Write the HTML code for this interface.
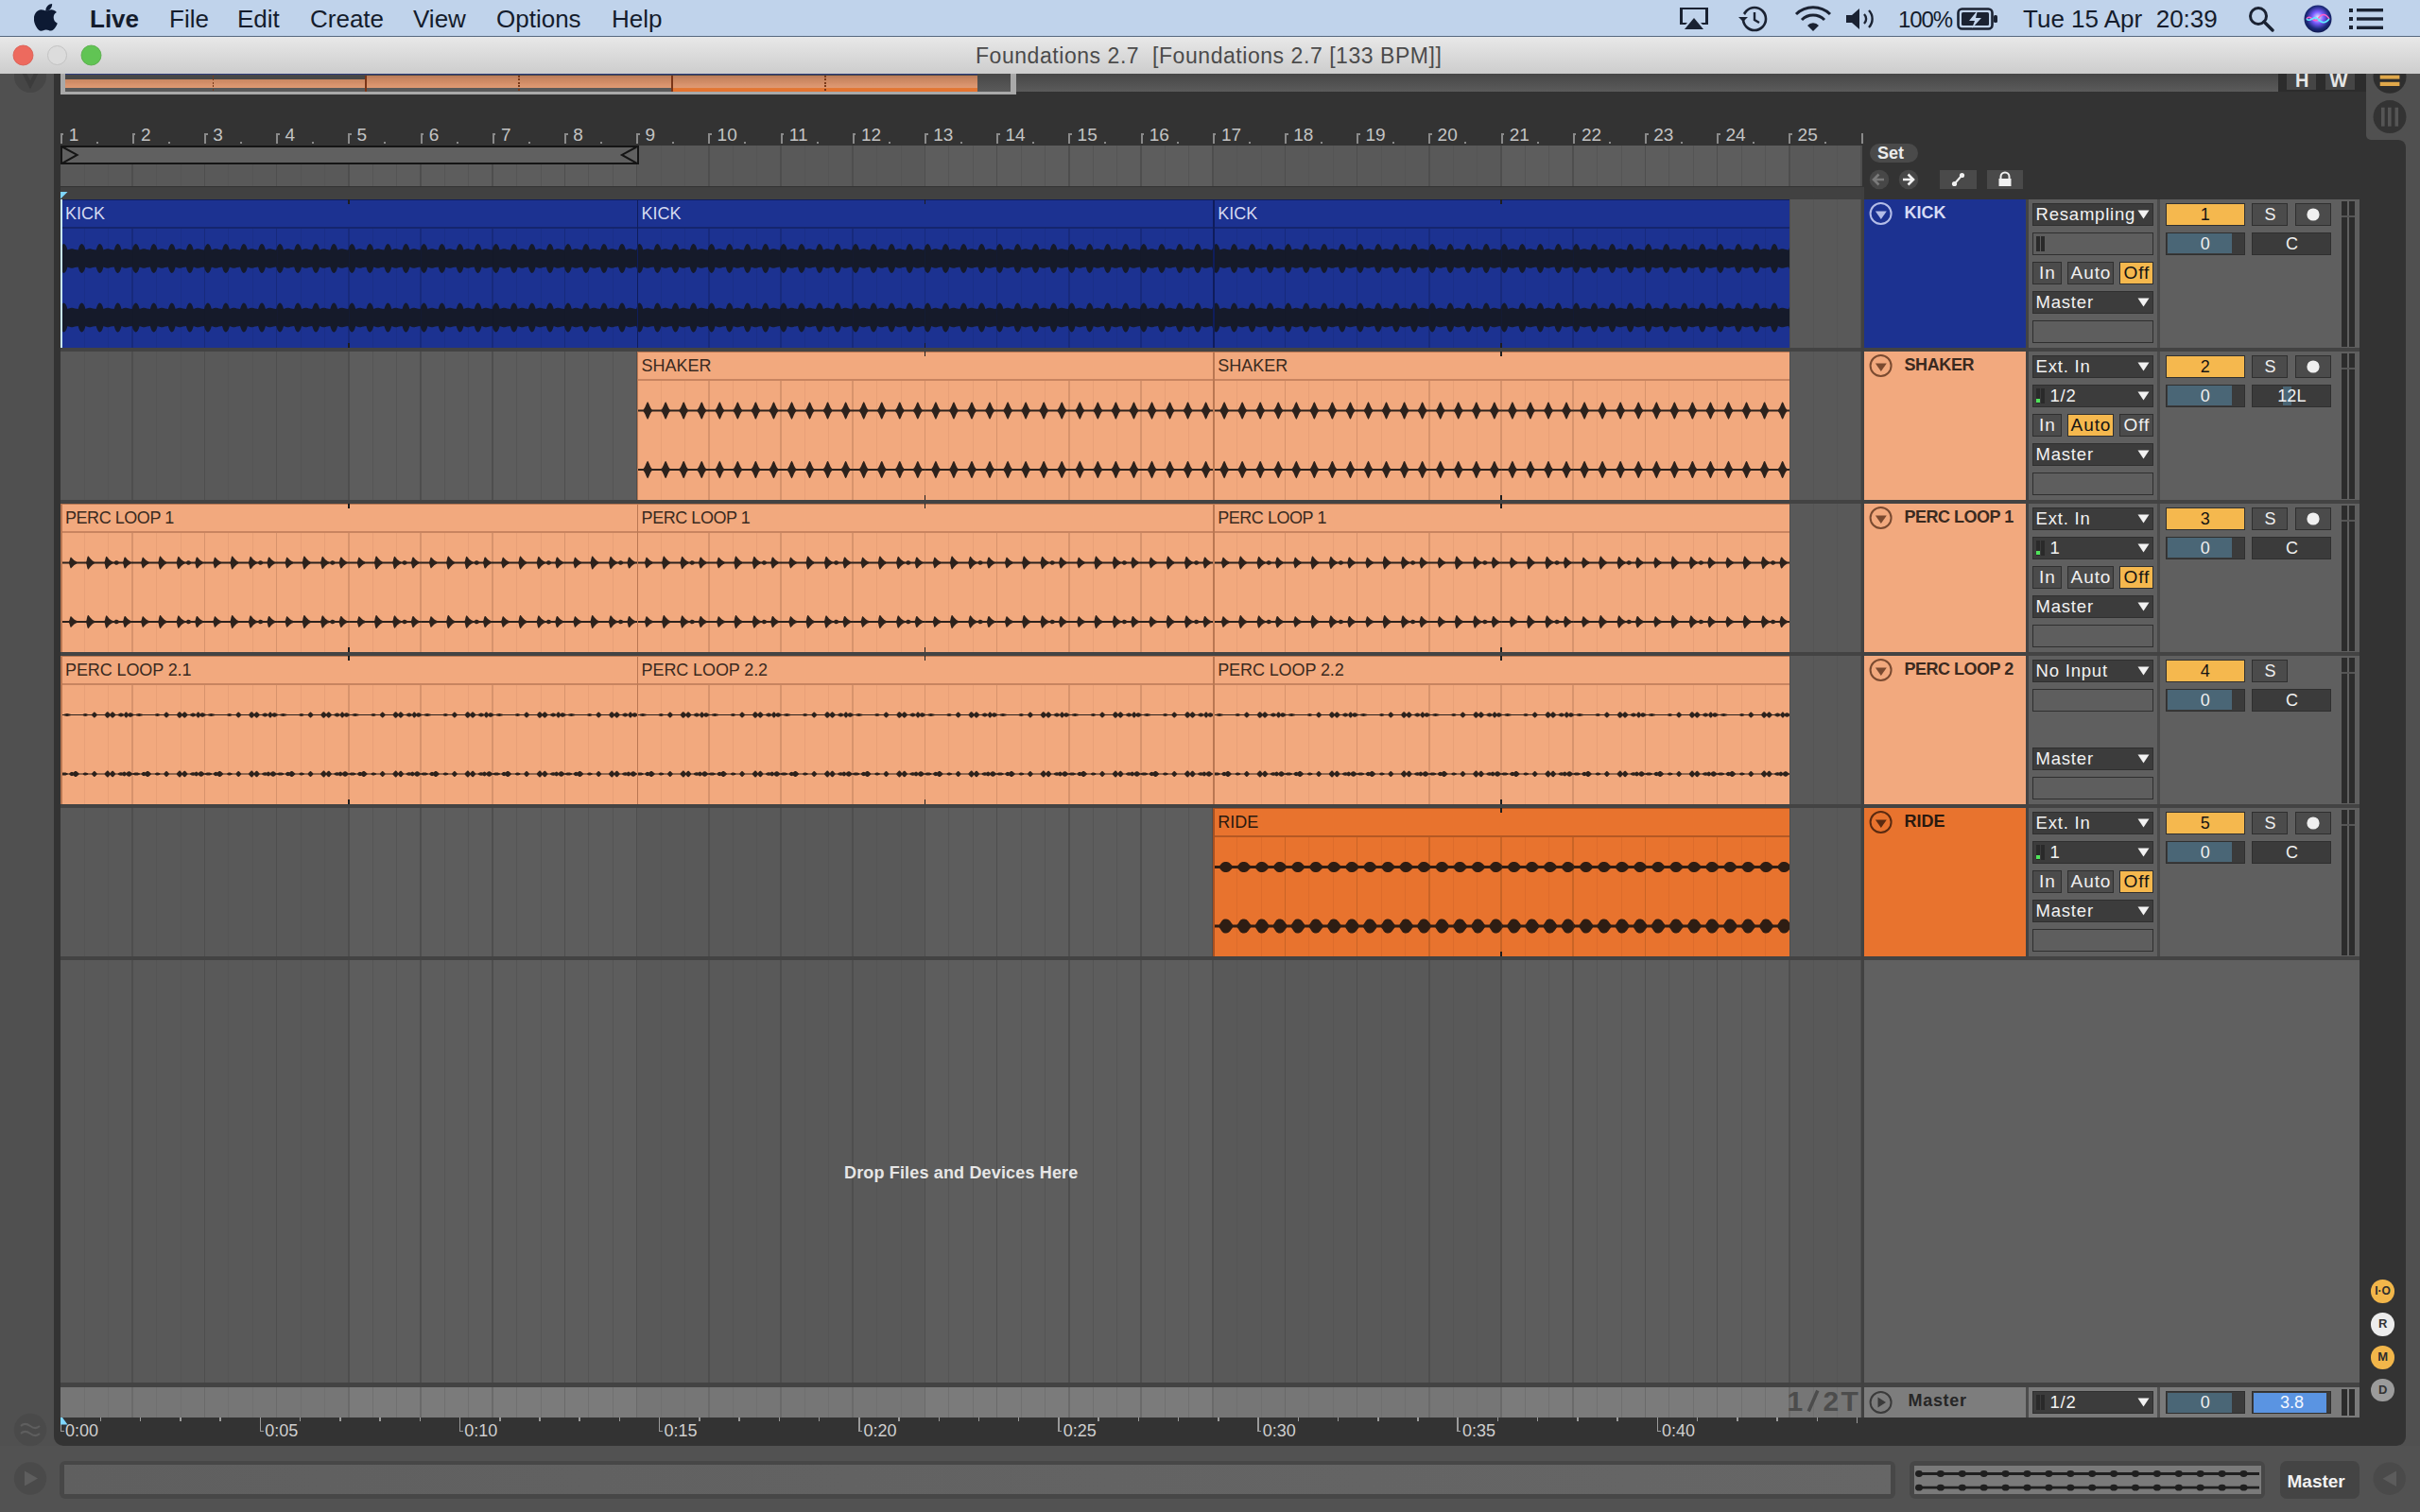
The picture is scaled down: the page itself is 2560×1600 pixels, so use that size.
<!DOCTYPE html>
<html><head><meta charset="utf-8"><title>Ableton Live - Foundations 2.7</title>
<style>
html,body{margin:0;padding:0;}
body{width:2560px;height:1600px;overflow:hidden;position:relative;background:#505050;font-family:"Liberation Sans",sans-serif;}
#root>div,#root>svg{position:absolute;box-sizing:border-box;}
</style></head><body><div id="root">
<div style="left:0.00px;top:1530.00px;width:2560.00px;height:70.00px;background:#525252;"></div>
<div style="left:57.00px;top:78.00px;width:2446.00px;height:1452.00px;background:#333333;border-radius:0 0 10px 10px;"></div>
<div style="left:2460.00px;top:148.00px;width:85.00px;height:1382.00px;background:#333333;border-radius:0 8px 10px 0;"></div>
<div style="left:2490.00px;top:130.00px;width:30.00px;height:18.00px;background:#333333;"></div>
<div style="left:2503.00px;top:78.00px;width:57.00px;height:70.00px;background:#505050;border-radius:0 0 0 5px;"></div>
<div style="left:0.00px;top:0.00px;width:2560.00px;height:38.00px;background:#c0d3eb;"></div>
<div style="left:0.00px;top:37.60px;width:2560.00px;height:1.20px;background:#56687f;"></div>
<svg style="left:36.00px;top:3.00px;" width="26.00" height="30.00" viewBox="0 0 26.00 30.00"><path fill="#0d1a33" d="M17.6 0.5c0.2 2.1-0.6 4-1.8 5.3-1.3 1.4-3.1 2.3-4.9 2.2-0.2-2 0.7-4 1.9-5.2 1.3-1.4 3.3-2.3 4.8-2.3zM23.3 21.2c-0.7 1.6-1 2.3-1.9 3.7-1.3 1.9-3 4.2-5.2 4.2-1.9 0-2.4-1.2-5-1.2-2.6 0-3.2 1.3-5.1 1.3-2.2 0-3.8-2.1-5-4C-2.2 20.1-2.5 13.7 0.1 10.2 1.6 8 3.9 6.8 6.1 6.8c2.2 0 3.6 1.2 5.4 1.2 1.8 0 2.9-1.2 5.4-1.2 1.9 0 4 1 5.5 2.8-4.8 2.6-4 9.5 0.9 11.6z" transform="translate(1.5,0.5)"/></svg>
<div style="left:95.00px;top:6.99px;font-size:26px;line-height:26px;height:26px;color:#141c2c;font-weight:bold;white-space:nowrap;">Live</div>
<div style="left:179.00px;top:6.99px;font-size:26px;line-height:26px;height:26px;color:#141c2c;font-weight:normal;white-space:nowrap;">File</div>
<div style="left:251.00px;top:6.99px;font-size:26px;line-height:26px;height:26px;color:#141c2c;font-weight:normal;white-space:nowrap;">Edit</div>
<div style="left:328.00px;top:6.99px;font-size:26px;line-height:26px;height:26px;color:#141c2c;font-weight:normal;white-space:nowrap;">Create</div>
<div style="left:437.00px;top:6.99px;font-size:26px;line-height:26px;height:26px;color:#141c2c;font-weight:normal;white-space:nowrap;">View</div>
<div style="left:525.00px;top:6.99px;font-size:26px;line-height:26px;height:26px;color:#141c2c;font-weight:normal;white-space:nowrap;">Options</div>
<div style="left:647.00px;top:6.99px;font-size:26px;line-height:26px;height:26px;color:#141c2c;font-weight:normal;white-space:nowrap;">Help</div>
<svg style="left:1774.00px;top:6.00px;" width="36.00" height="28.00" viewBox="0 0 36.00 28.00"><path d="M3 2h30v18h-6l-2-2h5V4H6v14h5l-2 2H3z" fill="#1a2232"/><path d="M18 13l10 12H8z" fill="#1a2232"/></svg>
<svg style="left:1836.00px;top:5.00px;" width="38.00" height="30.00" viewBox="0 0 38.00 30.00"><circle cx="20" cy="15" r="12" fill="none" stroke="#1a2232" stroke-width="2.6"/><path d="M20 8v8l5 3" fill="none" stroke="#1a2232" stroke-width="2.4"/><path d="M2 15l6-6 6 6z" fill="#c3d5ed"/><path d="M3 13l5 5 5-5z" fill="#1a2232"/></svg>
<svg style="left:1898.00px;top:6.00px;" width="40.00" height="28.00" viewBox="0 0 40.00 28.00"><path d="M2 9a26 26 0 0 1 36 0" fill="none" stroke="#1a2232" stroke-width="3"/><path d="M8 15a17 17 0 0 1 24 0" fill="none" stroke="#1a2232" stroke-width="3"/><path d="M14 21a8 8 0 0 1 12 0l-6 6z" fill="#1a2232"/></svg>
<svg style="left:1952.00px;top:8.00px;" width="34.00" height="24.00" viewBox="0 0 34.00 24.00"><path d="M1 8h6l8-7v22l-8-7H1z" fill="#1a2232"/><path d="M20 7a7 7 0 0 1 0 10" fill="none" stroke="#1a2232" stroke-width="2.4"/><path d="M25 3a13 13 0 0 1 0 18" fill="none" stroke="#1a2232" stroke-width="2.4"/></svg>
<div style="left:2008.00px;top:8.68px;font-size:24px;line-height:24px;height:24px;color:#141c2c;font-weight:normal;white-space:nowrap;letter-spacing:-1.1px;">100%</div>
<svg style="left:2070.00px;top:8.00px;" width="44.00" height="24.00" viewBox="0 0 44.00 24.00"><rect x="1.5" y="1.5" width="36" height="21" rx="4" fill="none" stroke="#1a2232" stroke-width="2.6"/><rect x="39" y="8" width="4" height="8" rx="1.5" fill="#1a2232"/><rect x="5" y="5" width="29" height="14" rx="1.5" fill="#1a2232"/><path d="M22 3l-9 11h6l-3 8 10-11h-6z" fill="#c3d5ed"/></svg>
<div style="left:2140.00px;top:6.99px;font-size:26px;line-height:26px;height:26px;color:#141c2c;font-weight:normal;white-space:nowrap;">Tue 15 Apr&nbsp;&nbsp;20:39</div>
<svg style="left:2378.00px;top:6.00px;" width="30.00" height="28.00" viewBox="0 0 30.00 28.00"><circle cx="11" cy="11" r="8.5" fill="none" stroke="#1a2232" stroke-width="3"/><path d="M17 17l9 9" stroke="#1a2232" stroke-width="3.4" stroke-linecap="round"/></svg>
<svg style="left:2436.00px;top:5.00px;" width="32.00" height="30.00" viewBox="0 0 32.00 30.00"><defs><radialGradient id="sg" cx="50%" cy="45%" r="60%"><stop offset="0" stop-color="#e8f0ff"/><stop offset="0.35" stop-color="#7a5cff"/><stop offset="0.7" stop-color="#1b2a7a"/><stop offset="1" stop-color="#0b1240"/></radialGradient></defs><circle cx="16" cy="15" r="14.5" fill="url(#sg)"/><path d="M4 15c4-6 8 6 12 0s8-6 12 0" fill="none" stroke="#ff5ec8" stroke-width="1.6"/><path d="M4 15c4 5 8-5 12 0s8 5 12 0" fill="none" stroke="#5ef0ff" stroke-width="1.6"/></svg>
<svg style="left:2484.00px;top:8.00px;" width="38.00" height="24.00" viewBox="0 0 38.00 24.00"><rect x="1" y="1" width="4" height="4" fill="#1a2232"/><rect x="1" y="10" width="4" height="4" fill="#1a2232"/><rect x="1" y="19" width="4" height="4" fill="#1a2232"/><rect x="9" y="1" width="28" height="3.4" fill="#1a2232"/><rect x="9" y="10.3" width="28" height="3.4" fill="#1a2232"/><rect x="9" y="19.6" width="28" height="3.4" fill="#1a2232"/></svg>
<div style="left:0.00px;top:38.80px;width:2560.00px;height:39.20px;background:linear-gradient(#e8e8e8,#cdcdcd);"></div>
<svg style="left:12.00px;top:47.00px;" width="26.00" height="24.00" viewBox="0 0 26.00 24.00"><circle cx="12.5" cy="11.5" r="10.5" fill="#ed6a5e" stroke="#d9574b" stroke-width="0.8"/></svg>
<svg style="left:48.00px;top:47.00px;" width="26.00" height="24.00" viewBox="0 0 26.00 24.00"><circle cx="12.5" cy="11.5" r="10" fill="#dcdcdc" stroke="#c2c2c2" stroke-width="1"/></svg>
<svg style="left:84.00px;top:47.00px;" width="26.00" height="24.00" viewBox="0 0 26.00 24.00"><circle cx="12.5" cy="11.5" r="10.5" fill="#61c454" stroke="#52a842" stroke-width="0.8"/></svg>
<div style="left:1032.00px;top:47.73px;font-size:23px;line-height:23px;height:23px;color:#4b4b4b;font-weight:normal;white-space:nowrap;letter-spacing:0.55px;">Foundations 2.7&nbsp;&nbsp;[Foundations 2.7 [133 BPM]]</div>
<svg style="left:14.00px;top:78.00px;" width="38.00" height="22.00" viewBox="0 0 38.00 22.00"><circle cx="18" cy="3" r="17" fill="#464646"/><path d="M9 -6l9 18 9-18" fill="none" stroke="#3c3c3c" stroke-width="4"/></svg>
<div style="left:64.00px;top:78.00px;width:1011.00px;height:22.00px;background:#a9a9a9;"></div>
<div style="left:69.00px;top:78.00px;width:1000.00px;height:19.00px;background:linear-gradient(#474747,#5a5a5a);"></div>
<div style="left:69.00px;top:78.00px;width:965.34px;height:1.30px;background:#2e3a78;"></div>
<div style="left:69.00px;top:79.60px;width:317.98px;height:4.00px;background:#474747;"></div>
<div style="left:386.98px;top:79.60px;width:647.36px;height:4.00px;background:linear-gradient(#b97a57,#c98864);"></div>
<div style="left:69.00px;top:83.60px;width:965.34px;height:4.40px;background:linear-gradient(#c98761,#d48e68);"></div>
<div style="left:69.00px;top:88.00px;width:965.34px;height:4.50px;background:linear-gradient(#d4906a,#e09a73);"></div>
<div style="left:69.00px;top:92.50px;width:641.66px;height:4.50px;background:#595959;"></div>
<div style="left:710.66px;top:92.50px;width:323.68px;height:4.50px;background:linear-gradient(#e07a3a,#e8702a);"></div>
<div style="left:224.64px;top:80px;width:1.5px;height:16px;background:repeating-linear-gradient(#7a3a1a 0 2px,transparent 2px 3.5px);"></div>
<div style="left:548.32px;top:80px;width:1.5px;height:16px;background:repeating-linear-gradient(#7a3a1a 0 2px,transparent 2px 3.5px);"></div>
<div style="left:872.00px;top:80px;width:1.5px;height:16px;background:repeating-linear-gradient(#7a3a1a 0 2px,transparent 2px 3.5px);"></div>
<div style="left:386.28px;top:79.60px;width:1.60px;height:17.40px;background:#7a3518;"></div>
<div style="left:709.96px;top:79.60px;width:1.60px;height:17.40px;background:#7a3518;"></div>
<div style="left:1075.00px;top:78.00px;width:1335.00px;height:19.00px;background:linear-gradient(#464646,#5b5b5b);"></div>
<div style="left:2410.00px;top:78.00px;width:93.00px;height:19.00px;background:#2c2c2c;"></div>
<div style="left:2419.00px;top:78.00px;width:31.00px;height:17.00px;background:#454545;"></div>
<div style="left:2459.50px;top:78.00px;width:31.00px;height:17.00px;background:#454545;"></div>
<div style="left:2428.00px;top:74.57px;font-size:20px;line-height:20px;height:20px;color:#e6e6e6;font-weight:bold;white-space:nowrap;">H</div>
<div style="left:2464.50px;top:74.57px;font-size:20px;line-height:20px;height:20px;color:#e6e6e6;font-weight:bold;white-space:nowrap;">W</div>
<svg style="left:2509.00px;top:78.00px;" width="38.00" height="64.00" viewBox="0 0 38.00 64.00"><circle cx="19" cy="3.3" r="17.5" fill="#2e2e2e"/><rect x="8.7" y="1.6" width="20.7" height="4" fill="#e0a84a"/><rect x="8.7" y="8.8" width="20.7" height="4.2" fill="#e0a84a"/><circle cx="19" cy="45.6" r="17.5" fill="#333"/><rect x="10" y="35.7" width="3.6" height="20" fill="#555"/><rect x="17" y="35.7" width="3.6" height="20" fill="#555"/><rect x="24.5" y="35.7" width="3.6" height="20" fill="#555"/></svg>
<div style="left:63.60px;top:141.00px;width:2.00px;height:11.00px;background:#8a8a8a;"></div>
<div style="left:63.60px;top:141.00px;width:3.50px;height:2.00px;background:#8a8a8a;"></div>
<div style="left:72.80px;top:132.62px;font-size:19px;line-height:19px;height:19px;color:#c4c4c4;font-weight:normal;white-space:nowrap;">1</div>
<div style="left:101.60px;top:150.00px;width:2.00px;height:2.00px;background:#8a8a8a;"></div>
<div style="left:139.80px;top:141.00px;width:2.00px;height:11.00px;background:#8a8a8a;"></div>
<div style="left:139.80px;top:141.00px;width:3.50px;height:2.00px;background:#8a8a8a;"></div>
<div style="left:149.00px;top:132.62px;font-size:19px;line-height:19px;height:19px;color:#c4c4c4;font-weight:normal;white-space:nowrap;">2</div>
<div style="left:177.80px;top:150.00px;width:2.00px;height:2.00px;background:#8a8a8a;"></div>
<div style="left:216.00px;top:141.00px;width:2.00px;height:11.00px;background:#8a8a8a;"></div>
<div style="left:216.00px;top:141.00px;width:3.50px;height:2.00px;background:#8a8a8a;"></div>
<div style="left:225.20px;top:132.62px;font-size:19px;line-height:19px;height:19px;color:#c4c4c4;font-weight:normal;white-space:nowrap;">3</div>
<div style="left:254.00px;top:150.00px;width:2.00px;height:2.00px;background:#8a8a8a;"></div>
<div style="left:292.20px;top:141.00px;width:2.00px;height:11.00px;background:#8a8a8a;"></div>
<div style="left:292.20px;top:141.00px;width:3.50px;height:2.00px;background:#8a8a8a;"></div>
<div style="left:301.40px;top:132.62px;font-size:19px;line-height:19px;height:19px;color:#c4c4c4;font-weight:normal;white-space:nowrap;">4</div>
<div style="left:330.20px;top:150.00px;width:2.00px;height:2.00px;background:#8a8a8a;"></div>
<div style="left:368.40px;top:141.00px;width:2.00px;height:11.00px;background:#8a8a8a;"></div>
<div style="left:368.40px;top:141.00px;width:3.50px;height:2.00px;background:#8a8a8a;"></div>
<div style="left:377.60px;top:132.62px;font-size:19px;line-height:19px;height:19px;color:#c4c4c4;font-weight:normal;white-space:nowrap;">5</div>
<div style="left:406.40px;top:150.00px;width:2.00px;height:2.00px;background:#8a8a8a;"></div>
<div style="left:444.60px;top:141.00px;width:2.00px;height:11.00px;background:#8a8a8a;"></div>
<div style="left:444.60px;top:141.00px;width:3.50px;height:2.00px;background:#8a8a8a;"></div>
<div style="left:453.80px;top:132.62px;font-size:19px;line-height:19px;height:19px;color:#c4c4c4;font-weight:normal;white-space:nowrap;">6</div>
<div style="left:482.60px;top:150.00px;width:2.00px;height:2.00px;background:#8a8a8a;"></div>
<div style="left:520.80px;top:141.00px;width:2.00px;height:11.00px;background:#8a8a8a;"></div>
<div style="left:520.80px;top:141.00px;width:3.50px;height:2.00px;background:#8a8a8a;"></div>
<div style="left:530.00px;top:132.62px;font-size:19px;line-height:19px;height:19px;color:#c4c4c4;font-weight:normal;white-space:nowrap;">7</div>
<div style="left:558.80px;top:150.00px;width:2.00px;height:2.00px;background:#8a8a8a;"></div>
<div style="left:597.00px;top:141.00px;width:2.00px;height:11.00px;background:#8a8a8a;"></div>
<div style="left:597.00px;top:141.00px;width:3.50px;height:2.00px;background:#8a8a8a;"></div>
<div style="left:606.20px;top:132.62px;font-size:19px;line-height:19px;height:19px;color:#c4c4c4;font-weight:normal;white-space:nowrap;">8</div>
<div style="left:635.00px;top:150.00px;width:2.00px;height:2.00px;background:#8a8a8a;"></div>
<div style="left:673.20px;top:141.00px;width:2.00px;height:11.00px;background:#8a8a8a;"></div>
<div style="left:673.20px;top:141.00px;width:3.50px;height:2.00px;background:#8a8a8a;"></div>
<div style="left:682.40px;top:132.62px;font-size:19px;line-height:19px;height:19px;color:#c4c4c4;font-weight:normal;white-space:nowrap;">9</div>
<div style="left:711.20px;top:150.00px;width:2.00px;height:2.00px;background:#8a8a8a;"></div>
<div style="left:749.40px;top:141.00px;width:2.00px;height:11.00px;background:#8a8a8a;"></div>
<div style="left:749.40px;top:141.00px;width:3.50px;height:2.00px;background:#8a8a8a;"></div>
<div style="left:758.60px;top:132.62px;font-size:19px;line-height:19px;height:19px;color:#c4c4c4;font-weight:normal;white-space:nowrap;">10</div>
<div style="left:787.40px;top:150.00px;width:2.00px;height:2.00px;background:#8a8a8a;"></div>
<div style="left:825.60px;top:141.00px;width:2.00px;height:11.00px;background:#8a8a8a;"></div>
<div style="left:825.60px;top:141.00px;width:3.50px;height:2.00px;background:#8a8a8a;"></div>
<div style="left:834.80px;top:132.62px;font-size:19px;line-height:19px;height:19px;color:#c4c4c4;font-weight:normal;white-space:nowrap;">11</div>
<div style="left:863.60px;top:150.00px;width:2.00px;height:2.00px;background:#8a8a8a;"></div>
<div style="left:901.80px;top:141.00px;width:2.00px;height:11.00px;background:#8a8a8a;"></div>
<div style="left:901.80px;top:141.00px;width:3.50px;height:2.00px;background:#8a8a8a;"></div>
<div style="left:911.00px;top:132.62px;font-size:19px;line-height:19px;height:19px;color:#c4c4c4;font-weight:normal;white-space:nowrap;">12</div>
<div style="left:939.80px;top:150.00px;width:2.00px;height:2.00px;background:#8a8a8a;"></div>
<div style="left:978.00px;top:141.00px;width:2.00px;height:11.00px;background:#8a8a8a;"></div>
<div style="left:978.00px;top:141.00px;width:3.50px;height:2.00px;background:#8a8a8a;"></div>
<div style="left:987.20px;top:132.62px;font-size:19px;line-height:19px;height:19px;color:#c4c4c4;font-weight:normal;white-space:nowrap;">13</div>
<div style="left:1016.00px;top:150.00px;width:2.00px;height:2.00px;background:#8a8a8a;"></div>
<div style="left:1054.20px;top:141.00px;width:2.00px;height:11.00px;background:#8a8a8a;"></div>
<div style="left:1054.20px;top:141.00px;width:3.50px;height:2.00px;background:#8a8a8a;"></div>
<div style="left:1063.40px;top:132.62px;font-size:19px;line-height:19px;height:19px;color:#c4c4c4;font-weight:normal;white-space:nowrap;">14</div>
<div style="left:1092.20px;top:150.00px;width:2.00px;height:2.00px;background:#8a8a8a;"></div>
<div style="left:1130.40px;top:141.00px;width:2.00px;height:11.00px;background:#8a8a8a;"></div>
<div style="left:1130.40px;top:141.00px;width:3.50px;height:2.00px;background:#8a8a8a;"></div>
<div style="left:1139.60px;top:132.62px;font-size:19px;line-height:19px;height:19px;color:#c4c4c4;font-weight:normal;white-space:nowrap;">15</div>
<div style="left:1168.40px;top:150.00px;width:2.00px;height:2.00px;background:#8a8a8a;"></div>
<div style="left:1206.60px;top:141.00px;width:2.00px;height:11.00px;background:#8a8a8a;"></div>
<div style="left:1206.60px;top:141.00px;width:3.50px;height:2.00px;background:#8a8a8a;"></div>
<div style="left:1215.80px;top:132.62px;font-size:19px;line-height:19px;height:19px;color:#c4c4c4;font-weight:normal;white-space:nowrap;">16</div>
<div style="left:1244.60px;top:150.00px;width:2.00px;height:2.00px;background:#8a8a8a;"></div>
<div style="left:1282.80px;top:141.00px;width:2.00px;height:11.00px;background:#8a8a8a;"></div>
<div style="left:1282.80px;top:141.00px;width:3.50px;height:2.00px;background:#8a8a8a;"></div>
<div style="left:1292.00px;top:132.62px;font-size:19px;line-height:19px;height:19px;color:#c4c4c4;font-weight:normal;white-space:nowrap;">17</div>
<div style="left:1320.80px;top:150.00px;width:2.00px;height:2.00px;background:#8a8a8a;"></div>
<div style="left:1359.00px;top:141.00px;width:2.00px;height:11.00px;background:#8a8a8a;"></div>
<div style="left:1359.00px;top:141.00px;width:3.50px;height:2.00px;background:#8a8a8a;"></div>
<div style="left:1368.20px;top:132.62px;font-size:19px;line-height:19px;height:19px;color:#c4c4c4;font-weight:normal;white-space:nowrap;">18</div>
<div style="left:1397.00px;top:150.00px;width:2.00px;height:2.00px;background:#8a8a8a;"></div>
<div style="left:1435.20px;top:141.00px;width:2.00px;height:11.00px;background:#8a8a8a;"></div>
<div style="left:1435.20px;top:141.00px;width:3.50px;height:2.00px;background:#8a8a8a;"></div>
<div style="left:1444.40px;top:132.62px;font-size:19px;line-height:19px;height:19px;color:#c4c4c4;font-weight:normal;white-space:nowrap;">19</div>
<div style="left:1473.20px;top:150.00px;width:2.00px;height:2.00px;background:#8a8a8a;"></div>
<div style="left:1511.40px;top:141.00px;width:2.00px;height:11.00px;background:#8a8a8a;"></div>
<div style="left:1511.40px;top:141.00px;width:3.50px;height:2.00px;background:#8a8a8a;"></div>
<div style="left:1520.60px;top:132.62px;font-size:19px;line-height:19px;height:19px;color:#c4c4c4;font-weight:normal;white-space:nowrap;">20</div>
<div style="left:1549.40px;top:150.00px;width:2.00px;height:2.00px;background:#8a8a8a;"></div>
<div style="left:1587.60px;top:141.00px;width:2.00px;height:11.00px;background:#8a8a8a;"></div>
<div style="left:1587.60px;top:141.00px;width:3.50px;height:2.00px;background:#8a8a8a;"></div>
<div style="left:1596.80px;top:132.62px;font-size:19px;line-height:19px;height:19px;color:#c4c4c4;font-weight:normal;white-space:nowrap;">21</div>
<div style="left:1625.60px;top:150.00px;width:2.00px;height:2.00px;background:#8a8a8a;"></div>
<div style="left:1663.80px;top:141.00px;width:2.00px;height:11.00px;background:#8a8a8a;"></div>
<div style="left:1663.80px;top:141.00px;width:3.50px;height:2.00px;background:#8a8a8a;"></div>
<div style="left:1673.00px;top:132.62px;font-size:19px;line-height:19px;height:19px;color:#c4c4c4;font-weight:normal;white-space:nowrap;">22</div>
<div style="left:1701.80px;top:150.00px;width:2.00px;height:2.00px;background:#8a8a8a;"></div>
<div style="left:1740.00px;top:141.00px;width:2.00px;height:11.00px;background:#8a8a8a;"></div>
<div style="left:1740.00px;top:141.00px;width:3.50px;height:2.00px;background:#8a8a8a;"></div>
<div style="left:1749.20px;top:132.62px;font-size:19px;line-height:19px;height:19px;color:#c4c4c4;font-weight:normal;white-space:nowrap;">23</div>
<div style="left:1778.00px;top:150.00px;width:2.00px;height:2.00px;background:#8a8a8a;"></div>
<div style="left:1816.20px;top:141.00px;width:2.00px;height:11.00px;background:#8a8a8a;"></div>
<div style="left:1816.20px;top:141.00px;width:3.50px;height:2.00px;background:#8a8a8a;"></div>
<div style="left:1825.40px;top:132.62px;font-size:19px;line-height:19px;height:19px;color:#c4c4c4;font-weight:normal;white-space:nowrap;">24</div>
<div style="left:1854.20px;top:150.00px;width:2.00px;height:2.00px;background:#8a8a8a;"></div>
<div style="left:1892.40px;top:141.00px;width:2.00px;height:11.00px;background:#8a8a8a;"></div>
<div style="left:1892.40px;top:141.00px;width:3.50px;height:2.00px;background:#8a8a8a;"></div>
<div style="left:1901.60px;top:132.62px;font-size:19px;line-height:19px;height:19px;color:#c4c4c4;font-weight:normal;white-space:nowrap;">25</div>
<div style="left:1930.40px;top:150.00px;width:2.00px;height:2.00px;background:#8a8a8a;"></div>
<div style="left:1968.50px;top:141.00px;width:2.00px;height:11.00px;background:#8a8a8a;"></div>
<div style="left:64.00px;top:153.60px;width:304.80px;height:43.90px;background:#595959;"></div>
<div style="left:368.80px;top:153.60px;width:304.80px;height:43.90px;background:#5d5d5d;"></div>
<div style="left:673.60px;top:153.60px;width:304.80px;height:43.90px;background:#595959;"></div>
<div style="left:978.40px;top:153.60px;width:304.80px;height:43.90px;background:#5d5d5d;"></div>
<div style="left:1283.20px;top:153.60px;width:304.80px;height:43.90px;background:#595959;"></div>
<div style="left:1588.00px;top:153.60px;width:304.80px;height:43.90px;background:#5d5d5d;"></div>
<div style="left:1892.80px;top:153.60px;width:76.20px;height:43.90px;background:#595959;"></div>
<div style="left:88.90px;top:153.60px;width:1.00px;height:43.90px;background:#555555;"></div>
<div style="left:114.30px;top:153.60px;width:1.00px;height:43.90px;background:#555555;"></div>
<div style="left:139.45px;top:153.60px;width:1.50px;height:43.90px;background:#4e4e4e;"></div>
<div style="left:165.10px;top:153.60px;width:1.00px;height:43.90px;background:#555555;"></div>
<div style="left:190.50px;top:153.60px;width:1.00px;height:43.90px;background:#555555;"></div>
<div style="left:215.65px;top:153.60px;width:1.50px;height:43.90px;background:#4e4e4e;"></div>
<div style="left:241.30px;top:153.60px;width:1.00px;height:43.90px;background:#555555;"></div>
<div style="left:266.70px;top:153.60px;width:1.00px;height:43.90px;background:#555555;"></div>
<div style="left:291.85px;top:153.60px;width:1.50px;height:43.90px;background:#4e4e4e;"></div>
<div style="left:317.50px;top:153.60px;width:1.00px;height:43.90px;background:#555555;"></div>
<div style="left:342.90px;top:153.60px;width:1.00px;height:43.90px;background:#555555;"></div>
<div style="left:368.05px;top:153.60px;width:1.50px;height:43.90px;background:#4e4e4e;"></div>
<div style="left:393.70px;top:153.60px;width:1.00px;height:43.90px;background:#555555;"></div>
<div style="left:419.10px;top:153.60px;width:1.00px;height:43.90px;background:#555555;"></div>
<div style="left:444.25px;top:153.60px;width:1.50px;height:43.90px;background:#4e4e4e;"></div>
<div style="left:469.90px;top:153.60px;width:1.00px;height:43.90px;background:#555555;"></div>
<div style="left:495.30px;top:153.60px;width:1.00px;height:43.90px;background:#555555;"></div>
<div style="left:520.45px;top:153.60px;width:1.50px;height:43.90px;background:#4e4e4e;"></div>
<div style="left:546.10px;top:153.60px;width:1.00px;height:43.90px;background:#555555;"></div>
<div style="left:571.50px;top:153.60px;width:1.00px;height:43.90px;background:#555555;"></div>
<div style="left:596.65px;top:153.60px;width:1.50px;height:43.90px;background:#4e4e4e;"></div>
<div style="left:622.30px;top:153.60px;width:1.00px;height:43.90px;background:#555555;"></div>
<div style="left:647.70px;top:153.60px;width:1.00px;height:43.90px;background:#555555;"></div>
<div style="left:672.85px;top:153.60px;width:1.50px;height:43.90px;background:#4e4e4e;"></div>
<div style="left:698.50px;top:153.60px;width:1.00px;height:43.90px;background:#555555;"></div>
<div style="left:723.90px;top:153.60px;width:1.00px;height:43.90px;background:#555555;"></div>
<div style="left:749.05px;top:153.60px;width:1.50px;height:43.90px;background:#4e4e4e;"></div>
<div style="left:774.70px;top:153.60px;width:1.00px;height:43.90px;background:#555555;"></div>
<div style="left:800.10px;top:153.60px;width:1.00px;height:43.90px;background:#555555;"></div>
<div style="left:825.25px;top:153.60px;width:1.50px;height:43.90px;background:#4e4e4e;"></div>
<div style="left:850.90px;top:153.60px;width:1.00px;height:43.90px;background:#555555;"></div>
<div style="left:876.30px;top:153.60px;width:1.00px;height:43.90px;background:#555555;"></div>
<div style="left:901.45px;top:153.60px;width:1.50px;height:43.90px;background:#4e4e4e;"></div>
<div style="left:927.10px;top:153.60px;width:1.00px;height:43.90px;background:#555555;"></div>
<div style="left:952.50px;top:153.60px;width:1.00px;height:43.90px;background:#555555;"></div>
<div style="left:977.65px;top:153.60px;width:1.50px;height:43.90px;background:#4e4e4e;"></div>
<div style="left:1003.30px;top:153.60px;width:1.00px;height:43.90px;background:#555555;"></div>
<div style="left:1028.70px;top:153.60px;width:1.00px;height:43.90px;background:#555555;"></div>
<div style="left:1053.85px;top:153.60px;width:1.50px;height:43.90px;background:#4e4e4e;"></div>
<div style="left:1079.50px;top:153.60px;width:1.00px;height:43.90px;background:#555555;"></div>
<div style="left:1104.90px;top:153.60px;width:1.00px;height:43.90px;background:#555555;"></div>
<div style="left:1130.05px;top:153.60px;width:1.50px;height:43.90px;background:#4e4e4e;"></div>
<div style="left:1155.70px;top:153.60px;width:1.00px;height:43.90px;background:#555555;"></div>
<div style="left:1181.10px;top:153.60px;width:1.00px;height:43.90px;background:#555555;"></div>
<div style="left:1206.25px;top:153.60px;width:1.50px;height:43.90px;background:#4e4e4e;"></div>
<div style="left:1231.90px;top:153.60px;width:1.00px;height:43.90px;background:#555555;"></div>
<div style="left:1257.30px;top:153.60px;width:1.00px;height:43.90px;background:#555555;"></div>
<div style="left:1282.45px;top:153.60px;width:1.50px;height:43.90px;background:#4e4e4e;"></div>
<div style="left:1308.10px;top:153.60px;width:1.00px;height:43.90px;background:#555555;"></div>
<div style="left:1333.50px;top:153.60px;width:1.00px;height:43.90px;background:#555555;"></div>
<div style="left:1358.65px;top:153.60px;width:1.50px;height:43.90px;background:#4e4e4e;"></div>
<div style="left:1384.30px;top:153.60px;width:1.00px;height:43.90px;background:#555555;"></div>
<div style="left:1409.70px;top:153.60px;width:1.00px;height:43.90px;background:#555555;"></div>
<div style="left:1434.85px;top:153.60px;width:1.50px;height:43.90px;background:#4e4e4e;"></div>
<div style="left:1460.50px;top:153.60px;width:1.00px;height:43.90px;background:#555555;"></div>
<div style="left:1485.90px;top:153.60px;width:1.00px;height:43.90px;background:#555555;"></div>
<div style="left:1511.05px;top:153.60px;width:1.50px;height:43.90px;background:#4e4e4e;"></div>
<div style="left:1536.70px;top:153.60px;width:1.00px;height:43.90px;background:#555555;"></div>
<div style="left:1562.10px;top:153.60px;width:1.00px;height:43.90px;background:#555555;"></div>
<div style="left:1587.25px;top:153.60px;width:1.50px;height:43.90px;background:#4e4e4e;"></div>
<div style="left:1612.90px;top:153.60px;width:1.00px;height:43.90px;background:#555555;"></div>
<div style="left:1638.30px;top:153.60px;width:1.00px;height:43.90px;background:#555555;"></div>
<div style="left:1663.45px;top:153.60px;width:1.50px;height:43.90px;background:#4e4e4e;"></div>
<div style="left:1689.10px;top:153.60px;width:1.00px;height:43.90px;background:#555555;"></div>
<div style="left:1714.50px;top:153.60px;width:1.00px;height:43.90px;background:#555555;"></div>
<div style="left:1739.65px;top:153.60px;width:1.50px;height:43.90px;background:#4e4e4e;"></div>
<div style="left:1765.30px;top:153.60px;width:1.00px;height:43.90px;background:#555555;"></div>
<div style="left:1790.70px;top:153.60px;width:1.00px;height:43.90px;background:#555555;"></div>
<div style="left:1815.85px;top:153.60px;width:1.50px;height:43.90px;background:#4e4e4e;"></div>
<div style="left:1841.50px;top:153.60px;width:1.00px;height:43.90px;background:#555555;"></div>
<div style="left:1866.90px;top:153.60px;width:1.00px;height:43.90px;background:#555555;"></div>
<div style="left:1892.05px;top:153.60px;width:1.50px;height:43.90px;background:#4e4e4e;"></div>
<div style="left:1917.70px;top:153.60px;width:1.00px;height:43.90px;background:#555555;"></div>
<div style="left:1943.10px;top:153.60px;width:1.00px;height:43.90px;background:#555555;"></div>
<div style="left:1968.25px;top:153.60px;width:1.50px;height:43.90px;background:#4e4e4e;"></div>
<div style="left:64.00px;top:153.60px;width:611.50px;height:20.10px;background:#606060;border:2px solid #151515;"></div>
<svg style="left:64.00px;top:153.60px;" width="612.00" height="20.10" viewBox="0 0 612.00 20.10"><path d="M2 1.5L17.5 10 2 18.6M609.5 1.5L594 10 609.5 18.6" fill="none" stroke="#151515" stroke-width="2"/></svg>
<div style="left:64.00px;top:197.50px;width:1908.00px;height:13.50px;background:#414141;"></div>
<svg style="left:64.00px;top:203.00px;" width="8.00" height="8.00" viewBox="0 0 8.00 8.00"><path d="M0 0H7.5L0 7.5z" fill="#7fd6ff"/></svg>
<div style="left:64.00px;top:211.00px;width:304.80px;height:157.00px;background:#595959;"></div>
<div style="left:368.80px;top:211.00px;width:304.80px;height:157.00px;background:#5d5d5d;"></div>
<div style="left:673.60px;top:211.00px;width:304.80px;height:157.00px;background:#595959;"></div>
<div style="left:978.40px;top:211.00px;width:304.80px;height:157.00px;background:#5d5d5d;"></div>
<div style="left:1283.20px;top:211.00px;width:304.80px;height:157.00px;background:#595959;"></div>
<div style="left:1588.00px;top:211.00px;width:304.80px;height:157.00px;background:#5d5d5d;"></div>
<div style="left:1892.80px;top:211.00px;width:76.20px;height:157.00px;background:#595959;"></div>
<div style="left:88.90px;top:211.00px;width:1.00px;height:157.00px;background:#555555;"></div>
<div style="left:114.30px;top:211.00px;width:1.00px;height:157.00px;background:#555555;"></div>
<div style="left:139.45px;top:211.00px;width:1.50px;height:157.00px;background:#4e4e4e;"></div>
<div style="left:165.10px;top:211.00px;width:1.00px;height:157.00px;background:#555555;"></div>
<div style="left:190.50px;top:211.00px;width:1.00px;height:157.00px;background:#555555;"></div>
<div style="left:215.65px;top:211.00px;width:1.50px;height:157.00px;background:#4e4e4e;"></div>
<div style="left:241.30px;top:211.00px;width:1.00px;height:157.00px;background:#555555;"></div>
<div style="left:266.70px;top:211.00px;width:1.00px;height:157.00px;background:#555555;"></div>
<div style="left:291.85px;top:211.00px;width:1.50px;height:157.00px;background:#4e4e4e;"></div>
<div style="left:317.50px;top:211.00px;width:1.00px;height:157.00px;background:#555555;"></div>
<div style="left:342.90px;top:211.00px;width:1.00px;height:157.00px;background:#555555;"></div>
<div style="left:368.05px;top:211.00px;width:1.50px;height:157.00px;background:#4e4e4e;"></div>
<div style="left:393.70px;top:211.00px;width:1.00px;height:157.00px;background:#555555;"></div>
<div style="left:419.10px;top:211.00px;width:1.00px;height:157.00px;background:#555555;"></div>
<div style="left:444.25px;top:211.00px;width:1.50px;height:157.00px;background:#4e4e4e;"></div>
<div style="left:469.90px;top:211.00px;width:1.00px;height:157.00px;background:#555555;"></div>
<div style="left:495.30px;top:211.00px;width:1.00px;height:157.00px;background:#555555;"></div>
<div style="left:520.45px;top:211.00px;width:1.50px;height:157.00px;background:#4e4e4e;"></div>
<div style="left:546.10px;top:211.00px;width:1.00px;height:157.00px;background:#555555;"></div>
<div style="left:571.50px;top:211.00px;width:1.00px;height:157.00px;background:#555555;"></div>
<div style="left:596.65px;top:211.00px;width:1.50px;height:157.00px;background:#4e4e4e;"></div>
<div style="left:622.30px;top:211.00px;width:1.00px;height:157.00px;background:#555555;"></div>
<div style="left:647.70px;top:211.00px;width:1.00px;height:157.00px;background:#555555;"></div>
<div style="left:672.85px;top:211.00px;width:1.50px;height:157.00px;background:#4e4e4e;"></div>
<div style="left:698.50px;top:211.00px;width:1.00px;height:157.00px;background:#555555;"></div>
<div style="left:723.90px;top:211.00px;width:1.00px;height:157.00px;background:#555555;"></div>
<div style="left:749.05px;top:211.00px;width:1.50px;height:157.00px;background:#4e4e4e;"></div>
<div style="left:774.70px;top:211.00px;width:1.00px;height:157.00px;background:#555555;"></div>
<div style="left:800.10px;top:211.00px;width:1.00px;height:157.00px;background:#555555;"></div>
<div style="left:825.25px;top:211.00px;width:1.50px;height:157.00px;background:#4e4e4e;"></div>
<div style="left:850.90px;top:211.00px;width:1.00px;height:157.00px;background:#555555;"></div>
<div style="left:876.30px;top:211.00px;width:1.00px;height:157.00px;background:#555555;"></div>
<div style="left:901.45px;top:211.00px;width:1.50px;height:157.00px;background:#4e4e4e;"></div>
<div style="left:927.10px;top:211.00px;width:1.00px;height:157.00px;background:#555555;"></div>
<div style="left:952.50px;top:211.00px;width:1.00px;height:157.00px;background:#555555;"></div>
<div style="left:977.65px;top:211.00px;width:1.50px;height:157.00px;background:#4e4e4e;"></div>
<div style="left:1003.30px;top:211.00px;width:1.00px;height:157.00px;background:#555555;"></div>
<div style="left:1028.70px;top:211.00px;width:1.00px;height:157.00px;background:#555555;"></div>
<div style="left:1053.85px;top:211.00px;width:1.50px;height:157.00px;background:#4e4e4e;"></div>
<div style="left:1079.50px;top:211.00px;width:1.00px;height:157.00px;background:#555555;"></div>
<div style="left:1104.90px;top:211.00px;width:1.00px;height:157.00px;background:#555555;"></div>
<div style="left:1130.05px;top:211.00px;width:1.50px;height:157.00px;background:#4e4e4e;"></div>
<div style="left:1155.70px;top:211.00px;width:1.00px;height:157.00px;background:#555555;"></div>
<div style="left:1181.10px;top:211.00px;width:1.00px;height:157.00px;background:#555555;"></div>
<div style="left:1206.25px;top:211.00px;width:1.50px;height:157.00px;background:#4e4e4e;"></div>
<div style="left:1231.90px;top:211.00px;width:1.00px;height:157.00px;background:#555555;"></div>
<div style="left:1257.30px;top:211.00px;width:1.00px;height:157.00px;background:#555555;"></div>
<div style="left:1282.45px;top:211.00px;width:1.50px;height:157.00px;background:#4e4e4e;"></div>
<div style="left:1308.10px;top:211.00px;width:1.00px;height:157.00px;background:#555555;"></div>
<div style="left:1333.50px;top:211.00px;width:1.00px;height:157.00px;background:#555555;"></div>
<div style="left:1358.65px;top:211.00px;width:1.50px;height:157.00px;background:#4e4e4e;"></div>
<div style="left:1384.30px;top:211.00px;width:1.00px;height:157.00px;background:#555555;"></div>
<div style="left:1409.70px;top:211.00px;width:1.00px;height:157.00px;background:#555555;"></div>
<div style="left:1434.85px;top:211.00px;width:1.50px;height:157.00px;background:#4e4e4e;"></div>
<div style="left:1460.50px;top:211.00px;width:1.00px;height:157.00px;background:#555555;"></div>
<div style="left:1485.90px;top:211.00px;width:1.00px;height:157.00px;background:#555555;"></div>
<div style="left:1511.05px;top:211.00px;width:1.50px;height:157.00px;background:#4e4e4e;"></div>
<div style="left:1536.70px;top:211.00px;width:1.00px;height:157.00px;background:#555555;"></div>
<div style="left:1562.10px;top:211.00px;width:1.00px;height:157.00px;background:#555555;"></div>
<div style="left:1587.25px;top:211.00px;width:1.50px;height:157.00px;background:#4e4e4e;"></div>
<div style="left:1612.90px;top:211.00px;width:1.00px;height:157.00px;background:#555555;"></div>
<div style="left:1638.30px;top:211.00px;width:1.00px;height:157.00px;background:#555555;"></div>
<div style="left:1663.45px;top:211.00px;width:1.50px;height:157.00px;background:#4e4e4e;"></div>
<div style="left:1689.10px;top:211.00px;width:1.00px;height:157.00px;background:#555555;"></div>
<div style="left:1714.50px;top:211.00px;width:1.00px;height:157.00px;background:#555555;"></div>
<div style="left:1739.65px;top:211.00px;width:1.50px;height:157.00px;background:#4e4e4e;"></div>
<div style="left:1765.30px;top:211.00px;width:1.00px;height:157.00px;background:#555555;"></div>
<div style="left:1790.70px;top:211.00px;width:1.00px;height:157.00px;background:#555555;"></div>
<div style="left:1815.85px;top:211.00px;width:1.50px;height:157.00px;background:#4e4e4e;"></div>
<div style="left:1841.50px;top:211.00px;width:1.00px;height:157.00px;background:#555555;"></div>
<div style="left:1866.90px;top:211.00px;width:1.00px;height:157.00px;background:#555555;"></div>
<div style="left:1892.05px;top:211.00px;width:1.50px;height:157.00px;background:#4e4e4e;"></div>
<div style="left:1917.70px;top:211.00px;width:1.00px;height:157.00px;background:#555555;"></div>
<div style="left:1943.10px;top:211.00px;width:1.00px;height:157.00px;background:#555555;"></div>
<div style="left:1968.25px;top:211.00px;width:1.50px;height:157.00px;background:#4e4e4e;"></div>
<div style="left:64.00px;top:368.00px;width:1908.00px;height:4.00px;background:#434343;"></div>
<div style="left:64.00px;top:372.00px;width:304.80px;height:157.00px;background:#595959;"></div>
<div style="left:368.80px;top:372.00px;width:304.80px;height:157.00px;background:#5d5d5d;"></div>
<div style="left:673.60px;top:372.00px;width:304.80px;height:157.00px;background:#595959;"></div>
<div style="left:978.40px;top:372.00px;width:304.80px;height:157.00px;background:#5d5d5d;"></div>
<div style="left:1283.20px;top:372.00px;width:304.80px;height:157.00px;background:#595959;"></div>
<div style="left:1588.00px;top:372.00px;width:304.80px;height:157.00px;background:#5d5d5d;"></div>
<div style="left:1892.80px;top:372.00px;width:76.20px;height:157.00px;background:#595959;"></div>
<div style="left:88.90px;top:372.00px;width:1.00px;height:157.00px;background:#555555;"></div>
<div style="left:114.30px;top:372.00px;width:1.00px;height:157.00px;background:#555555;"></div>
<div style="left:139.45px;top:372.00px;width:1.50px;height:157.00px;background:#4e4e4e;"></div>
<div style="left:165.10px;top:372.00px;width:1.00px;height:157.00px;background:#555555;"></div>
<div style="left:190.50px;top:372.00px;width:1.00px;height:157.00px;background:#555555;"></div>
<div style="left:215.65px;top:372.00px;width:1.50px;height:157.00px;background:#4e4e4e;"></div>
<div style="left:241.30px;top:372.00px;width:1.00px;height:157.00px;background:#555555;"></div>
<div style="left:266.70px;top:372.00px;width:1.00px;height:157.00px;background:#555555;"></div>
<div style="left:291.85px;top:372.00px;width:1.50px;height:157.00px;background:#4e4e4e;"></div>
<div style="left:317.50px;top:372.00px;width:1.00px;height:157.00px;background:#555555;"></div>
<div style="left:342.90px;top:372.00px;width:1.00px;height:157.00px;background:#555555;"></div>
<div style="left:368.05px;top:372.00px;width:1.50px;height:157.00px;background:#4e4e4e;"></div>
<div style="left:393.70px;top:372.00px;width:1.00px;height:157.00px;background:#555555;"></div>
<div style="left:419.10px;top:372.00px;width:1.00px;height:157.00px;background:#555555;"></div>
<div style="left:444.25px;top:372.00px;width:1.50px;height:157.00px;background:#4e4e4e;"></div>
<div style="left:469.90px;top:372.00px;width:1.00px;height:157.00px;background:#555555;"></div>
<div style="left:495.30px;top:372.00px;width:1.00px;height:157.00px;background:#555555;"></div>
<div style="left:520.45px;top:372.00px;width:1.50px;height:157.00px;background:#4e4e4e;"></div>
<div style="left:546.10px;top:372.00px;width:1.00px;height:157.00px;background:#555555;"></div>
<div style="left:571.50px;top:372.00px;width:1.00px;height:157.00px;background:#555555;"></div>
<div style="left:596.65px;top:372.00px;width:1.50px;height:157.00px;background:#4e4e4e;"></div>
<div style="left:622.30px;top:372.00px;width:1.00px;height:157.00px;background:#555555;"></div>
<div style="left:647.70px;top:372.00px;width:1.00px;height:157.00px;background:#555555;"></div>
<div style="left:672.85px;top:372.00px;width:1.50px;height:157.00px;background:#4e4e4e;"></div>
<div style="left:698.50px;top:372.00px;width:1.00px;height:157.00px;background:#555555;"></div>
<div style="left:723.90px;top:372.00px;width:1.00px;height:157.00px;background:#555555;"></div>
<div style="left:749.05px;top:372.00px;width:1.50px;height:157.00px;background:#4e4e4e;"></div>
<div style="left:774.70px;top:372.00px;width:1.00px;height:157.00px;background:#555555;"></div>
<div style="left:800.10px;top:372.00px;width:1.00px;height:157.00px;background:#555555;"></div>
<div style="left:825.25px;top:372.00px;width:1.50px;height:157.00px;background:#4e4e4e;"></div>
<div style="left:850.90px;top:372.00px;width:1.00px;height:157.00px;background:#555555;"></div>
<div style="left:876.30px;top:372.00px;width:1.00px;height:157.00px;background:#555555;"></div>
<div style="left:901.45px;top:372.00px;width:1.50px;height:157.00px;background:#4e4e4e;"></div>
<div style="left:927.10px;top:372.00px;width:1.00px;height:157.00px;background:#555555;"></div>
<div style="left:952.50px;top:372.00px;width:1.00px;height:157.00px;background:#555555;"></div>
<div style="left:977.65px;top:372.00px;width:1.50px;height:157.00px;background:#4e4e4e;"></div>
<div style="left:1003.30px;top:372.00px;width:1.00px;height:157.00px;background:#555555;"></div>
<div style="left:1028.70px;top:372.00px;width:1.00px;height:157.00px;background:#555555;"></div>
<div style="left:1053.85px;top:372.00px;width:1.50px;height:157.00px;background:#4e4e4e;"></div>
<div style="left:1079.50px;top:372.00px;width:1.00px;height:157.00px;background:#555555;"></div>
<div style="left:1104.90px;top:372.00px;width:1.00px;height:157.00px;background:#555555;"></div>
<div style="left:1130.05px;top:372.00px;width:1.50px;height:157.00px;background:#4e4e4e;"></div>
<div style="left:1155.70px;top:372.00px;width:1.00px;height:157.00px;background:#555555;"></div>
<div style="left:1181.10px;top:372.00px;width:1.00px;height:157.00px;background:#555555;"></div>
<div style="left:1206.25px;top:372.00px;width:1.50px;height:157.00px;background:#4e4e4e;"></div>
<div style="left:1231.90px;top:372.00px;width:1.00px;height:157.00px;background:#555555;"></div>
<div style="left:1257.30px;top:372.00px;width:1.00px;height:157.00px;background:#555555;"></div>
<div style="left:1282.45px;top:372.00px;width:1.50px;height:157.00px;background:#4e4e4e;"></div>
<div style="left:1308.10px;top:372.00px;width:1.00px;height:157.00px;background:#555555;"></div>
<div style="left:1333.50px;top:372.00px;width:1.00px;height:157.00px;background:#555555;"></div>
<div style="left:1358.65px;top:372.00px;width:1.50px;height:157.00px;background:#4e4e4e;"></div>
<div style="left:1384.30px;top:372.00px;width:1.00px;height:157.00px;background:#555555;"></div>
<div style="left:1409.70px;top:372.00px;width:1.00px;height:157.00px;background:#555555;"></div>
<div style="left:1434.85px;top:372.00px;width:1.50px;height:157.00px;background:#4e4e4e;"></div>
<div style="left:1460.50px;top:372.00px;width:1.00px;height:157.00px;background:#555555;"></div>
<div style="left:1485.90px;top:372.00px;width:1.00px;height:157.00px;background:#555555;"></div>
<div style="left:1511.05px;top:372.00px;width:1.50px;height:157.00px;background:#4e4e4e;"></div>
<div style="left:1536.70px;top:372.00px;width:1.00px;height:157.00px;background:#555555;"></div>
<div style="left:1562.10px;top:372.00px;width:1.00px;height:157.00px;background:#555555;"></div>
<div style="left:1587.25px;top:372.00px;width:1.50px;height:157.00px;background:#4e4e4e;"></div>
<div style="left:1612.90px;top:372.00px;width:1.00px;height:157.00px;background:#555555;"></div>
<div style="left:1638.30px;top:372.00px;width:1.00px;height:157.00px;background:#555555;"></div>
<div style="left:1663.45px;top:372.00px;width:1.50px;height:157.00px;background:#4e4e4e;"></div>
<div style="left:1689.10px;top:372.00px;width:1.00px;height:157.00px;background:#555555;"></div>
<div style="left:1714.50px;top:372.00px;width:1.00px;height:157.00px;background:#555555;"></div>
<div style="left:1739.65px;top:372.00px;width:1.50px;height:157.00px;background:#4e4e4e;"></div>
<div style="left:1765.30px;top:372.00px;width:1.00px;height:157.00px;background:#555555;"></div>
<div style="left:1790.70px;top:372.00px;width:1.00px;height:157.00px;background:#555555;"></div>
<div style="left:1815.85px;top:372.00px;width:1.50px;height:157.00px;background:#4e4e4e;"></div>
<div style="left:1841.50px;top:372.00px;width:1.00px;height:157.00px;background:#555555;"></div>
<div style="left:1866.90px;top:372.00px;width:1.00px;height:157.00px;background:#555555;"></div>
<div style="left:1892.05px;top:372.00px;width:1.50px;height:157.00px;background:#4e4e4e;"></div>
<div style="left:1917.70px;top:372.00px;width:1.00px;height:157.00px;background:#555555;"></div>
<div style="left:1943.10px;top:372.00px;width:1.00px;height:157.00px;background:#555555;"></div>
<div style="left:1968.25px;top:372.00px;width:1.50px;height:157.00px;background:#4e4e4e;"></div>
<div style="left:64.00px;top:529.00px;width:1908.00px;height:4.00px;background:#434343;"></div>
<div style="left:64.00px;top:533.00px;width:304.80px;height:157.00px;background:#595959;"></div>
<div style="left:368.80px;top:533.00px;width:304.80px;height:157.00px;background:#5d5d5d;"></div>
<div style="left:673.60px;top:533.00px;width:304.80px;height:157.00px;background:#595959;"></div>
<div style="left:978.40px;top:533.00px;width:304.80px;height:157.00px;background:#5d5d5d;"></div>
<div style="left:1283.20px;top:533.00px;width:304.80px;height:157.00px;background:#595959;"></div>
<div style="left:1588.00px;top:533.00px;width:304.80px;height:157.00px;background:#5d5d5d;"></div>
<div style="left:1892.80px;top:533.00px;width:76.20px;height:157.00px;background:#595959;"></div>
<div style="left:88.90px;top:533.00px;width:1.00px;height:157.00px;background:#555555;"></div>
<div style="left:114.30px;top:533.00px;width:1.00px;height:157.00px;background:#555555;"></div>
<div style="left:139.45px;top:533.00px;width:1.50px;height:157.00px;background:#4e4e4e;"></div>
<div style="left:165.10px;top:533.00px;width:1.00px;height:157.00px;background:#555555;"></div>
<div style="left:190.50px;top:533.00px;width:1.00px;height:157.00px;background:#555555;"></div>
<div style="left:215.65px;top:533.00px;width:1.50px;height:157.00px;background:#4e4e4e;"></div>
<div style="left:241.30px;top:533.00px;width:1.00px;height:157.00px;background:#555555;"></div>
<div style="left:266.70px;top:533.00px;width:1.00px;height:157.00px;background:#555555;"></div>
<div style="left:291.85px;top:533.00px;width:1.50px;height:157.00px;background:#4e4e4e;"></div>
<div style="left:317.50px;top:533.00px;width:1.00px;height:157.00px;background:#555555;"></div>
<div style="left:342.90px;top:533.00px;width:1.00px;height:157.00px;background:#555555;"></div>
<div style="left:368.05px;top:533.00px;width:1.50px;height:157.00px;background:#4e4e4e;"></div>
<div style="left:393.70px;top:533.00px;width:1.00px;height:157.00px;background:#555555;"></div>
<div style="left:419.10px;top:533.00px;width:1.00px;height:157.00px;background:#555555;"></div>
<div style="left:444.25px;top:533.00px;width:1.50px;height:157.00px;background:#4e4e4e;"></div>
<div style="left:469.90px;top:533.00px;width:1.00px;height:157.00px;background:#555555;"></div>
<div style="left:495.30px;top:533.00px;width:1.00px;height:157.00px;background:#555555;"></div>
<div style="left:520.45px;top:533.00px;width:1.50px;height:157.00px;background:#4e4e4e;"></div>
<div style="left:546.10px;top:533.00px;width:1.00px;height:157.00px;background:#555555;"></div>
<div style="left:571.50px;top:533.00px;width:1.00px;height:157.00px;background:#555555;"></div>
<div style="left:596.65px;top:533.00px;width:1.50px;height:157.00px;background:#4e4e4e;"></div>
<div style="left:622.30px;top:533.00px;width:1.00px;height:157.00px;background:#555555;"></div>
<div style="left:647.70px;top:533.00px;width:1.00px;height:157.00px;background:#555555;"></div>
<div style="left:672.85px;top:533.00px;width:1.50px;height:157.00px;background:#4e4e4e;"></div>
<div style="left:698.50px;top:533.00px;width:1.00px;height:157.00px;background:#555555;"></div>
<div style="left:723.90px;top:533.00px;width:1.00px;height:157.00px;background:#555555;"></div>
<div style="left:749.05px;top:533.00px;width:1.50px;height:157.00px;background:#4e4e4e;"></div>
<div style="left:774.70px;top:533.00px;width:1.00px;height:157.00px;background:#555555;"></div>
<div style="left:800.10px;top:533.00px;width:1.00px;height:157.00px;background:#555555;"></div>
<div style="left:825.25px;top:533.00px;width:1.50px;height:157.00px;background:#4e4e4e;"></div>
<div style="left:850.90px;top:533.00px;width:1.00px;height:157.00px;background:#555555;"></div>
<div style="left:876.30px;top:533.00px;width:1.00px;height:157.00px;background:#555555;"></div>
<div style="left:901.45px;top:533.00px;width:1.50px;height:157.00px;background:#4e4e4e;"></div>
<div style="left:927.10px;top:533.00px;width:1.00px;height:157.00px;background:#555555;"></div>
<div style="left:952.50px;top:533.00px;width:1.00px;height:157.00px;background:#555555;"></div>
<div style="left:977.65px;top:533.00px;width:1.50px;height:157.00px;background:#4e4e4e;"></div>
<div style="left:1003.30px;top:533.00px;width:1.00px;height:157.00px;background:#555555;"></div>
<div style="left:1028.70px;top:533.00px;width:1.00px;height:157.00px;background:#555555;"></div>
<div style="left:1053.85px;top:533.00px;width:1.50px;height:157.00px;background:#4e4e4e;"></div>
<div style="left:1079.50px;top:533.00px;width:1.00px;height:157.00px;background:#555555;"></div>
<div style="left:1104.90px;top:533.00px;width:1.00px;height:157.00px;background:#555555;"></div>
<div style="left:1130.05px;top:533.00px;width:1.50px;height:157.00px;background:#4e4e4e;"></div>
<div style="left:1155.70px;top:533.00px;width:1.00px;height:157.00px;background:#555555;"></div>
<div style="left:1181.10px;top:533.00px;width:1.00px;height:157.00px;background:#555555;"></div>
<div style="left:1206.25px;top:533.00px;width:1.50px;height:157.00px;background:#4e4e4e;"></div>
<div style="left:1231.90px;top:533.00px;width:1.00px;height:157.00px;background:#555555;"></div>
<div style="left:1257.30px;top:533.00px;width:1.00px;height:157.00px;background:#555555;"></div>
<div style="left:1282.45px;top:533.00px;width:1.50px;height:157.00px;background:#4e4e4e;"></div>
<div style="left:1308.10px;top:533.00px;width:1.00px;height:157.00px;background:#555555;"></div>
<div style="left:1333.50px;top:533.00px;width:1.00px;height:157.00px;background:#555555;"></div>
<div style="left:1358.65px;top:533.00px;width:1.50px;height:157.00px;background:#4e4e4e;"></div>
<div style="left:1384.30px;top:533.00px;width:1.00px;height:157.00px;background:#555555;"></div>
<div style="left:1409.70px;top:533.00px;width:1.00px;height:157.00px;background:#555555;"></div>
<div style="left:1434.85px;top:533.00px;width:1.50px;height:157.00px;background:#4e4e4e;"></div>
<div style="left:1460.50px;top:533.00px;width:1.00px;height:157.00px;background:#555555;"></div>
<div style="left:1485.90px;top:533.00px;width:1.00px;height:157.00px;background:#555555;"></div>
<div style="left:1511.05px;top:533.00px;width:1.50px;height:157.00px;background:#4e4e4e;"></div>
<div style="left:1536.70px;top:533.00px;width:1.00px;height:157.00px;background:#555555;"></div>
<div style="left:1562.10px;top:533.00px;width:1.00px;height:157.00px;background:#555555;"></div>
<div style="left:1587.25px;top:533.00px;width:1.50px;height:157.00px;background:#4e4e4e;"></div>
<div style="left:1612.90px;top:533.00px;width:1.00px;height:157.00px;background:#555555;"></div>
<div style="left:1638.30px;top:533.00px;width:1.00px;height:157.00px;background:#555555;"></div>
<div style="left:1663.45px;top:533.00px;width:1.50px;height:157.00px;background:#4e4e4e;"></div>
<div style="left:1689.10px;top:533.00px;width:1.00px;height:157.00px;background:#555555;"></div>
<div style="left:1714.50px;top:533.00px;width:1.00px;height:157.00px;background:#555555;"></div>
<div style="left:1739.65px;top:533.00px;width:1.50px;height:157.00px;background:#4e4e4e;"></div>
<div style="left:1765.30px;top:533.00px;width:1.00px;height:157.00px;background:#555555;"></div>
<div style="left:1790.70px;top:533.00px;width:1.00px;height:157.00px;background:#555555;"></div>
<div style="left:1815.85px;top:533.00px;width:1.50px;height:157.00px;background:#4e4e4e;"></div>
<div style="left:1841.50px;top:533.00px;width:1.00px;height:157.00px;background:#555555;"></div>
<div style="left:1866.90px;top:533.00px;width:1.00px;height:157.00px;background:#555555;"></div>
<div style="left:1892.05px;top:533.00px;width:1.50px;height:157.00px;background:#4e4e4e;"></div>
<div style="left:1917.70px;top:533.00px;width:1.00px;height:157.00px;background:#555555;"></div>
<div style="left:1943.10px;top:533.00px;width:1.00px;height:157.00px;background:#555555;"></div>
<div style="left:1968.25px;top:533.00px;width:1.50px;height:157.00px;background:#4e4e4e;"></div>
<div style="left:64.00px;top:690.00px;width:1908.00px;height:4.00px;background:#434343;"></div>
<div style="left:64.00px;top:694.00px;width:304.80px;height:157.00px;background:#595959;"></div>
<div style="left:368.80px;top:694.00px;width:304.80px;height:157.00px;background:#5d5d5d;"></div>
<div style="left:673.60px;top:694.00px;width:304.80px;height:157.00px;background:#595959;"></div>
<div style="left:978.40px;top:694.00px;width:304.80px;height:157.00px;background:#5d5d5d;"></div>
<div style="left:1283.20px;top:694.00px;width:304.80px;height:157.00px;background:#595959;"></div>
<div style="left:1588.00px;top:694.00px;width:304.80px;height:157.00px;background:#5d5d5d;"></div>
<div style="left:1892.80px;top:694.00px;width:76.20px;height:157.00px;background:#595959;"></div>
<div style="left:88.90px;top:694.00px;width:1.00px;height:157.00px;background:#555555;"></div>
<div style="left:114.30px;top:694.00px;width:1.00px;height:157.00px;background:#555555;"></div>
<div style="left:139.45px;top:694.00px;width:1.50px;height:157.00px;background:#4e4e4e;"></div>
<div style="left:165.10px;top:694.00px;width:1.00px;height:157.00px;background:#555555;"></div>
<div style="left:190.50px;top:694.00px;width:1.00px;height:157.00px;background:#555555;"></div>
<div style="left:215.65px;top:694.00px;width:1.50px;height:157.00px;background:#4e4e4e;"></div>
<div style="left:241.30px;top:694.00px;width:1.00px;height:157.00px;background:#555555;"></div>
<div style="left:266.70px;top:694.00px;width:1.00px;height:157.00px;background:#555555;"></div>
<div style="left:291.85px;top:694.00px;width:1.50px;height:157.00px;background:#4e4e4e;"></div>
<div style="left:317.50px;top:694.00px;width:1.00px;height:157.00px;background:#555555;"></div>
<div style="left:342.90px;top:694.00px;width:1.00px;height:157.00px;background:#555555;"></div>
<div style="left:368.05px;top:694.00px;width:1.50px;height:157.00px;background:#4e4e4e;"></div>
<div style="left:393.70px;top:694.00px;width:1.00px;height:157.00px;background:#555555;"></div>
<div style="left:419.10px;top:694.00px;width:1.00px;height:157.00px;background:#555555;"></div>
<div style="left:444.25px;top:694.00px;width:1.50px;height:157.00px;background:#4e4e4e;"></div>
<div style="left:469.90px;top:694.00px;width:1.00px;height:157.00px;background:#555555;"></div>
<div style="left:495.30px;top:694.00px;width:1.00px;height:157.00px;background:#555555;"></div>
<div style="left:520.45px;top:694.00px;width:1.50px;height:157.00px;background:#4e4e4e;"></div>
<div style="left:546.10px;top:694.00px;width:1.00px;height:157.00px;background:#555555;"></div>
<div style="left:571.50px;top:694.00px;width:1.00px;height:157.00px;background:#555555;"></div>
<div style="left:596.65px;top:694.00px;width:1.50px;height:157.00px;background:#4e4e4e;"></div>
<div style="left:622.30px;top:694.00px;width:1.00px;height:157.00px;background:#555555;"></div>
<div style="left:647.70px;top:694.00px;width:1.00px;height:157.00px;background:#555555;"></div>
<div style="left:672.85px;top:694.00px;width:1.50px;height:157.00px;background:#4e4e4e;"></div>
<div style="left:698.50px;top:694.00px;width:1.00px;height:157.00px;background:#555555;"></div>
<div style="left:723.90px;top:694.00px;width:1.00px;height:157.00px;background:#555555;"></div>
<div style="left:749.05px;top:694.00px;width:1.50px;height:157.00px;background:#4e4e4e;"></div>
<div style="left:774.70px;top:694.00px;width:1.00px;height:157.00px;background:#555555;"></div>
<div style="left:800.10px;top:694.00px;width:1.00px;height:157.00px;background:#555555;"></div>
<div style="left:825.25px;top:694.00px;width:1.50px;height:157.00px;background:#4e4e4e;"></div>
<div style="left:850.90px;top:694.00px;width:1.00px;height:157.00px;background:#555555;"></div>
<div style="left:876.30px;top:694.00px;width:1.00px;height:157.00px;background:#555555;"></div>
<div style="left:901.45px;top:694.00px;width:1.50px;height:157.00px;background:#4e4e4e;"></div>
<div style="left:927.10px;top:694.00px;width:1.00px;height:157.00px;background:#555555;"></div>
<div style="left:952.50px;top:694.00px;width:1.00px;height:157.00px;background:#555555;"></div>
<div style="left:977.65px;top:694.00px;width:1.50px;height:157.00px;background:#4e4e4e;"></div>
<div style="left:1003.30px;top:694.00px;width:1.00px;height:157.00px;background:#555555;"></div>
<div style="left:1028.70px;top:694.00px;width:1.00px;height:157.00px;background:#555555;"></div>
<div style="left:1053.85px;top:694.00px;width:1.50px;height:157.00px;background:#4e4e4e;"></div>
<div style="left:1079.50px;top:694.00px;width:1.00px;height:157.00px;background:#555555;"></div>
<div style="left:1104.90px;top:694.00px;width:1.00px;height:157.00px;background:#555555;"></div>
<div style="left:1130.05px;top:694.00px;width:1.50px;height:157.00px;background:#4e4e4e;"></div>
<div style="left:1155.70px;top:694.00px;width:1.00px;height:157.00px;background:#555555;"></div>
<div style="left:1181.10px;top:694.00px;width:1.00px;height:157.00px;background:#555555;"></div>
<div style="left:1206.25px;top:694.00px;width:1.50px;height:157.00px;background:#4e4e4e;"></div>
<div style="left:1231.90px;top:694.00px;width:1.00px;height:157.00px;background:#555555;"></div>
<div style="left:1257.30px;top:694.00px;width:1.00px;height:157.00px;background:#555555;"></div>
<div style="left:1282.45px;top:694.00px;width:1.50px;height:157.00px;background:#4e4e4e;"></div>
<div style="left:1308.10px;top:694.00px;width:1.00px;height:157.00px;background:#555555;"></div>
<div style="left:1333.50px;top:694.00px;width:1.00px;height:157.00px;background:#555555;"></div>
<div style="left:1358.65px;top:694.00px;width:1.50px;height:157.00px;background:#4e4e4e;"></div>
<div style="left:1384.30px;top:694.00px;width:1.00px;height:157.00px;background:#555555;"></div>
<div style="left:1409.70px;top:694.00px;width:1.00px;height:157.00px;background:#555555;"></div>
<div style="left:1434.85px;top:694.00px;width:1.50px;height:157.00px;background:#4e4e4e;"></div>
<div style="left:1460.50px;top:694.00px;width:1.00px;height:157.00px;background:#555555;"></div>
<div style="left:1485.90px;top:694.00px;width:1.00px;height:157.00px;background:#555555;"></div>
<div style="left:1511.05px;top:694.00px;width:1.50px;height:157.00px;background:#4e4e4e;"></div>
<div style="left:1536.70px;top:694.00px;width:1.00px;height:157.00px;background:#555555;"></div>
<div style="left:1562.10px;top:694.00px;width:1.00px;height:157.00px;background:#555555;"></div>
<div style="left:1587.25px;top:694.00px;width:1.50px;height:157.00px;background:#4e4e4e;"></div>
<div style="left:1612.90px;top:694.00px;width:1.00px;height:157.00px;background:#555555;"></div>
<div style="left:1638.30px;top:694.00px;width:1.00px;height:157.00px;background:#555555;"></div>
<div style="left:1663.45px;top:694.00px;width:1.50px;height:157.00px;background:#4e4e4e;"></div>
<div style="left:1689.10px;top:694.00px;width:1.00px;height:157.00px;background:#555555;"></div>
<div style="left:1714.50px;top:694.00px;width:1.00px;height:157.00px;background:#555555;"></div>
<div style="left:1739.65px;top:694.00px;width:1.50px;height:157.00px;background:#4e4e4e;"></div>
<div style="left:1765.30px;top:694.00px;width:1.00px;height:157.00px;background:#555555;"></div>
<div style="left:1790.70px;top:694.00px;width:1.00px;height:157.00px;background:#555555;"></div>
<div style="left:1815.85px;top:694.00px;width:1.50px;height:157.00px;background:#4e4e4e;"></div>
<div style="left:1841.50px;top:694.00px;width:1.00px;height:157.00px;background:#555555;"></div>
<div style="left:1866.90px;top:694.00px;width:1.00px;height:157.00px;background:#555555;"></div>
<div style="left:1892.05px;top:694.00px;width:1.50px;height:157.00px;background:#4e4e4e;"></div>
<div style="left:1917.70px;top:694.00px;width:1.00px;height:157.00px;background:#555555;"></div>
<div style="left:1943.10px;top:694.00px;width:1.00px;height:157.00px;background:#555555;"></div>
<div style="left:1968.25px;top:694.00px;width:1.50px;height:157.00px;background:#4e4e4e;"></div>
<div style="left:64.00px;top:851.00px;width:1908.00px;height:4.00px;background:#434343;"></div>
<div style="left:64.00px;top:855.00px;width:304.80px;height:157.00px;background:#595959;"></div>
<div style="left:368.80px;top:855.00px;width:304.80px;height:157.00px;background:#5d5d5d;"></div>
<div style="left:673.60px;top:855.00px;width:304.80px;height:157.00px;background:#595959;"></div>
<div style="left:978.40px;top:855.00px;width:304.80px;height:157.00px;background:#5d5d5d;"></div>
<div style="left:1283.20px;top:855.00px;width:304.80px;height:157.00px;background:#595959;"></div>
<div style="left:1588.00px;top:855.00px;width:304.80px;height:157.00px;background:#5d5d5d;"></div>
<div style="left:1892.80px;top:855.00px;width:76.20px;height:157.00px;background:#595959;"></div>
<div style="left:88.90px;top:855.00px;width:1.00px;height:157.00px;background:#555555;"></div>
<div style="left:114.30px;top:855.00px;width:1.00px;height:157.00px;background:#555555;"></div>
<div style="left:139.45px;top:855.00px;width:1.50px;height:157.00px;background:#4e4e4e;"></div>
<div style="left:165.10px;top:855.00px;width:1.00px;height:157.00px;background:#555555;"></div>
<div style="left:190.50px;top:855.00px;width:1.00px;height:157.00px;background:#555555;"></div>
<div style="left:215.65px;top:855.00px;width:1.50px;height:157.00px;background:#4e4e4e;"></div>
<div style="left:241.30px;top:855.00px;width:1.00px;height:157.00px;background:#555555;"></div>
<div style="left:266.70px;top:855.00px;width:1.00px;height:157.00px;background:#555555;"></div>
<div style="left:291.85px;top:855.00px;width:1.50px;height:157.00px;background:#4e4e4e;"></div>
<div style="left:317.50px;top:855.00px;width:1.00px;height:157.00px;background:#555555;"></div>
<div style="left:342.90px;top:855.00px;width:1.00px;height:157.00px;background:#555555;"></div>
<div style="left:368.05px;top:855.00px;width:1.50px;height:157.00px;background:#4e4e4e;"></div>
<div style="left:393.70px;top:855.00px;width:1.00px;height:157.00px;background:#555555;"></div>
<div style="left:419.10px;top:855.00px;width:1.00px;height:157.00px;background:#555555;"></div>
<div style="left:444.25px;top:855.00px;width:1.50px;height:157.00px;background:#4e4e4e;"></div>
<div style="left:469.90px;top:855.00px;width:1.00px;height:157.00px;background:#555555;"></div>
<div style="left:495.30px;top:855.00px;width:1.00px;height:157.00px;background:#555555;"></div>
<div style="left:520.45px;top:855.00px;width:1.50px;height:157.00px;background:#4e4e4e;"></div>
<div style="left:546.10px;top:855.00px;width:1.00px;height:157.00px;background:#555555;"></div>
<div style="left:571.50px;top:855.00px;width:1.00px;height:157.00px;background:#555555;"></div>
<div style="left:596.65px;top:855.00px;width:1.50px;height:157.00px;background:#4e4e4e;"></div>
<div style="left:622.30px;top:855.00px;width:1.00px;height:157.00px;background:#555555;"></div>
<div style="left:647.70px;top:855.00px;width:1.00px;height:157.00px;background:#555555;"></div>
<div style="left:672.85px;top:855.00px;width:1.50px;height:157.00px;background:#4e4e4e;"></div>
<div style="left:698.50px;top:855.00px;width:1.00px;height:157.00px;background:#555555;"></div>
<div style="left:723.90px;top:855.00px;width:1.00px;height:157.00px;background:#555555;"></div>
<div style="left:749.05px;top:855.00px;width:1.50px;height:157.00px;background:#4e4e4e;"></div>
<div style="left:774.70px;top:855.00px;width:1.00px;height:157.00px;background:#555555;"></div>
<div style="left:800.10px;top:855.00px;width:1.00px;height:157.00px;background:#555555;"></div>
<div style="left:825.25px;top:855.00px;width:1.50px;height:157.00px;background:#4e4e4e;"></div>
<div style="left:850.90px;top:855.00px;width:1.00px;height:157.00px;background:#555555;"></div>
<div style="left:876.30px;top:855.00px;width:1.00px;height:157.00px;background:#555555;"></div>
<div style="left:901.45px;top:855.00px;width:1.50px;height:157.00px;background:#4e4e4e;"></div>
<div style="left:927.10px;top:855.00px;width:1.00px;height:157.00px;background:#555555;"></div>
<div style="left:952.50px;top:855.00px;width:1.00px;height:157.00px;background:#555555;"></div>
<div style="left:977.65px;top:855.00px;width:1.50px;height:157.00px;background:#4e4e4e;"></div>
<div style="left:1003.30px;top:855.00px;width:1.00px;height:157.00px;background:#555555;"></div>
<div style="left:1028.70px;top:855.00px;width:1.00px;height:157.00px;background:#555555;"></div>
<div style="left:1053.85px;top:855.00px;width:1.50px;height:157.00px;background:#4e4e4e;"></div>
<div style="left:1079.50px;top:855.00px;width:1.00px;height:157.00px;background:#555555;"></div>
<div style="left:1104.90px;top:855.00px;width:1.00px;height:157.00px;background:#555555;"></div>
<div style="left:1130.05px;top:855.00px;width:1.50px;height:157.00px;background:#4e4e4e;"></div>
<div style="left:1155.70px;top:855.00px;width:1.00px;height:157.00px;background:#555555;"></div>
<div style="left:1181.10px;top:855.00px;width:1.00px;height:157.00px;background:#555555;"></div>
<div style="left:1206.25px;top:855.00px;width:1.50px;height:157.00px;background:#4e4e4e;"></div>
<div style="left:1231.90px;top:855.00px;width:1.00px;height:157.00px;background:#555555;"></div>
<div style="left:1257.30px;top:855.00px;width:1.00px;height:157.00px;background:#555555;"></div>
<div style="left:1282.45px;top:855.00px;width:1.50px;height:157.00px;background:#4e4e4e;"></div>
<div style="left:1308.10px;top:855.00px;width:1.00px;height:157.00px;background:#555555;"></div>
<div style="left:1333.50px;top:855.00px;width:1.00px;height:157.00px;background:#555555;"></div>
<div style="left:1358.65px;top:855.00px;width:1.50px;height:157.00px;background:#4e4e4e;"></div>
<div style="left:1384.30px;top:855.00px;width:1.00px;height:157.00px;background:#555555;"></div>
<div style="left:1409.70px;top:855.00px;width:1.00px;height:157.00px;background:#555555;"></div>
<div style="left:1434.85px;top:855.00px;width:1.50px;height:157.00px;background:#4e4e4e;"></div>
<div style="left:1460.50px;top:855.00px;width:1.00px;height:157.00px;background:#555555;"></div>
<div style="left:1485.90px;top:855.00px;width:1.00px;height:157.00px;background:#555555;"></div>
<div style="left:1511.05px;top:855.00px;width:1.50px;height:157.00px;background:#4e4e4e;"></div>
<div style="left:1536.70px;top:855.00px;width:1.00px;height:157.00px;background:#555555;"></div>
<div style="left:1562.10px;top:855.00px;width:1.00px;height:157.00px;background:#555555;"></div>
<div style="left:1587.25px;top:855.00px;width:1.50px;height:157.00px;background:#4e4e4e;"></div>
<div style="left:1612.90px;top:855.00px;width:1.00px;height:157.00px;background:#555555;"></div>
<div style="left:1638.30px;top:855.00px;width:1.00px;height:157.00px;background:#555555;"></div>
<div style="left:1663.45px;top:855.00px;width:1.50px;height:157.00px;background:#4e4e4e;"></div>
<div style="left:1689.10px;top:855.00px;width:1.00px;height:157.00px;background:#555555;"></div>
<div style="left:1714.50px;top:855.00px;width:1.00px;height:157.00px;background:#555555;"></div>
<div style="left:1739.65px;top:855.00px;width:1.50px;height:157.00px;background:#4e4e4e;"></div>
<div style="left:1765.30px;top:855.00px;width:1.00px;height:157.00px;background:#555555;"></div>
<div style="left:1790.70px;top:855.00px;width:1.00px;height:157.00px;background:#555555;"></div>
<div style="left:1815.85px;top:855.00px;width:1.50px;height:157.00px;background:#4e4e4e;"></div>
<div style="left:1841.50px;top:855.00px;width:1.00px;height:157.00px;background:#555555;"></div>
<div style="left:1866.90px;top:855.00px;width:1.00px;height:157.00px;background:#555555;"></div>
<div style="left:1892.05px;top:855.00px;width:1.50px;height:157.00px;background:#4e4e4e;"></div>
<div style="left:1917.70px;top:855.00px;width:1.00px;height:157.00px;background:#555555;"></div>
<div style="left:1943.10px;top:855.00px;width:1.00px;height:157.00px;background:#555555;"></div>
<div style="left:1968.25px;top:855.00px;width:1.50px;height:157.00px;background:#4e4e4e;"></div>
<div style="left:64.00px;top:1012.00px;width:1908.00px;height:4.00px;background:#434343;"></div>
<div style="left:64.00px;top:1016.00px;width:304.80px;height:447.00px;background:#595959;"></div>
<div style="left:368.80px;top:1016.00px;width:304.80px;height:447.00px;background:#5d5d5d;"></div>
<div style="left:673.60px;top:1016.00px;width:304.80px;height:447.00px;background:#595959;"></div>
<div style="left:978.40px;top:1016.00px;width:304.80px;height:447.00px;background:#5d5d5d;"></div>
<div style="left:1283.20px;top:1016.00px;width:304.80px;height:447.00px;background:#595959;"></div>
<div style="left:1588.00px;top:1016.00px;width:304.80px;height:447.00px;background:#5d5d5d;"></div>
<div style="left:1892.80px;top:1016.00px;width:76.20px;height:447.00px;background:#595959;"></div>
<div style="left:88.90px;top:1016.00px;width:1.00px;height:447.00px;background:#555555;"></div>
<div style="left:114.30px;top:1016.00px;width:1.00px;height:447.00px;background:#555555;"></div>
<div style="left:139.45px;top:1016.00px;width:1.50px;height:447.00px;background:#4e4e4e;"></div>
<div style="left:165.10px;top:1016.00px;width:1.00px;height:447.00px;background:#555555;"></div>
<div style="left:190.50px;top:1016.00px;width:1.00px;height:447.00px;background:#555555;"></div>
<div style="left:215.65px;top:1016.00px;width:1.50px;height:447.00px;background:#4e4e4e;"></div>
<div style="left:241.30px;top:1016.00px;width:1.00px;height:447.00px;background:#555555;"></div>
<div style="left:266.70px;top:1016.00px;width:1.00px;height:447.00px;background:#555555;"></div>
<div style="left:291.85px;top:1016.00px;width:1.50px;height:447.00px;background:#4e4e4e;"></div>
<div style="left:317.50px;top:1016.00px;width:1.00px;height:447.00px;background:#555555;"></div>
<div style="left:342.90px;top:1016.00px;width:1.00px;height:447.00px;background:#555555;"></div>
<div style="left:368.05px;top:1016.00px;width:1.50px;height:447.00px;background:#4e4e4e;"></div>
<div style="left:393.70px;top:1016.00px;width:1.00px;height:447.00px;background:#555555;"></div>
<div style="left:419.10px;top:1016.00px;width:1.00px;height:447.00px;background:#555555;"></div>
<div style="left:444.25px;top:1016.00px;width:1.50px;height:447.00px;background:#4e4e4e;"></div>
<div style="left:469.90px;top:1016.00px;width:1.00px;height:447.00px;background:#555555;"></div>
<div style="left:495.30px;top:1016.00px;width:1.00px;height:447.00px;background:#555555;"></div>
<div style="left:520.45px;top:1016.00px;width:1.50px;height:447.00px;background:#4e4e4e;"></div>
<div style="left:546.10px;top:1016.00px;width:1.00px;height:447.00px;background:#555555;"></div>
<div style="left:571.50px;top:1016.00px;width:1.00px;height:447.00px;background:#555555;"></div>
<div style="left:596.65px;top:1016.00px;width:1.50px;height:447.00px;background:#4e4e4e;"></div>
<div style="left:622.30px;top:1016.00px;width:1.00px;height:447.00px;background:#555555;"></div>
<div style="left:647.70px;top:1016.00px;width:1.00px;height:447.00px;background:#555555;"></div>
<div style="left:672.85px;top:1016.00px;width:1.50px;height:447.00px;background:#4e4e4e;"></div>
<div style="left:698.50px;top:1016.00px;width:1.00px;height:447.00px;background:#555555;"></div>
<div style="left:723.90px;top:1016.00px;width:1.00px;height:447.00px;background:#555555;"></div>
<div style="left:749.05px;top:1016.00px;width:1.50px;height:447.00px;background:#4e4e4e;"></div>
<div style="left:774.70px;top:1016.00px;width:1.00px;height:447.00px;background:#555555;"></div>
<div style="left:800.10px;top:1016.00px;width:1.00px;height:447.00px;background:#555555;"></div>
<div style="left:825.25px;top:1016.00px;width:1.50px;height:447.00px;background:#4e4e4e;"></div>
<div style="left:850.90px;top:1016.00px;width:1.00px;height:447.00px;background:#555555;"></div>
<div style="left:876.30px;top:1016.00px;width:1.00px;height:447.00px;background:#555555;"></div>
<div style="left:901.45px;top:1016.00px;width:1.50px;height:447.00px;background:#4e4e4e;"></div>
<div style="left:927.10px;top:1016.00px;width:1.00px;height:447.00px;background:#555555;"></div>
<div style="left:952.50px;top:1016.00px;width:1.00px;height:447.00px;background:#555555;"></div>
<div style="left:977.65px;top:1016.00px;width:1.50px;height:447.00px;background:#4e4e4e;"></div>
<div style="left:1003.30px;top:1016.00px;width:1.00px;height:447.00px;background:#555555;"></div>
<div style="left:1028.70px;top:1016.00px;width:1.00px;height:447.00px;background:#555555;"></div>
<div style="left:1053.85px;top:1016.00px;width:1.50px;height:447.00px;background:#4e4e4e;"></div>
<div style="left:1079.50px;top:1016.00px;width:1.00px;height:447.00px;background:#555555;"></div>
<div style="left:1104.90px;top:1016.00px;width:1.00px;height:447.00px;background:#555555;"></div>
<div style="left:1130.05px;top:1016.00px;width:1.50px;height:447.00px;background:#4e4e4e;"></div>
<div style="left:1155.70px;top:1016.00px;width:1.00px;height:447.00px;background:#555555;"></div>
<div style="left:1181.10px;top:1016.00px;width:1.00px;height:447.00px;background:#555555;"></div>
<div style="left:1206.25px;top:1016.00px;width:1.50px;height:447.00px;background:#4e4e4e;"></div>
<div style="left:1231.90px;top:1016.00px;width:1.00px;height:447.00px;background:#555555;"></div>
<div style="left:1257.30px;top:1016.00px;width:1.00px;height:447.00px;background:#555555;"></div>
<div style="left:1282.45px;top:1016.00px;width:1.50px;height:447.00px;background:#4e4e4e;"></div>
<div style="left:1308.10px;top:1016.00px;width:1.00px;height:447.00px;background:#555555;"></div>
<div style="left:1333.50px;top:1016.00px;width:1.00px;height:447.00px;background:#555555;"></div>
<div style="left:1358.65px;top:1016.00px;width:1.50px;height:447.00px;background:#4e4e4e;"></div>
<div style="left:1384.30px;top:1016.00px;width:1.00px;height:447.00px;background:#555555;"></div>
<div style="left:1409.70px;top:1016.00px;width:1.00px;height:447.00px;background:#555555;"></div>
<div style="left:1434.85px;top:1016.00px;width:1.50px;height:447.00px;background:#4e4e4e;"></div>
<div style="left:1460.50px;top:1016.00px;width:1.00px;height:447.00px;background:#555555;"></div>
<div style="left:1485.90px;top:1016.00px;width:1.00px;height:447.00px;background:#555555;"></div>
<div style="left:1511.05px;top:1016.00px;width:1.50px;height:447.00px;background:#4e4e4e;"></div>
<div style="left:1536.70px;top:1016.00px;width:1.00px;height:447.00px;background:#555555;"></div>
<div style="left:1562.10px;top:1016.00px;width:1.00px;height:447.00px;background:#555555;"></div>
<div style="left:1587.25px;top:1016.00px;width:1.50px;height:447.00px;background:#4e4e4e;"></div>
<div style="left:1612.90px;top:1016.00px;width:1.00px;height:447.00px;background:#555555;"></div>
<div style="left:1638.30px;top:1016.00px;width:1.00px;height:447.00px;background:#555555;"></div>
<div style="left:1663.45px;top:1016.00px;width:1.50px;height:447.00px;background:#4e4e4e;"></div>
<div style="left:1689.10px;top:1016.00px;width:1.00px;height:447.00px;background:#555555;"></div>
<div style="left:1714.50px;top:1016.00px;width:1.00px;height:447.00px;background:#555555;"></div>
<div style="left:1739.65px;top:1016.00px;width:1.50px;height:447.00px;background:#4e4e4e;"></div>
<div style="left:1765.30px;top:1016.00px;width:1.00px;height:447.00px;background:#555555;"></div>
<div style="left:1790.70px;top:1016.00px;width:1.00px;height:447.00px;background:#555555;"></div>
<div style="left:1815.85px;top:1016.00px;width:1.50px;height:447.00px;background:#4e4e4e;"></div>
<div style="left:1841.50px;top:1016.00px;width:1.00px;height:447.00px;background:#555555;"></div>
<div style="left:1866.90px;top:1016.00px;width:1.00px;height:447.00px;background:#555555;"></div>
<div style="left:1892.05px;top:1016.00px;width:1.50px;height:447.00px;background:#4e4e4e;"></div>
<div style="left:1917.70px;top:1016.00px;width:1.00px;height:447.00px;background:#555555;"></div>
<div style="left:1943.10px;top:1016.00px;width:1.00px;height:447.00px;background:#555555;"></div>
<div style="left:1968.25px;top:1016.00px;width:1.50px;height:447.00px;background:#4e4e4e;"></div>
<div style="left:64.00px;top:1463.00px;width:2432.00px;height:5.00px;background:#434343;"></div>
<div style="left:64.00px;top:1468.00px;width:304.80px;height:32.00px;background:#767676;"></div>
<div style="left:368.80px;top:1468.00px;width:304.80px;height:32.00px;background:#7b7b7b;"></div>
<div style="left:673.60px;top:1468.00px;width:304.80px;height:32.00px;background:#767676;"></div>
<div style="left:978.40px;top:1468.00px;width:304.80px;height:32.00px;background:#7b7b7b;"></div>
<div style="left:1283.20px;top:1468.00px;width:304.80px;height:32.00px;background:#767676;"></div>
<div style="left:1588.00px;top:1468.00px;width:304.80px;height:32.00px;background:#7b7b7b;"></div>
<div style="left:1892.80px;top:1468.00px;width:76.20px;height:32.00px;background:#767676;"></div>
<div style="left:88.90px;top:1468.00px;width:1.00px;height:32.00px;background:#707070;"></div>
<div style="left:114.30px;top:1468.00px;width:1.00px;height:32.00px;background:#707070;"></div>
<div style="left:139.45px;top:1468.00px;width:1.50px;height:32.00px;background:#6a6a6a;"></div>
<div style="left:165.10px;top:1468.00px;width:1.00px;height:32.00px;background:#707070;"></div>
<div style="left:190.50px;top:1468.00px;width:1.00px;height:32.00px;background:#707070;"></div>
<div style="left:215.65px;top:1468.00px;width:1.50px;height:32.00px;background:#6a6a6a;"></div>
<div style="left:241.30px;top:1468.00px;width:1.00px;height:32.00px;background:#707070;"></div>
<div style="left:266.70px;top:1468.00px;width:1.00px;height:32.00px;background:#707070;"></div>
<div style="left:291.85px;top:1468.00px;width:1.50px;height:32.00px;background:#6a6a6a;"></div>
<div style="left:317.50px;top:1468.00px;width:1.00px;height:32.00px;background:#707070;"></div>
<div style="left:342.90px;top:1468.00px;width:1.00px;height:32.00px;background:#707070;"></div>
<div style="left:368.05px;top:1468.00px;width:1.50px;height:32.00px;background:#6a6a6a;"></div>
<div style="left:393.70px;top:1468.00px;width:1.00px;height:32.00px;background:#707070;"></div>
<div style="left:419.10px;top:1468.00px;width:1.00px;height:32.00px;background:#707070;"></div>
<div style="left:444.25px;top:1468.00px;width:1.50px;height:32.00px;background:#6a6a6a;"></div>
<div style="left:469.90px;top:1468.00px;width:1.00px;height:32.00px;background:#707070;"></div>
<div style="left:495.30px;top:1468.00px;width:1.00px;height:32.00px;background:#707070;"></div>
<div style="left:520.45px;top:1468.00px;width:1.50px;height:32.00px;background:#6a6a6a;"></div>
<div style="left:546.10px;top:1468.00px;width:1.00px;height:32.00px;background:#707070;"></div>
<div style="left:571.50px;top:1468.00px;width:1.00px;height:32.00px;background:#707070;"></div>
<div style="left:596.65px;top:1468.00px;width:1.50px;height:32.00px;background:#6a6a6a;"></div>
<div style="left:622.30px;top:1468.00px;width:1.00px;height:32.00px;background:#707070;"></div>
<div style="left:647.70px;top:1468.00px;width:1.00px;height:32.00px;background:#707070;"></div>
<div style="left:672.85px;top:1468.00px;width:1.50px;height:32.00px;background:#6a6a6a;"></div>
<div style="left:698.50px;top:1468.00px;width:1.00px;height:32.00px;background:#707070;"></div>
<div style="left:723.90px;top:1468.00px;width:1.00px;height:32.00px;background:#707070;"></div>
<div style="left:749.05px;top:1468.00px;width:1.50px;height:32.00px;background:#6a6a6a;"></div>
<div style="left:774.70px;top:1468.00px;width:1.00px;height:32.00px;background:#707070;"></div>
<div style="left:800.10px;top:1468.00px;width:1.00px;height:32.00px;background:#707070;"></div>
<div style="left:825.25px;top:1468.00px;width:1.50px;height:32.00px;background:#6a6a6a;"></div>
<div style="left:850.90px;top:1468.00px;width:1.00px;height:32.00px;background:#707070;"></div>
<div style="left:876.30px;top:1468.00px;width:1.00px;height:32.00px;background:#707070;"></div>
<div style="left:901.45px;top:1468.00px;width:1.50px;height:32.00px;background:#6a6a6a;"></div>
<div style="left:927.10px;top:1468.00px;width:1.00px;height:32.00px;background:#707070;"></div>
<div style="left:952.50px;top:1468.00px;width:1.00px;height:32.00px;background:#707070;"></div>
<div style="left:977.65px;top:1468.00px;width:1.50px;height:32.00px;background:#6a6a6a;"></div>
<div style="left:1003.30px;top:1468.00px;width:1.00px;height:32.00px;background:#707070;"></div>
<div style="left:1028.70px;top:1468.00px;width:1.00px;height:32.00px;background:#707070;"></div>
<div style="left:1053.85px;top:1468.00px;width:1.50px;height:32.00px;background:#6a6a6a;"></div>
<div style="left:1079.50px;top:1468.00px;width:1.00px;height:32.00px;background:#707070;"></div>
<div style="left:1104.90px;top:1468.00px;width:1.00px;height:32.00px;background:#707070;"></div>
<div style="left:1130.05px;top:1468.00px;width:1.50px;height:32.00px;background:#6a6a6a;"></div>
<div style="left:1155.70px;top:1468.00px;width:1.00px;height:32.00px;background:#707070;"></div>
<div style="left:1181.10px;top:1468.00px;width:1.00px;height:32.00px;background:#707070;"></div>
<div style="left:1206.25px;top:1468.00px;width:1.50px;height:32.00px;background:#6a6a6a;"></div>
<div style="left:1231.90px;top:1468.00px;width:1.00px;height:32.00px;background:#707070;"></div>
<div style="left:1257.30px;top:1468.00px;width:1.00px;height:32.00px;background:#707070;"></div>
<div style="left:1282.45px;top:1468.00px;width:1.50px;height:32.00px;background:#6a6a6a;"></div>
<div style="left:1308.10px;top:1468.00px;width:1.00px;height:32.00px;background:#707070;"></div>
<div style="left:1333.50px;top:1468.00px;width:1.00px;height:32.00px;background:#707070;"></div>
<div style="left:1358.65px;top:1468.00px;width:1.50px;height:32.00px;background:#6a6a6a;"></div>
<div style="left:1384.30px;top:1468.00px;width:1.00px;height:32.00px;background:#707070;"></div>
<div style="left:1409.70px;top:1468.00px;width:1.00px;height:32.00px;background:#707070;"></div>
<div style="left:1434.85px;top:1468.00px;width:1.50px;height:32.00px;background:#6a6a6a;"></div>
<div style="left:1460.50px;top:1468.00px;width:1.00px;height:32.00px;background:#707070;"></div>
<div style="left:1485.90px;top:1468.00px;width:1.00px;height:32.00px;background:#707070;"></div>
<div style="left:1511.05px;top:1468.00px;width:1.50px;height:32.00px;background:#6a6a6a;"></div>
<div style="left:1536.70px;top:1468.00px;width:1.00px;height:32.00px;background:#707070;"></div>
<div style="left:1562.10px;top:1468.00px;width:1.00px;height:32.00px;background:#707070;"></div>
<div style="left:1587.25px;top:1468.00px;width:1.50px;height:32.00px;background:#6a6a6a;"></div>
<div style="left:1612.90px;top:1468.00px;width:1.00px;height:32.00px;background:#707070;"></div>
<div style="left:1638.30px;top:1468.00px;width:1.00px;height:32.00px;background:#707070;"></div>
<div style="left:1663.45px;top:1468.00px;width:1.50px;height:32.00px;background:#6a6a6a;"></div>
<div style="left:1689.10px;top:1468.00px;width:1.00px;height:32.00px;background:#707070;"></div>
<div style="left:1714.50px;top:1468.00px;width:1.00px;height:32.00px;background:#707070;"></div>
<div style="left:1739.65px;top:1468.00px;width:1.50px;height:32.00px;background:#6a6a6a;"></div>
<div style="left:1765.30px;top:1468.00px;width:1.00px;height:32.00px;background:#707070;"></div>
<div style="left:1790.70px;top:1468.00px;width:1.00px;height:32.00px;background:#707070;"></div>
<div style="left:1815.85px;top:1468.00px;width:1.50px;height:32.00px;background:#6a6a6a;"></div>
<div style="left:1841.50px;top:1468.00px;width:1.00px;height:32.00px;background:#707070;"></div>
<div style="left:1866.90px;top:1468.00px;width:1.00px;height:32.00px;background:#707070;"></div>
<div style="left:1892.05px;top:1468.00px;width:1.50px;height:32.00px;background:#6a6a6a;"></div>
<div style="left:1917.70px;top:1468.00px;width:1.00px;height:32.00px;background:#707070;"></div>
<div style="left:1943.10px;top:1468.00px;width:1.00px;height:32.00px;background:#707070;"></div>
<div style="left:1968.25px;top:1468.00px;width:1.50px;height:32.00px;background:#6a6a6a;"></div>
<div style="left:1969.00px;top:197.50px;width:3.00px;height:13.50px;background:#404040;"></div>
<div style="left:1969.00px;top:211.00px;width:3.00px;height:1289.00px;background:#414141;"></div>
<svg style="left:0;top:0;" width="0" height="0"><defs><path id="wkick0" d="M0.0,50.6 0.5,49.5 1.0,48.6 1.5,47.9 2.0,47.5 2.5,47.2 3.0,47.1 3.5,47.2 4.0,47.5 4.5,47.9 5.0,48.6 5.5,49.5 6.0,50.6 6.5,52.2 7.0,53.4 7.5,53.3 8.0,53.1 8.5,52.9 9.0,52.8 9.5,52.6 10.0,52.4 10.5,52.3 11.0,52.2 11.5,52.2 12.0,52.2 12.5,52.3 13.0,52.4 13.5,52.6 14.0,52.7 14.5,52.9 15.0,53.0 15.5,53.1 16.0,53.2 16.5,53.2 17.0,53.3 17.5,53.4 18.0,53.5 18.5,52.4 19.0,50.8 19.5,49.6 20.0,48.6 20.5,48.0 21.0,47.5 21.5,47.2 22.0,47.1 22.5,47.2 23.0,47.4 23.5,47.9 24.0,48.5 24.5,49.4 25.0,50.5 25.5,52.0 26.0,53.4 26.5,53.3 27.0,53.1 27.5,53.0 28.0,52.8 28.5,52.6 29.0,52.4 29.5,52.3 30.0,52.2 30.5,52.2 31.0,52.2 31.5,52.3 32.0,52.4 32.5,52.6 33.0,52.7 33.5,52.9 34.0,53.0 34.5,53.1 35.0,53.2 35.5,53.2 36.0,53.3 36.5,53.4 37.0,53.5 37.5,52.6 38.0,50.9 38.5,49.7 39.0,48.7 39.5,48.0 40.0,47.5 40.5,47.2 41.0,47.1 41.5,47.2 42.0,47.4 42.5,47.8 43.0,48.4 43.5,49.3 44.0,50.4 44.5,51.9 45.0,53.4 45.5,53.3 46.0,53.1 46.5,53.0 47.0,52.8 47.5,52.6 48.0,52.5 48.5,52.3 49.0,52.2 49.5,52.2 50.0,52.2 50.5,52.3 51.0,52.4 51.5,52.5 52.0,52.7 52.5,52.9 53.0,53.0 53.5,53.1 54.0,53.2 54.5,53.2 55.0,53.3 55.5,53.4 56.0,53.5 56.5,52.8 57.0,51.1 57.5,49.8 58.0,48.8 58.5,48.1 59.0,47.6 59.5,47.2 60.0,47.1 60.5,47.1 61.0,47.4 61.5,47.7 62.0,48.3 62.5,49.2 63.0,50.3 63.5,51.7 64.0,53.4 64.5,53.3 65.0,53.2 65.5,53.0 66.0,52.8 66.5,52.6 67.0,52.5 67.5,52.3 68.0,52.2 68.5,52.2 69.0,52.2 69.5,52.3 70.0,52.4 70.5,52.5 71.0,52.7 71.5,52.8 72.0,53.0 72.5,53.1 73.0,53.2 73.5,53.2 74.0,53.3 74.5,53.4 75.0,53.5 75.5,53.0 76.0,51.2 76.5,49.9 L76.5,75.1 76.0,73.8 75.5,72.0 75.0,71.5 74.5,71.6 74.0,71.7 73.5,71.8 73.0,71.8 72.5,71.9 72.0,72.0 71.5,72.2 71.0,72.3 70.5,72.5 70.0,72.6 69.5,72.7 69.0,72.8 68.5,72.8 68.0,72.8 67.5,72.7 67.0,72.5 66.5,72.4 66.0,72.2 65.5,72.0 65.0,71.8 64.5,71.7 64.0,71.6 63.5,73.3 63.0,74.7 62.5,75.8 62.0,76.7 61.5,77.3 61.0,77.6 60.5,77.9 60.0,77.9 59.5,77.8 59.0,77.4 58.5,76.9 58.0,76.2 57.5,75.2 57.0,73.9 56.5,72.2 56.0,71.5 55.5,71.6 55.0,71.7 54.5,71.8 54.0,71.8 53.5,71.9 53.0,72.0 52.5,72.1 52.0,72.3 51.5,72.5 51.0,72.6 50.5,72.7 50.0,72.8 49.5,72.8 49.0,72.8 48.5,72.7 48.0,72.5 47.5,72.4 47.0,72.2 46.5,72.0 46.0,71.9 45.5,71.7 45.0,71.6 44.5,73.1 44.0,74.6 43.5,75.7 43.0,76.6 42.5,77.2 42.0,77.6 41.5,77.8 41.0,77.9 40.5,77.8 40.0,77.5 39.5,77.0 39.0,76.3 38.5,75.3 38.0,74.1 37.5,72.4 37.0,71.5 36.5,71.6 36.0,71.7 35.5,71.8 35.0,71.8 34.5,71.9 34.0,72.0 33.5,72.1 33.0,72.3 32.5,72.4 32.0,72.6 31.5,72.7 31.0,72.8 30.5,72.8 30.0,72.8 29.5,72.7 29.0,72.6 28.5,72.4 28.0,72.2 27.5,72.0 27.0,71.9 26.5,71.7 26.0,71.6 25.5,73.0 25.0,74.5 24.5,75.6 24.0,76.5 23.5,77.1 23.0,77.6 22.5,77.8 22.0,77.9 21.5,77.8 21.0,77.5 20.5,77.0 20.0,76.4 19.5,75.4 19.0,74.2 18.5,72.6 18.0,71.5 17.5,71.6 17.0,71.7 16.5,71.8 16.0,71.8 15.5,71.9 15.0,72.0 14.5,72.1 14.0,72.3 13.5,72.4 13.0,72.6 12.5,72.7 12.0,72.8 11.5,72.8 11.0,72.8 10.5,72.7 10.0,72.6 9.5,72.4 9.0,72.2 8.5,72.1 8.0,71.9 7.5,71.7 7.0,71.6 6.5,72.8 6.0,74.4 5.5,75.5 5.0,76.4 4.5,77.1 4.0,77.5 3.5,77.8 3.0,77.9 2.5,77.8 2.0,77.5 1.5,77.1 1.0,76.4 0.5,75.5 0.0,74.4Z M0.0,113.1 0.5,112.0 1.0,111.1 1.5,110.4 2.0,110.0 2.5,109.7 3.0,109.6 3.5,109.7 4.0,110.0 4.5,110.4 5.0,111.1 5.5,112.0 6.0,113.1 6.5,114.7 7.0,115.9 7.5,115.8 8.0,115.6 8.5,115.4 9.0,115.3 9.5,115.1 10.0,114.9 10.5,114.8 11.0,114.7 11.5,114.7 12.0,114.7 12.5,114.8 13.0,114.9 13.5,115.1 14.0,115.2 14.5,115.4 15.0,115.5 15.5,115.6 16.0,115.7 16.5,115.7 17.0,115.8 17.5,115.9 18.0,116.0 18.5,114.9 19.0,113.3 19.5,112.1 20.0,111.1 20.5,110.5 21.0,110.0 21.5,109.7 22.0,109.6 22.5,109.7 23.0,109.9 23.5,110.4 24.0,111.0 24.5,111.9 25.0,113.0 25.5,114.5 26.0,115.9 26.5,115.8 27.0,115.6 27.5,115.5 28.0,115.3 28.5,115.1 29.0,114.9 29.5,114.8 30.0,114.7 30.5,114.7 31.0,114.7 31.5,114.8 32.0,114.9 32.5,115.1 33.0,115.2 33.5,115.4 34.0,115.5 34.5,115.6 35.0,115.7 35.5,115.7 36.0,115.8 36.5,115.9 37.0,116.0 37.5,115.1 38.0,113.4 38.5,112.2 39.0,111.2 39.5,110.5 40.0,110.0 40.5,109.7 41.0,109.6 41.5,109.7 42.0,109.9 42.5,110.3 43.0,110.9 43.5,111.8 44.0,112.9 44.5,114.4 45.0,115.9 45.5,115.8 46.0,115.6 46.5,115.5 47.0,115.3 47.5,115.1 48.0,115.0 48.5,114.8 49.0,114.7 49.5,114.7 50.0,114.7 50.5,114.8 51.0,114.9 51.5,115.0 52.0,115.2 52.5,115.4 53.0,115.5 53.5,115.6 54.0,115.7 54.5,115.7 55.0,115.8 55.5,115.9 56.0,116.0 56.5,115.3 57.0,113.6 57.5,112.3 58.0,111.3 58.5,110.6 59.0,110.1 59.5,109.7 60.0,109.6 60.5,109.6 61.0,109.9 61.5,110.2 62.0,110.8 62.5,111.7 63.0,112.8 63.5,114.2 64.0,115.9 64.5,115.8 65.0,115.7 65.5,115.5 66.0,115.3 66.5,115.1 67.0,115.0 67.5,114.8 68.0,114.7 68.5,114.7 69.0,114.7 69.5,114.8 70.0,114.9 70.5,115.0 71.0,115.2 71.5,115.3 72.0,115.5 72.5,115.6 73.0,115.7 73.5,115.7 74.0,115.8 74.5,115.9 75.0,116.0 75.5,115.5 76.0,113.7 76.5,112.4 L76.5,137.6 76.0,136.3 75.5,134.5 75.0,134.0 74.5,134.1 74.0,134.2 73.5,134.3 73.0,134.3 72.5,134.4 72.0,134.5 71.5,134.7 71.0,134.8 70.5,135.0 70.0,135.1 69.5,135.2 69.0,135.3 68.5,135.3 68.0,135.3 67.5,135.2 67.0,135.0 66.5,134.9 66.0,134.7 65.5,134.5 65.0,134.3 64.5,134.2 64.0,134.1 63.5,135.8 63.0,137.2 62.5,138.3 62.0,139.2 61.5,139.8 61.0,140.1 60.5,140.4 60.0,140.4 59.5,140.3 59.0,139.9 58.5,139.4 58.0,138.7 57.5,137.7 57.0,136.4 56.5,134.7 56.0,134.0 55.5,134.1 55.0,134.2 54.5,134.3 54.0,134.3 53.5,134.4 53.0,134.5 52.5,134.6 52.0,134.8 51.5,135.0 51.0,135.1 50.5,135.2 50.0,135.3 49.5,135.3 49.0,135.3 48.5,135.2 48.0,135.0 47.5,134.9 47.0,134.7 46.5,134.5 46.0,134.4 45.5,134.2 45.0,134.1 44.5,135.6 44.0,137.1 43.5,138.2 43.0,139.1 42.5,139.7 42.0,140.1 41.5,140.3 41.0,140.4 40.5,140.3 40.0,140.0 39.5,139.5 39.0,138.8 38.5,137.8 38.0,136.6 37.5,134.9 37.0,134.0 36.5,134.1 36.0,134.2 35.5,134.3 35.0,134.3 34.5,134.4 34.0,134.5 33.5,134.6 33.0,134.8 32.5,134.9 32.0,135.1 31.5,135.2 31.0,135.3 30.5,135.3 30.0,135.3 29.5,135.2 29.0,135.1 28.5,134.9 28.0,134.7 27.5,134.5 27.0,134.4 26.5,134.2 26.0,134.1 25.5,135.5 25.0,137.0 24.5,138.1 24.0,139.0 23.5,139.6 23.0,140.1 22.5,140.3 22.0,140.4 21.5,140.3 21.0,140.0 20.5,139.5 20.0,138.9 19.5,137.9 19.0,136.7 18.5,135.1 18.0,134.0 17.5,134.1 17.0,134.2 16.5,134.3 16.0,134.3 15.5,134.4 15.0,134.5 14.5,134.6 14.0,134.8 13.5,134.9 13.0,135.1 12.5,135.2 12.0,135.3 11.5,135.3 11.0,135.3 10.5,135.2 10.0,135.1 9.5,134.9 9.0,134.7 8.5,134.6 8.0,134.4 7.5,134.2 7.0,134.1 6.5,135.3 6.0,136.9 5.5,138.0 5.0,138.9 4.5,139.6 4.0,140.0 3.5,140.3 3.0,140.4 2.5,140.3 2.0,140.0 1.5,139.6 1.0,138.9 0.5,138.0 0.0,136.9Z"/><path id="wshaker0" d="M0.0,61.4 0.5,61.4 1.0,61.4 1.5,61.4 2.0,61.4 2.5,61.4 3.0,61.4 3.5,61.4 4.0,61.4 4.5,61.4 5.0,61.4 5.5,61.4 6.0,61.4 6.5,61.4 7.0,61.4 7.5,61.0 8.0,60.3 8.5,59.5 9.0,58.5 9.5,57.3 10.0,56.1 10.5,54.9 11.0,53.9 11.5,53.3 12.0,53.6 12.5,54.5 13.0,55.6 13.5,56.8 14.0,58.0 14.5,59.1 15.0,60.0 15.5,60.7 16.0,61.3 16.5,61.4 17.0,61.4 17.5,61.4 18.0,61.4 18.5,61.4 19.0,61.4 19.5,61.4 20.0,61.4 20.5,61.4 21.0,61.4 21.5,61.4 22.0,61.4 22.5,61.4 23.0,61.4 23.5,61.4 24.0,61.4 24.5,61.4 25.0,61.4 25.5,61.4 26.0,61.4 26.5,61.0 27.0,60.4 27.5,59.6 28.0,58.6 28.5,57.5 29.0,56.2 29.5,55.0 30.0,54.0 30.5,53.4 31.0,53.5 31.5,54.4 32.0,55.5 32.5,56.7 33.0,57.9 33.5,59.0 34.0,59.9 34.5,60.7 35.0,61.2 35.5,61.4 36.0,61.4 36.5,61.4 37.0,61.4 37.5,61.4 38.0,61.4 38.5,61.4 39.0,61.4 39.5,61.4 40.0,61.4 40.5,61.4 41.0,61.4 41.5,61.4 42.0,61.4 42.5,61.4 43.0,61.4 43.5,61.4 44.0,61.4 44.5,61.4 45.0,61.4 45.5,61.1 46.0,60.5 46.5,59.7 47.0,58.7 47.5,57.6 48.0,56.4 48.5,55.1 49.0,54.1 49.5,53.4 50.0,53.5 50.5,54.3 51.0,55.4 51.5,56.6 52.0,57.8 52.5,58.9 53.0,59.9 53.5,60.6 54.0,61.2 54.5,61.4 55.0,61.4 55.5,61.4 56.0,61.4 56.5,61.4 57.0,61.4 57.5,61.4 58.0,61.4 58.5,61.4 59.0,61.4 59.5,61.4 60.0,61.4 60.5,61.4 61.0,61.4 61.5,61.4 62.0,61.4 62.5,61.4 63.0,61.4 63.5,61.4 64.0,61.4 64.5,61.1 65.0,60.5 65.5,59.8 66.0,58.8 66.5,57.7 67.0,56.5 67.5,55.3 68.0,54.2 68.5,53.4 69.0,53.4 69.5,54.2 70.0,55.3 70.5,56.5 71.0,57.7 71.5,58.8 72.0,59.8 72.5,60.5 73.0,61.1 73.5,61.4 74.0,61.4 74.5,61.4 75.0,61.4 75.5,61.4 76.0,61.4 76.5,61.4 L76.5,63.6 76.0,63.6 75.5,63.6 75.0,63.6 74.5,63.6 74.0,63.6 73.5,63.6 73.0,63.9 72.5,64.5 72.0,65.2 71.5,66.2 71.0,67.3 70.5,68.5 70.0,69.7 69.5,70.8 69.0,71.6 68.5,71.6 68.0,70.8 67.5,69.7 67.0,68.5 66.5,67.3 66.0,66.2 65.5,65.2 65.0,64.5 64.5,63.9 64.0,63.6 63.5,63.6 63.0,63.6 62.5,63.6 62.0,63.6 61.5,63.6 61.0,63.6 60.5,63.6 60.0,63.6 59.5,63.6 59.0,63.6 58.5,63.6 58.0,63.6 57.5,63.6 57.0,63.6 56.5,63.6 56.0,63.6 55.5,63.6 55.0,63.6 54.5,63.6 54.0,63.8 53.5,64.4 53.0,65.1 52.5,66.1 52.0,67.2 51.5,68.4 51.0,69.6 50.5,70.7 50.0,71.5 49.5,71.6 49.0,70.9 48.5,69.9 48.0,68.6 47.5,67.4 47.0,66.3 46.5,65.3 46.0,64.5 45.5,63.9 45.0,63.6 44.5,63.6 44.0,63.6 43.5,63.6 43.0,63.6 42.5,63.6 42.0,63.6 41.5,63.6 41.0,63.6 40.5,63.6 40.0,63.6 39.5,63.6 39.0,63.6 38.5,63.6 38.0,63.6 37.5,63.6 37.0,63.6 36.5,63.6 36.0,63.6 35.5,63.6 35.0,63.8 34.5,64.3 34.0,65.1 33.5,66.0 33.0,67.1 32.5,68.3 32.0,69.5 31.5,70.6 31.0,71.5 30.5,71.6 30.0,71.0 29.5,70.0 29.0,68.8 28.5,67.5 28.0,66.4 27.5,65.4 27.0,64.6 26.5,64.0 26.0,63.6 25.5,63.6 25.0,63.6 24.5,63.6 24.0,63.6 23.5,63.6 23.0,63.6 22.5,63.6 22.0,63.6 21.5,63.6 21.0,63.6 20.5,63.6 20.0,63.6 19.5,63.6 19.0,63.6 18.5,63.6 18.0,63.6 17.5,63.6 17.0,63.6 16.5,63.6 16.0,63.7 15.5,64.3 15.0,65.0 14.5,65.9 14.0,67.0 13.5,68.2 13.0,69.4 12.5,70.5 12.0,71.4 11.5,71.7 11.0,71.1 10.5,70.1 10.0,68.9 9.5,67.7 9.0,66.5 8.5,65.5 8.0,64.7 7.5,64.0 7.0,63.6 6.5,63.6 6.0,63.6 5.5,63.6 5.0,63.6 4.5,63.6 4.0,63.6 3.5,63.6 3.0,63.6 2.5,63.6 2.0,63.6 1.5,63.6 1.0,63.6 0.5,63.6 0.0,63.6Z M0.0,123.9 0.5,123.9 1.0,123.9 1.5,123.9 2.0,123.9 2.5,123.9 3.0,123.9 3.5,123.9 4.0,123.9 4.5,123.9 5.0,123.9 5.5,123.9 6.0,123.9 6.5,123.9 7.0,123.9 7.5,123.5 8.0,122.8 8.5,122.0 9.0,121.0 9.5,119.8 10.0,118.6 10.5,117.4 11.0,116.4 11.5,115.8 12.0,116.1 12.5,117.0 13.0,118.1 13.5,119.3 14.0,120.5 14.5,121.6 15.0,122.5 15.5,123.2 16.0,123.8 16.5,123.9 17.0,123.9 17.5,123.9 18.0,123.9 18.5,123.9 19.0,123.9 19.5,123.9 20.0,123.9 20.5,123.9 21.0,123.9 21.5,123.9 22.0,123.9 22.5,123.9 23.0,123.9 23.5,123.9 24.0,123.9 24.5,123.9 25.0,123.9 25.5,123.9 26.0,123.9 26.5,123.5 27.0,122.9 27.5,122.1 28.0,121.1 28.5,120.0 29.0,118.7 29.5,117.5 30.0,116.5 30.5,115.9 31.0,116.0 31.5,116.9 32.0,118.0 32.5,119.2 33.0,120.4 33.5,121.5 34.0,122.4 34.5,123.2 35.0,123.7 35.5,123.9 36.0,123.9 36.5,123.9 37.0,123.9 37.5,123.9 38.0,123.9 38.5,123.9 39.0,123.9 39.5,123.9 40.0,123.9 40.5,123.9 41.0,123.9 41.5,123.9 42.0,123.9 42.5,123.9 43.0,123.9 43.5,123.9 44.0,123.9 44.5,123.9 45.0,123.9 45.5,123.6 46.0,123.0 46.5,122.2 47.0,121.2 47.5,120.1 48.0,118.9 48.5,117.6 49.0,116.6 49.5,115.9 50.0,116.0 50.5,116.8 51.0,117.9 51.5,119.1 52.0,120.3 52.5,121.4 53.0,122.4 53.5,123.1 54.0,123.7 54.5,123.9 55.0,123.9 55.5,123.9 56.0,123.9 56.5,123.9 57.0,123.9 57.5,123.9 58.0,123.9 58.5,123.9 59.0,123.9 59.5,123.9 60.0,123.9 60.5,123.9 61.0,123.9 61.5,123.9 62.0,123.9 62.5,123.9 63.0,123.9 63.5,123.9 64.0,123.9 64.5,123.6 65.0,123.0 65.5,122.3 66.0,121.3 66.5,120.2 67.0,119.0 67.5,117.8 68.0,116.7 68.5,115.9 69.0,115.9 69.5,116.7 70.0,117.8 70.5,119.0 71.0,120.2 71.5,121.3 72.0,122.3 72.5,123.0 73.0,123.6 73.5,123.9 74.0,123.9 74.5,123.9 75.0,123.9 75.5,123.9 76.0,123.9 76.5,123.9 L76.5,126.1 76.0,126.1 75.5,126.1 75.0,126.1 74.5,126.1 74.0,126.1 73.5,126.1 73.0,126.4 72.5,127.0 72.0,127.7 71.5,128.7 71.0,129.8 70.5,131.0 70.0,132.2 69.5,133.3 69.0,134.1 68.5,134.1 68.0,133.3 67.5,132.2 67.0,131.0 66.5,129.8 66.0,128.7 65.5,127.7 65.0,127.0 64.5,126.4 64.0,126.1 63.5,126.1 63.0,126.1 62.5,126.1 62.0,126.1 61.5,126.1 61.0,126.1 60.5,126.1 60.0,126.1 59.5,126.1 59.0,126.1 58.5,126.1 58.0,126.1 57.5,126.1 57.0,126.1 56.5,126.1 56.0,126.1 55.5,126.1 55.0,126.1 54.5,126.1 54.0,126.3 53.5,126.9 53.0,127.6 52.5,128.6 52.0,129.7 51.5,130.9 51.0,132.1 50.5,133.2 50.0,134.0 49.5,134.1 49.0,133.4 48.5,132.4 48.0,131.1 47.5,129.9 47.0,128.8 46.5,127.8 46.0,127.0 45.5,126.4 45.0,126.1 44.5,126.1 44.0,126.1 43.5,126.1 43.0,126.1 42.5,126.1 42.0,126.1 41.5,126.1 41.0,126.1 40.5,126.1 40.0,126.1 39.5,126.1 39.0,126.1 38.5,126.1 38.0,126.1 37.5,126.1 37.0,126.1 36.5,126.1 36.0,126.1 35.5,126.1 35.0,126.3 34.5,126.8 34.0,127.6 33.5,128.5 33.0,129.6 32.5,130.8 32.0,132.0 31.5,133.1 31.0,134.0 30.5,134.1 30.0,133.5 29.5,132.5 29.0,131.3 28.5,130.0 28.0,128.9 27.5,127.9 27.0,127.1 26.5,126.5 26.0,126.1 25.5,126.1 25.0,126.1 24.5,126.1 24.0,126.1 23.5,126.1 23.0,126.1 22.5,126.1 22.0,126.1 21.5,126.1 21.0,126.1 20.5,126.1 20.0,126.1 19.5,126.1 19.0,126.1 18.5,126.1 18.0,126.1 17.5,126.1 17.0,126.1 16.5,126.1 16.0,126.2 15.5,126.8 15.0,127.5 14.5,128.4 14.0,129.5 13.5,130.7 13.0,131.9 12.5,133.0 12.0,133.9 11.5,134.2 11.0,133.6 10.5,132.6 10.0,131.4 9.5,130.2 9.0,129.0 8.5,128.0 8.0,127.2 7.5,126.5 7.0,126.1 6.5,126.1 6.0,126.1 5.5,126.1 5.0,126.1 4.5,126.1 4.0,126.1 3.5,126.1 3.0,126.1 2.5,126.1 2.0,126.1 1.5,126.1 1.0,126.1 0.5,126.1 0.0,126.1Z"/><path id="wperc10" d="M0.0,61.6 0.5,61.6 1.0,61.6 1.5,61.6 2.0,61.6 2.5,61.6 3.0,61.6 3.5,61.6 4.0,61.6 4.5,61.6 5.0,61.6 5.5,61.6 6.0,61.6 6.5,61.6 7.0,61.6 7.5,61.6 8.0,61.6 8.5,61.6 9.0,60.4 9.5,58.4 10.0,57.1 10.5,56.6 11.0,56.9 11.5,57.4 12.0,58.0 12.5,58.5 13.0,59.0 13.5,59.5 14.0,59.9 14.5,60.3 15.0,60.6 15.5,60.9 16.0,61.1 16.5,61.3 17.0,61.5 17.5,61.6 18.0,61.6 18.5,61.6 19.0,61.6 19.5,61.6 20.0,61.6 20.5,61.6 21.0,61.6 21.5,61.6 22.0,61.6 22.5,61.6 23.0,61.6 23.5,61.6 24.0,61.6 24.5,61.6 25.0,61.6 25.5,61.6 26.0,61.6 26.5,61.6 27.0,61.1 27.5,58.3 28.0,56.4 28.5,55.4 29.0,55.4 29.5,56.0 30.0,56.7 30.5,57.3 31.0,58.0 31.5,58.5 32.0,59.1 32.5,59.6 33.0,60.0 33.5,60.4 34.0,60.7 34.5,61.0 35.0,61.2 35.5,61.4 36.0,61.6 36.5,61.6 37.0,61.6 37.5,61.6 38.0,61.6 38.5,61.6 39.0,61.6 39.5,61.6 40.0,61.6 40.5,61.6 41.0,61.6 41.5,61.6 42.0,61.6 42.5,61.6 43.0,61.6 43.5,61.6 44.0,61.6 44.5,61.6 45.0,61.6 45.5,61.6 46.0,61.6 46.5,60.6 47.0,58.1 47.5,56.5 48.0,55.8 48.5,56.0 49.0,56.6 49.5,57.2 50.0,57.8 50.5,58.4 51.0,58.9 51.5,59.4 52.0,59.8 52.5,60.2 53.0,60.6 53.5,60.9 54.0,61.1 54.5,61.3 55.0,61.5 55.5,61.6 56.0,61.6 56.5,61.3 57.0,60.9 57.5,60.6 58.0,60.3 58.5,60.2 59.0,60.2 59.5,60.4 60.0,60.6 60.5,61.0 61.0,61.3 61.5,61.6 62.0,61.6 62.5,61.6 63.0,61.6 63.5,61.6 64.0,61.6 64.5,61.6 65.0,61.6 65.5,61.6 66.0,60.8 66.5,58.5 67.0,57.1 67.5,56.4 68.0,56.5 68.5,57.1 69.0,57.6 69.5,58.2 70.0,58.7 70.5,59.2 71.0,59.7 71.5,60.1 72.0,60.4 72.5,60.7 73.0,61.0 73.5,61.2 74.0,61.4 74.5,61.6 75.0,61.6 75.5,61.6 76.0,61.6 76.5,61.6 L76.5,63.4 76.0,63.4 75.5,63.4 75.0,63.4 74.5,63.4 74.0,63.6 73.5,63.8 73.0,64.0 72.5,64.3 72.0,64.6 71.5,64.9 71.0,65.3 70.5,65.8 70.0,66.3 69.5,66.8 69.0,67.4 68.5,67.9 68.0,68.5 67.5,68.6 67.0,67.9 66.5,66.5 66.0,64.2 65.5,63.4 65.0,63.4 64.5,63.4 64.0,63.4 63.5,63.4 63.0,63.4 62.5,63.4 62.0,63.4 61.5,63.4 61.0,63.7 60.5,64.0 60.0,64.4 59.5,64.6 59.0,64.8 58.5,64.8 58.0,64.7 57.5,64.4 57.0,64.1 56.5,63.7 56.0,63.4 55.5,63.4 55.0,63.5 54.5,63.7 54.0,63.9 53.5,64.1 53.0,64.4 52.5,64.8 52.0,65.2 51.5,65.6 51.0,66.1 50.5,66.6 50.0,67.2 49.5,67.8 49.0,68.4 48.5,69.0 48.0,69.2 47.5,68.5 47.0,66.9 46.5,64.4 46.0,63.4 45.5,63.4 45.0,63.4 44.5,63.4 44.0,63.4 43.5,63.4 43.0,63.4 42.5,63.4 42.0,63.4 41.5,63.4 41.0,63.4 40.5,63.4 40.0,63.4 39.5,63.4 39.0,63.4 38.5,63.4 38.0,63.4 37.5,63.4 37.0,63.4 36.5,63.4 36.0,63.4 35.5,63.6 35.0,63.8 34.5,64.0 34.0,64.3 33.5,64.6 33.0,65.0 32.5,65.4 32.0,65.9 31.5,66.5 31.0,67.0 30.5,67.7 30.0,68.3 29.5,69.0 29.0,69.6 28.5,69.6 28.0,68.6 27.5,66.7 27.0,63.9 26.5,63.4 26.0,63.4 25.5,63.4 25.0,63.4 24.5,63.4 24.0,63.4 23.5,63.4 23.0,63.4 22.5,63.4 22.0,63.4 21.5,63.4 21.0,63.4 20.5,63.4 20.0,63.4 19.5,63.4 19.0,63.4 18.5,63.4 18.0,63.4 17.5,63.4 17.0,63.5 16.5,63.7 16.0,63.9 15.5,64.1 15.0,64.4 14.5,64.7 14.0,65.1 13.5,65.5 13.0,66.0 12.5,66.5 12.0,67.0 11.5,67.6 11.0,68.1 10.5,68.4 10.0,67.9 9.5,66.6 9.0,64.6 8.5,63.4 8.0,63.4 7.5,63.4 7.0,63.4 6.5,63.4 6.0,63.4 5.5,63.4 5.0,63.4 4.5,63.4 4.0,63.4 3.5,63.4 3.0,63.4 2.5,63.4 2.0,63.4 1.5,63.4 1.0,63.4 0.5,63.4 0.0,63.4Z M0.0,124.1 0.5,124.1 1.0,124.1 1.5,124.1 2.0,124.1 2.5,124.1 3.0,124.1 3.5,124.1 4.0,124.1 4.5,124.1 5.0,124.1 5.5,124.1 6.0,124.1 6.5,124.1 7.0,124.1 7.5,124.1 8.0,124.1 8.5,124.1 9.0,122.9 9.5,120.9 10.0,119.6 10.5,119.1 11.0,119.4 11.5,119.9 12.0,120.5 12.5,121.0 13.0,121.5 13.5,122.0 14.0,122.4 14.5,122.8 15.0,123.1 15.5,123.4 16.0,123.6 16.5,123.8 17.0,124.0 17.5,124.1 18.0,124.1 18.5,124.1 19.0,124.1 19.5,124.1 20.0,124.1 20.5,124.1 21.0,124.1 21.5,124.1 22.0,124.1 22.5,124.1 23.0,124.1 23.5,124.1 24.0,124.1 24.5,124.1 25.0,124.1 25.5,124.1 26.0,124.1 26.5,124.1 27.0,123.6 27.5,120.8 28.0,118.9 28.5,117.9 29.0,117.9 29.5,118.5 30.0,119.2 30.5,119.8 31.0,120.5 31.5,121.0 32.0,121.6 32.5,122.1 33.0,122.5 33.5,122.9 34.0,123.2 34.5,123.5 35.0,123.7 35.5,123.9 36.0,124.1 36.5,124.1 37.0,124.1 37.5,124.1 38.0,124.1 38.5,124.1 39.0,124.1 39.5,124.1 40.0,124.1 40.5,124.1 41.0,124.1 41.5,124.1 42.0,124.1 42.5,124.1 43.0,124.1 43.5,124.1 44.0,124.1 44.5,124.1 45.0,124.1 45.5,124.1 46.0,124.1 46.5,123.1 47.0,120.6 47.5,119.0 48.0,118.3 48.5,118.5 49.0,119.1 49.5,119.7 50.0,120.3 50.5,120.9 51.0,121.4 51.5,121.9 52.0,122.3 52.5,122.7 53.0,123.1 53.5,123.4 54.0,123.6 54.5,123.8 55.0,124.0 55.5,124.1 56.0,124.1 56.5,123.8 57.0,123.4 57.5,123.1 58.0,122.8 58.5,122.7 59.0,122.7 59.5,122.9 60.0,123.1 60.5,123.5 61.0,123.8 61.5,124.1 62.0,124.1 62.5,124.1 63.0,124.1 63.5,124.1 64.0,124.1 64.5,124.1 65.0,124.1 65.5,124.1 66.0,123.3 66.5,121.0 67.0,119.6 67.5,118.9 68.0,119.0 68.5,119.6 69.0,120.1 69.5,120.7 70.0,121.2 70.5,121.7 71.0,122.2 71.5,122.6 72.0,122.9 72.5,123.2 73.0,123.5 73.5,123.7 74.0,123.9 74.5,124.1 75.0,124.1 75.5,124.1 76.0,124.1 76.5,124.1 L76.5,125.9 76.0,125.9 75.5,125.9 75.0,125.9 74.5,125.9 74.0,126.1 73.5,126.3 73.0,126.5 72.5,126.8 72.0,127.1 71.5,127.4 71.0,127.8 70.5,128.3 70.0,128.8 69.5,129.3 69.0,129.9 68.5,130.4 68.0,131.0 67.5,131.1 67.0,130.4 66.5,129.0 66.0,126.7 65.5,125.9 65.0,125.9 64.5,125.9 64.0,125.9 63.5,125.9 63.0,125.9 62.5,125.9 62.0,125.9 61.5,125.9 61.0,126.2 60.5,126.5 60.0,126.9 59.5,127.1 59.0,127.3 58.5,127.3 58.0,127.2 57.5,126.9 57.0,126.6 56.5,126.2 56.0,125.9 55.5,125.9 55.0,126.0 54.5,126.2 54.0,126.4 53.5,126.6 53.0,126.9 52.5,127.3 52.0,127.7 51.5,128.1 51.0,128.6 50.5,129.1 50.0,129.7 49.5,130.3 49.0,130.9 48.5,131.5 48.0,131.7 47.5,131.0 47.0,129.4 46.5,126.9 46.0,125.9 45.5,125.9 45.0,125.9 44.5,125.9 44.0,125.9 43.5,125.9 43.0,125.9 42.5,125.9 42.0,125.9 41.5,125.9 41.0,125.9 40.5,125.9 40.0,125.9 39.5,125.9 39.0,125.9 38.5,125.9 38.0,125.9 37.5,125.9 37.0,125.9 36.5,125.9 36.0,125.9 35.5,126.1 35.0,126.3 34.5,126.5 34.0,126.8 33.5,127.1 33.0,127.5 32.5,127.9 32.0,128.4 31.5,129.0 31.0,129.5 30.5,130.2 30.0,130.8 29.5,131.5 29.0,132.1 28.5,132.1 28.0,131.1 27.5,129.2 27.0,126.4 26.5,125.9 26.0,125.9 25.5,125.9 25.0,125.9 24.5,125.9 24.0,125.9 23.5,125.9 23.0,125.9 22.5,125.9 22.0,125.9 21.5,125.9 21.0,125.9 20.5,125.9 20.0,125.9 19.5,125.9 19.0,125.9 18.5,125.9 18.0,125.9 17.5,125.9 17.0,126.0 16.5,126.2 16.0,126.4 15.5,126.6 15.0,126.9 14.5,127.2 14.0,127.6 13.5,128.0 13.0,128.5 12.5,129.0 12.0,129.5 11.5,130.1 11.0,130.6 10.5,130.9 10.0,130.4 9.5,129.1 9.0,127.1 8.5,125.9 8.0,125.9 7.5,125.9 7.0,125.9 6.5,125.9 6.0,125.9 5.5,125.9 5.0,125.9 4.5,125.9 4.0,125.9 3.5,125.9 3.0,125.9 2.5,125.9 2.0,125.9 1.5,125.9 1.0,125.9 0.5,125.9 0.0,125.9Z"/><path id="wride0" d="M0.0,60.0 0.5,60.5 1.0,60.9 1.5,61.0 2.0,61.0 2.5,61.0 3.0,61.0 3.5,61.0 4.0,61.0 4.5,61.0 5.0,61.0 5.5,61.0 6.0,61.0 6.5,61.0 7.0,60.7 7.5,60.2 8.0,59.6 8.5,59.0 9.0,58.5 9.5,58.1 10.0,57.7 10.5,57.5 11.0,57.3 11.5,57.2 12.0,57.1 12.5,57.1 13.0,57.1 13.5,57.1 14.0,57.1 14.5,57.1 15.0,57.2 15.5,57.3 16.0,57.5 16.5,57.8 17.0,58.1 17.5,58.5 18.0,58.9 18.5,59.4 19.0,59.9 19.5,60.4 20.0,60.9 20.5,61.0 21.0,61.0 21.5,61.0 22.0,61.0 22.5,61.0 23.0,61.0 23.5,61.0 24.0,61.0 24.5,61.0 25.0,61.0 25.5,61.0 26.0,60.8 26.5,60.2 27.0,59.7 27.5,59.1 28.0,58.6 28.5,58.1 29.0,57.7 29.5,57.5 30.0,57.3 30.5,57.2 31.0,57.1 31.5,57.1 32.0,57.1 32.5,57.1 33.0,57.1 33.5,57.1 34.0,57.2 34.5,57.3 35.0,57.5 35.5,57.7 36.0,58.0 36.5,58.4 37.0,58.9 37.5,59.4 38.0,59.9 38.5,60.4 39.0,60.8 39.5,61.0 40.0,61.0 40.5,61.0 41.0,61.0 41.5,61.0 42.0,61.0 42.5,61.0 43.0,61.0 43.5,61.0 44.0,61.0 44.5,61.0 45.0,60.8 45.5,60.3 46.0,59.7 46.5,59.1 47.0,58.6 47.5,58.2 48.0,57.8 48.5,57.5 49.0,57.3 49.5,57.2 50.0,57.1 50.5,57.1 51.0,57.1 51.5,57.1 52.0,57.1 52.5,57.1 53.0,57.2 53.5,57.3 54.0,57.5 54.5,57.7 55.0,58.0 55.5,58.4 56.0,58.8 56.5,59.3 57.0,59.8 57.5,60.3 58.0,60.8 58.5,61.0 59.0,61.0 59.5,61.0 60.0,61.0 60.5,61.0 61.0,61.0 61.5,61.0 62.0,61.0 62.5,61.0 63.0,61.0 63.5,61.0 64.0,60.9 64.5,60.3 65.0,59.8 65.5,59.2 66.0,58.7 66.5,58.2 67.0,57.8 67.5,57.5 68.0,57.3 68.5,57.2 69.0,57.1 69.5,57.1 70.0,57.1 70.5,57.1 71.0,57.1 71.5,57.1 72.0,57.2 72.5,57.3 73.0,57.5 73.5,57.7 74.0,58.0 74.5,58.4 75.0,58.8 75.5,59.3 76.0,59.8 76.5,60.3 L76.5,64.7 76.0,65.2 75.5,65.7 75.0,66.2 74.5,66.6 74.0,67.0 73.5,67.3 73.0,67.5 72.5,67.7 72.0,67.8 71.5,67.9 71.0,67.9 70.5,67.9 70.0,67.9 69.5,67.9 69.0,67.9 68.5,67.8 68.0,67.7 67.5,67.5 67.0,67.2 66.5,66.8 66.0,66.3 65.5,65.8 65.0,65.2 64.5,64.7 64.0,64.1 63.5,64.0 63.0,64.0 62.5,64.0 62.0,64.0 61.5,64.0 61.0,64.0 60.5,64.0 60.0,64.0 59.5,64.0 59.0,64.0 58.5,64.0 58.0,64.2 57.5,64.7 57.0,65.2 56.5,65.7 56.0,66.2 55.5,66.6 55.0,67.0 54.5,67.3 54.0,67.5 53.5,67.7 53.0,67.8 52.5,67.9 52.0,67.9 51.5,67.9 51.0,67.9 50.5,67.9 50.0,67.9 49.5,67.8 49.0,67.7 48.5,67.5 48.0,67.2 47.5,66.8 47.0,66.4 46.5,65.9 46.0,65.3 45.5,64.7 45.0,64.2 44.5,64.0 44.0,64.0 43.5,64.0 43.0,64.0 42.5,64.0 42.0,64.0 41.5,64.0 41.0,64.0 40.5,64.0 40.0,64.0 39.5,64.0 39.0,64.2 38.5,64.6 38.0,65.1 37.5,65.6 37.0,66.1 36.5,66.6 36.0,67.0 35.5,67.3 35.0,67.5 34.5,67.7 34.0,67.8 33.5,67.9 33.0,67.9 32.5,67.9 32.0,67.9 31.5,67.9 31.0,67.9 30.5,67.8 30.0,67.7 29.5,67.5 29.0,67.3 28.5,66.9 28.0,66.4 27.5,65.9 27.0,65.3 26.5,64.8 26.0,64.2 25.5,64.0 25.0,64.0 24.5,64.0 24.0,64.0 23.5,64.0 23.0,64.0 22.5,64.0 22.0,64.0 21.5,64.0 21.0,64.0 20.5,64.0 20.0,64.1 19.5,64.6 19.0,65.1 18.5,65.6 18.0,66.1 17.5,66.5 17.0,66.9 16.5,67.2 16.0,67.5 15.5,67.7 15.0,67.8 14.5,67.9 14.0,67.9 13.5,67.9 13.0,67.9 12.5,67.9 12.0,67.9 11.5,67.8 11.0,67.7 10.5,67.5 10.0,67.3 9.5,66.9 9.0,66.5 8.5,66.0 8.0,65.4 7.5,64.8 7.0,64.3 6.5,64.0 6.0,64.0 5.5,64.0 5.0,64.0 4.5,64.0 4.0,64.0 3.5,64.0 3.0,64.0 2.5,64.0 2.0,64.0 1.5,64.0 1.0,64.1 0.5,64.5 0.0,65.0Z M0.0,121.5 0.5,122.2 1.0,122.8 1.5,123.4 2.0,123.5 2.5,123.5 3.0,123.5 3.5,123.5 4.0,123.5 4.5,123.5 5.0,123.5 5.5,123.5 6.0,123.5 6.5,123.2 7.0,122.6 7.5,121.8 8.0,121.0 8.5,120.3 9.0,119.5 9.5,118.9 10.0,118.4 10.5,118.1 11.0,117.8 11.5,117.7 12.0,117.6 12.5,117.6 13.0,117.6 13.5,117.6 14.0,117.6 14.5,117.7 15.0,117.8 15.5,117.9 16.0,118.2 16.5,118.5 17.0,118.9 17.5,119.5 18.0,120.1 18.5,120.8 19.0,121.5 19.5,122.1 20.0,122.8 20.5,123.4 21.0,123.5 21.5,123.5 22.0,123.5 22.5,123.5 23.0,123.5 23.5,123.5 24.0,123.5 24.5,123.5 25.0,123.5 25.5,123.3 26.0,122.6 26.5,121.9 27.0,121.1 27.5,120.3 28.0,119.6 28.5,119.0 29.0,118.5 29.5,118.1 30.0,117.9 30.5,117.7 31.0,117.6 31.5,117.6 32.0,117.6 32.5,117.6 33.0,117.6 33.5,117.7 34.0,117.7 34.5,117.9 35.0,118.1 35.5,118.5 36.0,118.9 36.5,119.4 37.0,120.0 37.5,120.7 38.0,121.4 38.5,122.1 39.0,122.7 39.5,123.3 40.0,123.5 40.5,123.5 41.0,123.5 41.5,123.5 42.0,123.5 42.5,123.5 43.0,123.5 43.5,123.5 44.0,123.5 44.5,123.4 45.0,122.7 45.5,122.0 46.0,121.2 46.5,120.4 47.0,119.7 47.5,119.0 48.0,118.5 48.5,118.1 49.0,117.9 49.5,117.7 50.0,117.6 50.5,117.6 51.0,117.6 51.5,117.6 52.0,117.6 52.5,117.7 53.0,117.7 53.5,117.9 54.0,118.1 54.5,118.4 55.0,118.9 55.5,119.4 56.0,120.0 56.5,120.6 57.0,121.3 57.5,122.0 58.0,122.7 58.5,123.3 59.0,123.5 59.5,123.5 60.0,123.5 60.5,123.5 61.0,123.5 61.5,123.5 62.0,123.5 62.5,123.5 63.0,123.5 63.5,123.4 64.0,122.8 64.5,122.0 65.0,121.3 65.5,120.5 66.0,119.7 66.5,119.1 67.0,118.6 67.5,118.2 68.0,117.9 68.5,117.7 69.0,117.6 69.5,117.6 70.0,117.6 70.5,117.6 71.0,117.6 71.5,117.6 72.0,117.7 72.5,117.9 73.0,118.1 73.5,118.4 74.0,118.8 74.5,119.3 75.0,119.9 75.5,120.6 76.0,121.3 76.5,121.9 L76.5,128.1 76.0,128.7 75.5,129.4 75.0,130.1 74.5,130.7 74.0,131.2 73.5,131.6 73.0,131.9 72.5,132.1 72.0,132.3 71.5,132.4 71.0,132.4 70.5,132.4 70.0,132.4 69.5,132.4 69.0,132.4 68.5,132.3 68.0,132.1 67.5,131.8 67.0,131.4 66.5,130.9 66.0,130.3 65.5,129.5 65.0,128.7 64.5,128.0 64.0,127.2 63.5,126.6 63.0,126.5 62.5,126.5 62.0,126.5 61.5,126.5 61.0,126.5 60.5,126.5 60.0,126.5 59.5,126.5 59.0,126.5 58.5,126.7 58.0,127.3 57.5,128.0 57.0,128.7 56.5,129.4 56.0,130.0 55.5,130.6 55.0,131.1 54.5,131.6 54.0,131.9 53.5,132.1 53.0,132.3 52.5,132.3 52.0,132.4 51.5,132.4 51.0,132.4 50.5,132.4 50.0,132.4 49.5,132.3 49.0,132.1 48.5,131.9 48.0,131.5 47.5,131.0 47.0,130.3 46.5,129.6 46.0,128.8 45.5,128.0 45.0,127.3 44.5,126.6 44.0,126.5 43.5,126.5 43.0,126.5 42.5,126.5 42.0,126.5 41.5,126.5 41.0,126.5 40.5,126.5 40.0,126.5 39.5,126.7 39.0,127.3 38.5,127.9 38.0,128.6 37.5,129.3 37.0,130.0 36.5,130.6 36.0,131.1 35.5,131.5 35.0,131.9 34.5,132.1 34.0,132.3 33.5,132.3 33.0,132.4 32.5,132.4 32.0,132.4 31.5,132.4 31.0,132.4 30.5,132.3 30.0,132.1 29.5,131.9 29.0,131.5 28.5,131.0 28.0,130.4 27.5,129.7 27.0,128.9 26.5,128.1 26.0,127.4 25.5,126.7 25.0,126.5 24.5,126.5 24.0,126.5 23.5,126.5 23.0,126.5 22.5,126.5 22.0,126.5 21.5,126.5 21.0,126.5 20.5,126.6 20.0,127.2 19.5,127.9 19.0,128.5 18.5,129.2 18.0,129.9 17.5,130.5 17.0,131.1 16.5,131.5 16.0,131.8 15.5,132.1 15.0,132.2 14.5,132.3 14.0,132.4 13.5,132.4 13.0,132.4 12.5,132.4 12.0,132.4 11.5,132.3 11.0,132.2 10.5,131.9 10.0,131.6 9.5,131.1 9.0,130.5 8.5,129.7 8.0,129.0 7.5,128.2 7.0,127.4 6.5,126.8 6.0,126.5 5.5,126.5 5.0,126.5 4.5,126.5 4.0,126.5 3.5,126.5 3.0,126.5 2.5,126.5 2.0,126.5 1.5,126.6 1.0,127.2 0.5,127.8 0.0,128.5Z"/><path id="wperc20" d="M0.0,61.5 0.5,61.8 1.0,61.9 1.5,61.9 2.0,61.9 2.5,61.9 3.0,61.9 3.5,61.7 4.0,61.6 4.5,61.4 5.0,61.3 5.5,61.2 6.0,61.1 6.5,61.1 7.0,61.1 7.5,61.2 8.0,61.3 8.5,61.4 9.0,61.5 9.5,61.7 10.0,61.8 10.5,61.9 11.0,61.9 11.5,61.9 12.0,61.9 12.5,61.9 13.0,61.9 13.5,61.9 14.0,61.9 14.5,61.9 15.0,61.9 15.5,61.9 16.0,61.9 16.5,61.9 17.0,61.9 17.5,61.9 18.0,61.9 18.5,61.9 19.0,61.9 19.5,61.9 20.0,61.9 20.5,61.9 21.0,61.9 21.5,61.9 22.0,61.9 22.5,61.9 23.0,61.9 23.5,61.7 24.0,61.5 24.5,61.3 25.0,61.2 25.5,61.1 26.0,61.1 26.5,61.2 27.0,61.3 27.5,61.5 28.0,61.7 28.5,61.9 29.0,61.9 29.5,61.9 30.0,61.9 30.5,61.9 31.0,61.9 31.5,61.9 32.0,61.9 32.5,61.9 33.0,61.6 33.5,61.1 34.0,60.5 34.5,60.0 35.0,59.6 35.5,59.5 36.0,59.7 36.5,60.2 37.0,60.7 37.5,61.3 38.0,61.8 38.5,61.9 39.0,61.9 39.5,61.9 40.0,61.9 40.5,61.9 41.0,61.9 41.5,61.9 42.0,61.9 42.5,61.9 43.0,61.9 43.5,61.9 44.0,61.9 44.5,61.9 45.0,61.9 45.5,61.9 46.0,61.9 46.5,61.7 47.0,61.2 47.5,60.6 48.0,60.0 48.5,59.5 49.0,59.3 49.5,59.2 50.0,59.5 50.5,59.9 51.0,60.5 51.5,61.1 52.0,61.5 52.5,61.0 53.0,60.4 53.5,59.9 54.0,59.5 54.5,59.3 55.0,59.4 55.5,59.7 56.0,60.2 56.5,60.8 57.0,61.3 57.5,61.8 58.0,61.9 58.5,61.9 59.0,61.9 59.5,61.9 60.0,61.9 60.5,61.8 61.0,61.5 61.5,61.2 62.0,60.9 62.5,60.7 63.0,60.6 63.5,60.5 64.0,60.6 64.5,60.7 65.0,60.9 65.5,61.2 66.0,61.5 66.5,61.8 67.0,61.4 67.5,60.7 68.0,60.1 68.5,59.6 69.0,59.4 69.5,59.6 70.0,60.1 70.5,60.7 71.0,61.4 71.5,61.0 72.0,60.7 72.5,60.4 73.0,60.3 73.5,60.2 74.0,60.3 74.5,60.4 75.0,60.7 75.5,61.0 76.0,61.4 76.5,61.7 L76.5,63.3 76.0,63.6 75.5,64.0 75.0,64.3 74.5,64.6 74.0,64.7 73.5,64.8 73.0,64.7 72.5,64.6 72.0,64.3 71.5,64.0 71.0,63.6 70.5,64.3 70.0,64.9 69.5,65.4 69.0,65.6 68.5,65.4 68.0,64.9 67.5,64.3 67.0,63.6 66.5,63.2 66.0,63.5 65.5,63.8 65.0,64.1 64.5,64.3 64.0,64.4 63.5,64.5 63.0,64.4 62.5,64.3 62.0,64.1 61.5,63.8 61.0,63.5 60.5,63.2 60.0,63.1 59.5,63.1 59.0,63.1 58.5,63.1 58.0,63.1 57.5,63.2 57.0,63.7 56.5,64.2 56.0,64.8 55.5,65.3 55.0,65.6 54.5,65.7 54.0,65.5 53.5,65.1 53.0,64.6 52.5,64.0 52.0,63.5 51.5,63.9 51.0,64.5 50.5,65.1 50.0,65.5 49.5,65.8 49.0,65.7 48.5,65.5 48.0,65.0 47.5,64.4 47.0,63.8 46.5,63.3 46.0,63.1 45.5,63.1 45.0,63.1 44.5,63.1 44.0,63.1 43.5,63.1 43.0,63.1 42.5,63.1 42.0,63.1 41.5,63.1 41.0,63.1 40.5,63.1 40.0,63.1 39.5,63.1 39.0,63.1 38.5,63.1 38.0,63.2 37.5,63.7 37.0,64.3 36.5,64.8 36.0,65.3 35.5,65.5 35.0,65.4 34.5,65.0 34.0,64.5 33.5,63.9 33.0,63.4 32.5,63.1 32.0,63.1 31.5,63.1 31.0,63.1 30.5,63.1 30.0,63.1 29.5,63.1 29.0,63.1 28.5,63.1 28.0,63.3 27.5,63.5 27.0,63.7 26.5,63.8 26.0,63.9 25.5,63.9 25.0,63.8 24.5,63.7 24.0,63.5 23.5,63.3 23.0,63.1 22.5,63.1 22.0,63.1 21.5,63.1 21.0,63.1 20.5,63.1 20.0,63.1 19.5,63.1 19.0,63.1 18.5,63.1 18.0,63.1 17.5,63.1 17.0,63.1 16.5,63.1 16.0,63.1 15.5,63.1 15.0,63.1 14.5,63.1 14.0,63.1 13.5,63.1 13.0,63.1 12.5,63.1 12.0,63.1 11.5,63.1 11.0,63.1 10.5,63.1 10.0,63.2 9.5,63.3 9.0,63.5 8.5,63.6 8.0,63.7 7.5,63.8 7.0,63.9 6.5,63.9 6.0,63.9 5.5,63.8 5.0,63.7 4.5,63.6 4.0,63.4 3.5,63.3 3.0,63.1 2.5,63.1 2.0,63.1 1.5,63.1 1.0,63.1 0.5,63.2 0.0,63.5Z M0.0,124.3 0.5,124.1 1.0,123.9 1.5,123.8 2.0,123.6 2.5,123.5 3.0,123.4 3.5,123.4 4.0,123.4 4.5,123.5 5.0,123.6 5.5,123.8 6.0,123.9 6.5,124.1 7.0,124.3 7.5,124.4 8.0,124.4 8.5,124.4 9.0,124.2 9.5,123.8 10.0,123.5 10.5,123.1 11.0,122.9 11.5,122.8 12.0,122.9 12.5,123.1 13.0,123.5 13.5,123.1 14.0,122.7 14.5,122.3 15.0,122.1 15.5,122.0 16.0,122.1 16.5,122.3 17.0,122.7 17.5,123.1 18.0,123.5 18.5,123.9 19.0,124.2 19.5,124.4 20.0,124.4 20.5,124.4 21.0,124.4 21.5,124.4 22.0,124.4 22.5,124.4 23.0,124.4 23.5,124.2 24.0,124.0 24.5,123.8 25.0,123.6 25.5,123.5 26.0,123.5 26.5,123.6 27.0,123.7 27.5,123.9 28.0,124.1 28.5,124.3 29.0,124.4 29.5,124.4 30.0,124.4 30.5,124.4 31.0,124.4 31.5,124.4 32.0,124.4 32.5,124.4 33.0,124.1 33.5,123.6 34.0,123.0 34.5,122.5 35.0,122.1 35.5,122.0 36.0,122.2 36.5,122.7 37.0,123.2 37.5,123.8 38.0,124.3 38.5,124.4 39.0,124.4 39.5,124.4 40.0,124.4 40.5,124.4 41.0,124.4 41.5,124.4 42.0,124.4 42.5,124.4 43.0,124.4 43.5,124.4 44.0,124.4 44.5,124.4 45.0,124.4 45.5,124.4 46.0,124.4 46.5,124.1 47.0,123.6 47.5,123.0 48.0,122.4 48.5,121.9 49.0,121.6 49.5,121.5 50.0,121.8 50.5,122.3 51.0,122.9 51.5,123.5 52.0,124.0 52.5,123.5 53.0,122.9 53.5,122.3 54.0,121.9 54.5,121.7 55.0,121.8 55.5,122.1 56.0,122.7 56.5,123.2 57.0,123.8 57.5,124.2 58.0,124.4 58.5,124.4 59.0,124.4 59.5,124.4 60.0,124.4 60.5,124.3 61.0,124.1 61.5,123.8 62.0,123.6 62.5,123.4 63.0,123.2 63.5,123.2 64.0,123.2 64.5,123.4 65.0,123.6 65.5,123.6 66.0,123.1 66.5,122.7 67.0,122.5 67.5,122.7 68.0,123.1 68.5,123.6 69.0,124.0 69.5,123.6 70.0,123.2 70.5,122.8 71.0,122.5 71.5,122.3 72.0,122.2 72.5,122.3 73.0,122.5 73.5,122.8 74.0,123.2 74.5,123.6 75.0,124.0 75.5,124.3 76.0,124.3 76.5,124.2 L76.5,125.8 76.0,125.7 75.5,125.7 75.0,126.0 74.5,126.4 74.0,126.8 73.5,127.2 73.0,127.5 72.5,127.7 72.0,127.8 71.5,127.7 71.0,127.5 70.5,127.2 70.0,126.8 69.5,126.4 69.0,126.0 68.5,126.4 68.0,126.9 67.5,127.3 67.0,127.5 66.5,127.3 66.0,126.9 65.5,126.4 65.0,126.4 64.5,126.6 64.0,126.8 63.5,126.8 63.0,126.8 62.5,126.6 62.0,126.4 61.5,126.2 61.0,125.9 60.5,125.7 60.0,125.6 59.5,125.6 59.0,125.6 58.5,125.6 58.0,125.6 57.5,125.8 57.0,126.2 56.5,126.8 56.0,127.3 55.5,127.9 55.0,128.2 54.5,128.3 54.0,128.1 53.5,127.7 53.0,127.1 52.5,126.5 52.0,126.0 51.5,126.5 51.0,127.1 50.5,127.7 50.0,128.2 49.5,128.5 49.0,128.4 48.5,128.1 48.0,127.6 47.5,127.0 47.0,126.4 46.5,125.9 46.0,125.6 45.5,125.6 45.0,125.6 44.5,125.6 44.0,125.6 43.5,125.6 43.0,125.6 42.5,125.6 42.0,125.6 41.5,125.6 41.0,125.6 40.5,125.6 40.0,125.6 39.5,125.6 39.0,125.6 38.5,125.6 38.0,125.7 37.5,126.2 37.0,126.8 36.5,127.3 36.0,127.8 35.5,128.0 35.0,127.9 34.5,127.5 34.0,127.0 33.5,126.4 33.0,125.9 32.5,125.6 32.0,125.6 31.5,125.6 31.0,125.6 30.5,125.6 30.0,125.6 29.5,125.6 29.0,125.6 28.5,125.7 28.0,125.9 27.5,126.1 27.0,126.3 26.5,126.4 26.0,126.5 25.5,126.5 25.0,126.4 24.5,126.2 24.0,126.0 23.5,125.8 23.0,125.6 22.5,125.6 22.0,125.6 21.5,125.6 21.0,125.6 20.5,125.6 20.0,125.6 19.5,125.6 19.0,125.8 18.5,126.1 18.0,126.5 17.5,126.9 17.0,127.3 16.5,127.7 16.0,127.9 15.5,128.0 15.0,127.9 14.5,127.7 14.0,127.3 13.5,126.9 13.0,126.5 12.5,126.9 12.0,127.1 11.5,127.2 11.0,127.1 10.5,126.9 10.0,126.5 9.5,126.2 9.0,125.8 8.5,125.6 8.0,125.6 7.5,125.6 7.0,125.7 6.5,125.9 6.0,126.1 5.5,126.2 5.0,126.4 4.5,126.5 4.0,126.6 3.5,126.6 3.0,126.6 2.5,126.5 2.0,126.4 1.5,126.2 1.0,126.1 0.5,125.9 0.0,125.7Z"/></defs></svg>
<div style="left:64.00px;top:211.00px;width:609.60px;height:157.00px;background:#1c3291;"></div>
<div style="left:88.90px;top:241.00px;width:1.00px;height:127.00px;background:#1a2f88;"></div>
<div style="left:114.30px;top:241.00px;width:1.00px;height:127.00px;background:#1a2f88;"></div>
<div style="left:139.45px;top:241.00px;width:1.50px;height:127.00px;background:#172a7c;"></div>
<div style="left:165.10px;top:241.00px;width:1.00px;height:127.00px;background:#1a2f88;"></div>
<div style="left:190.50px;top:241.00px;width:1.00px;height:127.00px;background:#1a2f88;"></div>
<div style="left:215.65px;top:241.00px;width:1.50px;height:127.00px;background:#172a7c;"></div>
<div style="left:241.30px;top:241.00px;width:1.00px;height:127.00px;background:#1a2f88;"></div>
<div style="left:266.70px;top:241.00px;width:1.00px;height:127.00px;background:#1a2f88;"></div>
<div style="left:291.85px;top:241.00px;width:1.50px;height:127.00px;background:#172a7c;"></div>
<div style="left:317.50px;top:241.00px;width:1.00px;height:127.00px;background:#1a2f88;"></div>
<div style="left:342.90px;top:241.00px;width:1.00px;height:127.00px;background:#1a2f88;"></div>
<div style="left:368.05px;top:241.00px;width:1.50px;height:127.00px;background:#172a7c;"></div>
<div style="left:393.70px;top:241.00px;width:1.00px;height:127.00px;background:#1a2f88;"></div>
<div style="left:419.10px;top:241.00px;width:1.00px;height:127.00px;background:#1a2f88;"></div>
<div style="left:444.25px;top:241.00px;width:1.50px;height:127.00px;background:#172a7c;"></div>
<div style="left:469.90px;top:241.00px;width:1.00px;height:127.00px;background:#1a2f88;"></div>
<div style="left:495.30px;top:241.00px;width:1.00px;height:127.00px;background:#1a2f88;"></div>
<div style="left:520.45px;top:241.00px;width:1.50px;height:127.00px;background:#172a7c;"></div>
<div style="left:546.10px;top:241.00px;width:1.00px;height:127.00px;background:#1a2f88;"></div>
<div style="left:571.50px;top:241.00px;width:1.00px;height:127.00px;background:#1a2f88;"></div>
<div style="left:596.65px;top:241.00px;width:1.50px;height:127.00px;background:#172a7c;"></div>
<div style="left:622.30px;top:241.00px;width:1.00px;height:127.00px;background:#1a2f88;"></div>
<div style="left:647.70px;top:241.00px;width:1.00px;height:127.00px;background:#1a2f88;"></div>
<div style="left:64.00px;top:211.00px;width:609.60px;height:1.00px;background:#0f1d5c;"></div>
<div style="left:64.00px;top:240.00px;width:609.60px;height:1.50px;background:#15256e;"></div>
<div style="left:64.00px;top:211.00px;width:1.50px;height:157.00px;background:#0f1d5c;"></div>
<div style="left:368.05px;top:211.00px;width:1.50px;height:5.00px;background:#1e1e1e;"></div>
<div style="left:368.05px;top:363.00px;width:1.50px;height:5.00px;background:#1e1e1e;"></div>
<div style="left:69.00px;top:217.26px;font-size:18px;line-height:18px;height:18px;color:#d5daf0;font-weight:normal;white-space:nowrap;letter-spacing:0px;">KICK</div>
<svg style="left:65.50px;top:211.00px;" width="608.10" height="157.00" viewBox="0 0 608.10 157.00"><g fill="#151a2a" transform="translate(-1.5,0)"><use href="#wkick0" x="0.00"/><use href="#wkick0" x="76.20"/><use href="#wkick0" x="152.40"/><use href="#wkick0" x="228.60"/><use href="#wkick0" x="304.80"/><use href="#wkick0" x="381.00"/><use href="#wkick0" x="457.20"/><use href="#wkick0" x="533.40"/></g></svg>
<div style="left:673.60px;top:211.00px;width:609.60px;height:157.00px;background:#1c3291;"></div>
<div style="left:698.50px;top:241.00px;width:1.00px;height:127.00px;background:#1a2f88;"></div>
<div style="left:723.90px;top:241.00px;width:1.00px;height:127.00px;background:#1a2f88;"></div>
<div style="left:749.05px;top:241.00px;width:1.50px;height:127.00px;background:#172a7c;"></div>
<div style="left:774.70px;top:241.00px;width:1.00px;height:127.00px;background:#1a2f88;"></div>
<div style="left:800.10px;top:241.00px;width:1.00px;height:127.00px;background:#1a2f88;"></div>
<div style="left:825.25px;top:241.00px;width:1.50px;height:127.00px;background:#172a7c;"></div>
<div style="left:850.90px;top:241.00px;width:1.00px;height:127.00px;background:#1a2f88;"></div>
<div style="left:876.30px;top:241.00px;width:1.00px;height:127.00px;background:#1a2f88;"></div>
<div style="left:901.45px;top:241.00px;width:1.50px;height:127.00px;background:#172a7c;"></div>
<div style="left:927.10px;top:241.00px;width:1.00px;height:127.00px;background:#1a2f88;"></div>
<div style="left:952.50px;top:241.00px;width:1.00px;height:127.00px;background:#1a2f88;"></div>
<div style="left:977.65px;top:241.00px;width:1.50px;height:127.00px;background:#172a7c;"></div>
<div style="left:1003.30px;top:241.00px;width:1.00px;height:127.00px;background:#1a2f88;"></div>
<div style="left:1028.70px;top:241.00px;width:1.00px;height:127.00px;background:#1a2f88;"></div>
<div style="left:1053.85px;top:241.00px;width:1.50px;height:127.00px;background:#172a7c;"></div>
<div style="left:1079.50px;top:241.00px;width:1.00px;height:127.00px;background:#1a2f88;"></div>
<div style="left:1104.90px;top:241.00px;width:1.00px;height:127.00px;background:#1a2f88;"></div>
<div style="left:1130.05px;top:241.00px;width:1.50px;height:127.00px;background:#172a7c;"></div>
<div style="left:1155.70px;top:241.00px;width:1.00px;height:127.00px;background:#1a2f88;"></div>
<div style="left:1181.10px;top:241.00px;width:1.00px;height:127.00px;background:#1a2f88;"></div>
<div style="left:1206.25px;top:241.00px;width:1.50px;height:127.00px;background:#172a7c;"></div>
<div style="left:1231.90px;top:241.00px;width:1.00px;height:127.00px;background:#1a2f88;"></div>
<div style="left:1257.30px;top:241.00px;width:1.00px;height:127.00px;background:#1a2f88;"></div>
<div style="left:673.60px;top:211.00px;width:609.60px;height:1.00px;background:#0f1d5c;"></div>
<div style="left:673.60px;top:240.00px;width:609.60px;height:1.50px;background:#15256e;"></div>
<div style="left:673.60px;top:211.00px;width:1.50px;height:157.00px;background:#0f1d5c;"></div>
<div style="left:977.65px;top:211.00px;width:1.50px;height:5.00px;background:#1e1e1e;"></div>
<div style="left:977.65px;top:363.00px;width:1.50px;height:5.00px;background:#1e1e1e;"></div>
<div style="left:678.60px;top:217.26px;font-size:18px;line-height:18px;height:18px;color:#d5daf0;font-weight:normal;white-space:nowrap;letter-spacing:0px;">KICK</div>
<svg style="left:675.10px;top:211.00px;" width="608.10" height="157.00" viewBox="0 0 608.10 157.00"><g fill="#151a2a" transform="translate(-1.5,0)"><use href="#wkick0" x="0.00"/><use href="#wkick0" x="76.20"/><use href="#wkick0" x="152.40"/><use href="#wkick0" x="228.60"/><use href="#wkick0" x="304.80"/><use href="#wkick0" x="381.00"/><use href="#wkick0" x="457.20"/><use href="#wkick0" x="533.40"/></g></svg>
<div style="left:1283.20px;top:211.00px;width:609.60px;height:157.00px;background:#1c3291;"></div>
<div style="left:1308.10px;top:241.00px;width:1.00px;height:127.00px;background:#1a2f88;"></div>
<div style="left:1333.50px;top:241.00px;width:1.00px;height:127.00px;background:#1a2f88;"></div>
<div style="left:1358.65px;top:241.00px;width:1.50px;height:127.00px;background:#172a7c;"></div>
<div style="left:1384.30px;top:241.00px;width:1.00px;height:127.00px;background:#1a2f88;"></div>
<div style="left:1409.70px;top:241.00px;width:1.00px;height:127.00px;background:#1a2f88;"></div>
<div style="left:1434.85px;top:241.00px;width:1.50px;height:127.00px;background:#172a7c;"></div>
<div style="left:1460.50px;top:241.00px;width:1.00px;height:127.00px;background:#1a2f88;"></div>
<div style="left:1485.90px;top:241.00px;width:1.00px;height:127.00px;background:#1a2f88;"></div>
<div style="left:1511.05px;top:241.00px;width:1.50px;height:127.00px;background:#172a7c;"></div>
<div style="left:1536.70px;top:241.00px;width:1.00px;height:127.00px;background:#1a2f88;"></div>
<div style="left:1562.10px;top:241.00px;width:1.00px;height:127.00px;background:#1a2f88;"></div>
<div style="left:1587.25px;top:241.00px;width:1.50px;height:127.00px;background:#172a7c;"></div>
<div style="left:1612.90px;top:241.00px;width:1.00px;height:127.00px;background:#1a2f88;"></div>
<div style="left:1638.30px;top:241.00px;width:1.00px;height:127.00px;background:#1a2f88;"></div>
<div style="left:1663.45px;top:241.00px;width:1.50px;height:127.00px;background:#172a7c;"></div>
<div style="left:1689.10px;top:241.00px;width:1.00px;height:127.00px;background:#1a2f88;"></div>
<div style="left:1714.50px;top:241.00px;width:1.00px;height:127.00px;background:#1a2f88;"></div>
<div style="left:1739.65px;top:241.00px;width:1.50px;height:127.00px;background:#172a7c;"></div>
<div style="left:1765.30px;top:241.00px;width:1.00px;height:127.00px;background:#1a2f88;"></div>
<div style="left:1790.70px;top:241.00px;width:1.00px;height:127.00px;background:#1a2f88;"></div>
<div style="left:1815.85px;top:241.00px;width:1.50px;height:127.00px;background:#172a7c;"></div>
<div style="left:1841.50px;top:241.00px;width:1.00px;height:127.00px;background:#1a2f88;"></div>
<div style="left:1866.90px;top:241.00px;width:1.00px;height:127.00px;background:#1a2f88;"></div>
<div style="left:1283.20px;top:211.00px;width:609.60px;height:1.00px;background:#0f1d5c;"></div>
<div style="left:1283.20px;top:240.00px;width:609.60px;height:1.50px;background:#15256e;"></div>
<div style="left:1283.20px;top:211.00px;width:1.50px;height:157.00px;background:#0f1d5c;"></div>
<div style="left:1587.25px;top:211.00px;width:1.50px;height:5.00px;background:#1e1e1e;"></div>
<div style="left:1587.25px;top:363.00px;width:1.50px;height:5.00px;background:#1e1e1e;"></div>
<div style="left:1288.20px;top:217.26px;font-size:18px;line-height:18px;height:18px;color:#d5daf0;font-weight:normal;white-space:nowrap;letter-spacing:0px;">KICK</div>
<svg style="left:1284.70px;top:211.00px;" width="608.10" height="157.00" viewBox="0 0 608.10 157.00"><g fill="#151a2a" transform="translate(-1.5,0)"><use href="#wkick0" x="0.00"/><use href="#wkick0" x="76.20"/><use href="#wkick0" x="152.40"/><use href="#wkick0" x="228.60"/><use href="#wkick0" x="304.80"/><use href="#wkick0" x="381.00"/><use href="#wkick0" x="457.20"/><use href="#wkick0" x="533.40"/></g></svg>
<div style="left:673.60px;top:372.00px;width:609.60px;height:157.00px;background:#f2a97e;"></div>
<div style="left:698.50px;top:402.00px;width:1.00px;height:127.00px;background:#e8a077;"></div>
<div style="left:723.90px;top:402.00px;width:1.00px;height:127.00px;background:#e8a077;"></div>
<div style="left:749.05px;top:402.00px;width:1.50px;height:127.00px;background:#d7936c;"></div>
<div style="left:774.70px;top:402.00px;width:1.00px;height:127.00px;background:#e8a077;"></div>
<div style="left:800.10px;top:402.00px;width:1.00px;height:127.00px;background:#e8a077;"></div>
<div style="left:825.25px;top:402.00px;width:1.50px;height:127.00px;background:#d7936c;"></div>
<div style="left:850.90px;top:402.00px;width:1.00px;height:127.00px;background:#e8a077;"></div>
<div style="left:876.30px;top:402.00px;width:1.00px;height:127.00px;background:#e8a077;"></div>
<div style="left:901.45px;top:402.00px;width:1.50px;height:127.00px;background:#d7936c;"></div>
<div style="left:927.10px;top:402.00px;width:1.00px;height:127.00px;background:#e8a077;"></div>
<div style="left:952.50px;top:402.00px;width:1.00px;height:127.00px;background:#e8a077;"></div>
<div style="left:977.65px;top:402.00px;width:1.50px;height:127.00px;background:#d7936c;"></div>
<div style="left:1003.30px;top:402.00px;width:1.00px;height:127.00px;background:#e8a077;"></div>
<div style="left:1028.70px;top:402.00px;width:1.00px;height:127.00px;background:#e8a077;"></div>
<div style="left:1053.85px;top:402.00px;width:1.50px;height:127.00px;background:#d7936c;"></div>
<div style="left:1079.50px;top:402.00px;width:1.00px;height:127.00px;background:#e8a077;"></div>
<div style="left:1104.90px;top:402.00px;width:1.00px;height:127.00px;background:#e8a077;"></div>
<div style="left:1130.05px;top:402.00px;width:1.50px;height:127.00px;background:#d7936c;"></div>
<div style="left:1155.70px;top:402.00px;width:1.00px;height:127.00px;background:#e8a077;"></div>
<div style="left:1181.10px;top:402.00px;width:1.00px;height:127.00px;background:#e8a077;"></div>
<div style="left:1206.25px;top:402.00px;width:1.50px;height:127.00px;background:#d7936c;"></div>
<div style="left:1231.90px;top:402.00px;width:1.00px;height:127.00px;background:#e8a077;"></div>
<div style="left:1257.30px;top:402.00px;width:1.00px;height:127.00px;background:#e8a077;"></div>
<div style="left:673.60px;top:372.00px;width:609.60px;height:1.00px;background:#b97752;"></div>
<div style="left:673.60px;top:401.00px;width:609.60px;height:1.50px;background:#c88460;"></div>
<div style="left:673.60px;top:372.00px;width:1.50px;height:157.00px;background:#b97752;"></div>
<div style="left:977.65px;top:372.00px;width:1.50px;height:5.00px;background:#1e1e1e;"></div>
<div style="left:977.65px;top:524.00px;width:1.50px;height:5.00px;background:#1e1e1e;"></div>
<div style="left:678.60px;top:378.26px;font-size:18px;line-height:18px;height:18px;color:#3a2a20;font-weight:normal;white-space:nowrap;letter-spacing:0px;">SHAKER</div>
<svg style="left:675.10px;top:372.00px;" width="608.10" height="157.00" viewBox="0 0 608.10 157.00"><g fill="#2d221c" transform="translate(-1.5,0)"><use href="#wshaker0" x="0.00"/><use href="#wshaker0" x="76.20"/><use href="#wshaker0" x="152.40"/><use href="#wshaker0" x="228.60"/><use href="#wshaker0" x="304.80"/><use href="#wshaker0" x="381.00"/><use href="#wshaker0" x="457.20"/><use href="#wshaker0" x="533.40"/></g></svg>
<div style="left:1283.20px;top:372.00px;width:609.60px;height:157.00px;background:#f2a97e;"></div>
<div style="left:1308.10px;top:402.00px;width:1.00px;height:127.00px;background:#e8a077;"></div>
<div style="left:1333.50px;top:402.00px;width:1.00px;height:127.00px;background:#e8a077;"></div>
<div style="left:1358.65px;top:402.00px;width:1.50px;height:127.00px;background:#d7936c;"></div>
<div style="left:1384.30px;top:402.00px;width:1.00px;height:127.00px;background:#e8a077;"></div>
<div style="left:1409.70px;top:402.00px;width:1.00px;height:127.00px;background:#e8a077;"></div>
<div style="left:1434.85px;top:402.00px;width:1.50px;height:127.00px;background:#d7936c;"></div>
<div style="left:1460.50px;top:402.00px;width:1.00px;height:127.00px;background:#e8a077;"></div>
<div style="left:1485.90px;top:402.00px;width:1.00px;height:127.00px;background:#e8a077;"></div>
<div style="left:1511.05px;top:402.00px;width:1.50px;height:127.00px;background:#d7936c;"></div>
<div style="left:1536.70px;top:402.00px;width:1.00px;height:127.00px;background:#e8a077;"></div>
<div style="left:1562.10px;top:402.00px;width:1.00px;height:127.00px;background:#e8a077;"></div>
<div style="left:1587.25px;top:402.00px;width:1.50px;height:127.00px;background:#d7936c;"></div>
<div style="left:1612.90px;top:402.00px;width:1.00px;height:127.00px;background:#e8a077;"></div>
<div style="left:1638.30px;top:402.00px;width:1.00px;height:127.00px;background:#e8a077;"></div>
<div style="left:1663.45px;top:402.00px;width:1.50px;height:127.00px;background:#d7936c;"></div>
<div style="left:1689.10px;top:402.00px;width:1.00px;height:127.00px;background:#e8a077;"></div>
<div style="left:1714.50px;top:402.00px;width:1.00px;height:127.00px;background:#e8a077;"></div>
<div style="left:1739.65px;top:402.00px;width:1.50px;height:127.00px;background:#d7936c;"></div>
<div style="left:1765.30px;top:402.00px;width:1.00px;height:127.00px;background:#e8a077;"></div>
<div style="left:1790.70px;top:402.00px;width:1.00px;height:127.00px;background:#e8a077;"></div>
<div style="left:1815.85px;top:402.00px;width:1.50px;height:127.00px;background:#d7936c;"></div>
<div style="left:1841.50px;top:402.00px;width:1.00px;height:127.00px;background:#e8a077;"></div>
<div style="left:1866.90px;top:402.00px;width:1.00px;height:127.00px;background:#e8a077;"></div>
<div style="left:1283.20px;top:372.00px;width:609.60px;height:1.00px;background:#b97752;"></div>
<div style="left:1283.20px;top:401.00px;width:609.60px;height:1.50px;background:#c88460;"></div>
<div style="left:1283.20px;top:372.00px;width:1.50px;height:157.00px;background:#b97752;"></div>
<div style="left:1587.25px;top:372.00px;width:1.50px;height:5.00px;background:#1e1e1e;"></div>
<div style="left:1587.25px;top:524.00px;width:1.50px;height:5.00px;background:#1e1e1e;"></div>
<div style="left:1288.20px;top:378.26px;font-size:18px;line-height:18px;height:18px;color:#3a2a20;font-weight:normal;white-space:nowrap;letter-spacing:0px;">SHAKER</div>
<svg style="left:1284.70px;top:372.00px;" width="608.10" height="157.00" viewBox="0 0 608.10 157.00"><g fill="#2d221c" transform="translate(-1.5,0)"><use href="#wshaker0" x="0.00"/><use href="#wshaker0" x="76.20"/><use href="#wshaker0" x="152.40"/><use href="#wshaker0" x="228.60"/><use href="#wshaker0" x="304.80"/><use href="#wshaker0" x="381.00"/><use href="#wshaker0" x="457.20"/><use href="#wshaker0" x="533.40"/></g></svg>
<div style="left:64.00px;top:533.00px;width:609.60px;height:157.00px;background:#f2a97e;"></div>
<div style="left:88.90px;top:563.00px;width:1.00px;height:127.00px;background:#e8a077;"></div>
<div style="left:114.30px;top:563.00px;width:1.00px;height:127.00px;background:#e8a077;"></div>
<div style="left:139.45px;top:563.00px;width:1.50px;height:127.00px;background:#d7936c;"></div>
<div style="left:165.10px;top:563.00px;width:1.00px;height:127.00px;background:#e8a077;"></div>
<div style="left:190.50px;top:563.00px;width:1.00px;height:127.00px;background:#e8a077;"></div>
<div style="left:215.65px;top:563.00px;width:1.50px;height:127.00px;background:#d7936c;"></div>
<div style="left:241.30px;top:563.00px;width:1.00px;height:127.00px;background:#e8a077;"></div>
<div style="left:266.70px;top:563.00px;width:1.00px;height:127.00px;background:#e8a077;"></div>
<div style="left:291.85px;top:563.00px;width:1.50px;height:127.00px;background:#d7936c;"></div>
<div style="left:317.50px;top:563.00px;width:1.00px;height:127.00px;background:#e8a077;"></div>
<div style="left:342.90px;top:563.00px;width:1.00px;height:127.00px;background:#e8a077;"></div>
<div style="left:368.05px;top:563.00px;width:1.50px;height:127.00px;background:#d7936c;"></div>
<div style="left:393.70px;top:563.00px;width:1.00px;height:127.00px;background:#e8a077;"></div>
<div style="left:419.10px;top:563.00px;width:1.00px;height:127.00px;background:#e8a077;"></div>
<div style="left:444.25px;top:563.00px;width:1.50px;height:127.00px;background:#d7936c;"></div>
<div style="left:469.90px;top:563.00px;width:1.00px;height:127.00px;background:#e8a077;"></div>
<div style="left:495.30px;top:563.00px;width:1.00px;height:127.00px;background:#e8a077;"></div>
<div style="left:520.45px;top:563.00px;width:1.50px;height:127.00px;background:#d7936c;"></div>
<div style="left:546.10px;top:563.00px;width:1.00px;height:127.00px;background:#e8a077;"></div>
<div style="left:571.50px;top:563.00px;width:1.00px;height:127.00px;background:#e8a077;"></div>
<div style="left:596.65px;top:563.00px;width:1.50px;height:127.00px;background:#d7936c;"></div>
<div style="left:622.30px;top:563.00px;width:1.00px;height:127.00px;background:#e8a077;"></div>
<div style="left:647.70px;top:563.00px;width:1.00px;height:127.00px;background:#e8a077;"></div>
<div style="left:64.00px;top:533.00px;width:609.60px;height:1.00px;background:#b97752;"></div>
<div style="left:64.00px;top:562.00px;width:609.60px;height:1.50px;background:#c88460;"></div>
<div style="left:64.00px;top:533.00px;width:1.50px;height:157.00px;background:#b97752;"></div>
<div style="left:368.05px;top:533.00px;width:1.50px;height:5.00px;background:#1e1e1e;"></div>
<div style="left:368.05px;top:685.00px;width:1.50px;height:5.00px;background:#1e1e1e;"></div>
<div style="left:69.00px;top:539.26px;font-size:18px;line-height:18px;height:18px;color:#3a2a20;font-weight:normal;white-space:nowrap;letter-spacing:-0.45px;">PERC LOOP 1</div>
<svg style="left:65.50px;top:533.00px;" width="608.10" height="157.00" viewBox="0 0 608.10 157.00"><g fill="#2d221c" transform="translate(-1.5,0)"><use href="#wperc10" x="0.00"/><use href="#wperc10" x="76.20"/><use href="#wperc10" x="152.40"/><use href="#wperc10" x="228.60"/><use href="#wperc10" x="304.80"/><use href="#wperc10" x="381.00"/><use href="#wperc10" x="457.20"/><use href="#wperc10" x="533.40"/></g></svg>
<div style="left:673.60px;top:533.00px;width:609.60px;height:157.00px;background:#f2a97e;"></div>
<div style="left:698.50px;top:563.00px;width:1.00px;height:127.00px;background:#e8a077;"></div>
<div style="left:723.90px;top:563.00px;width:1.00px;height:127.00px;background:#e8a077;"></div>
<div style="left:749.05px;top:563.00px;width:1.50px;height:127.00px;background:#d7936c;"></div>
<div style="left:774.70px;top:563.00px;width:1.00px;height:127.00px;background:#e8a077;"></div>
<div style="left:800.10px;top:563.00px;width:1.00px;height:127.00px;background:#e8a077;"></div>
<div style="left:825.25px;top:563.00px;width:1.50px;height:127.00px;background:#d7936c;"></div>
<div style="left:850.90px;top:563.00px;width:1.00px;height:127.00px;background:#e8a077;"></div>
<div style="left:876.30px;top:563.00px;width:1.00px;height:127.00px;background:#e8a077;"></div>
<div style="left:901.45px;top:563.00px;width:1.50px;height:127.00px;background:#d7936c;"></div>
<div style="left:927.10px;top:563.00px;width:1.00px;height:127.00px;background:#e8a077;"></div>
<div style="left:952.50px;top:563.00px;width:1.00px;height:127.00px;background:#e8a077;"></div>
<div style="left:977.65px;top:563.00px;width:1.50px;height:127.00px;background:#d7936c;"></div>
<div style="left:1003.30px;top:563.00px;width:1.00px;height:127.00px;background:#e8a077;"></div>
<div style="left:1028.70px;top:563.00px;width:1.00px;height:127.00px;background:#e8a077;"></div>
<div style="left:1053.85px;top:563.00px;width:1.50px;height:127.00px;background:#d7936c;"></div>
<div style="left:1079.50px;top:563.00px;width:1.00px;height:127.00px;background:#e8a077;"></div>
<div style="left:1104.90px;top:563.00px;width:1.00px;height:127.00px;background:#e8a077;"></div>
<div style="left:1130.05px;top:563.00px;width:1.50px;height:127.00px;background:#d7936c;"></div>
<div style="left:1155.70px;top:563.00px;width:1.00px;height:127.00px;background:#e8a077;"></div>
<div style="left:1181.10px;top:563.00px;width:1.00px;height:127.00px;background:#e8a077;"></div>
<div style="left:1206.25px;top:563.00px;width:1.50px;height:127.00px;background:#d7936c;"></div>
<div style="left:1231.90px;top:563.00px;width:1.00px;height:127.00px;background:#e8a077;"></div>
<div style="left:1257.30px;top:563.00px;width:1.00px;height:127.00px;background:#e8a077;"></div>
<div style="left:673.60px;top:533.00px;width:609.60px;height:1.00px;background:#b97752;"></div>
<div style="left:673.60px;top:562.00px;width:609.60px;height:1.50px;background:#c88460;"></div>
<div style="left:673.60px;top:533.00px;width:1.50px;height:157.00px;background:#b97752;"></div>
<div style="left:977.65px;top:533.00px;width:1.50px;height:5.00px;background:#1e1e1e;"></div>
<div style="left:977.65px;top:685.00px;width:1.50px;height:5.00px;background:#1e1e1e;"></div>
<div style="left:678.60px;top:539.26px;font-size:18px;line-height:18px;height:18px;color:#3a2a20;font-weight:normal;white-space:nowrap;letter-spacing:-0.45px;">PERC LOOP 1</div>
<svg style="left:675.10px;top:533.00px;" width="608.10" height="157.00" viewBox="0 0 608.10 157.00"><g fill="#2d221c" transform="translate(-1.5,0)"><use href="#wperc10" x="0.00"/><use href="#wperc10" x="76.20"/><use href="#wperc10" x="152.40"/><use href="#wperc10" x="228.60"/><use href="#wperc10" x="304.80"/><use href="#wperc10" x="381.00"/><use href="#wperc10" x="457.20"/><use href="#wperc10" x="533.40"/></g></svg>
<div style="left:1283.20px;top:533.00px;width:609.60px;height:157.00px;background:#f2a97e;"></div>
<div style="left:1308.10px;top:563.00px;width:1.00px;height:127.00px;background:#e8a077;"></div>
<div style="left:1333.50px;top:563.00px;width:1.00px;height:127.00px;background:#e8a077;"></div>
<div style="left:1358.65px;top:563.00px;width:1.50px;height:127.00px;background:#d7936c;"></div>
<div style="left:1384.30px;top:563.00px;width:1.00px;height:127.00px;background:#e8a077;"></div>
<div style="left:1409.70px;top:563.00px;width:1.00px;height:127.00px;background:#e8a077;"></div>
<div style="left:1434.85px;top:563.00px;width:1.50px;height:127.00px;background:#d7936c;"></div>
<div style="left:1460.50px;top:563.00px;width:1.00px;height:127.00px;background:#e8a077;"></div>
<div style="left:1485.90px;top:563.00px;width:1.00px;height:127.00px;background:#e8a077;"></div>
<div style="left:1511.05px;top:563.00px;width:1.50px;height:127.00px;background:#d7936c;"></div>
<div style="left:1536.70px;top:563.00px;width:1.00px;height:127.00px;background:#e8a077;"></div>
<div style="left:1562.10px;top:563.00px;width:1.00px;height:127.00px;background:#e8a077;"></div>
<div style="left:1587.25px;top:563.00px;width:1.50px;height:127.00px;background:#d7936c;"></div>
<div style="left:1612.90px;top:563.00px;width:1.00px;height:127.00px;background:#e8a077;"></div>
<div style="left:1638.30px;top:563.00px;width:1.00px;height:127.00px;background:#e8a077;"></div>
<div style="left:1663.45px;top:563.00px;width:1.50px;height:127.00px;background:#d7936c;"></div>
<div style="left:1689.10px;top:563.00px;width:1.00px;height:127.00px;background:#e8a077;"></div>
<div style="left:1714.50px;top:563.00px;width:1.00px;height:127.00px;background:#e8a077;"></div>
<div style="left:1739.65px;top:563.00px;width:1.50px;height:127.00px;background:#d7936c;"></div>
<div style="left:1765.30px;top:563.00px;width:1.00px;height:127.00px;background:#e8a077;"></div>
<div style="left:1790.70px;top:563.00px;width:1.00px;height:127.00px;background:#e8a077;"></div>
<div style="left:1815.85px;top:563.00px;width:1.50px;height:127.00px;background:#d7936c;"></div>
<div style="left:1841.50px;top:563.00px;width:1.00px;height:127.00px;background:#e8a077;"></div>
<div style="left:1866.90px;top:563.00px;width:1.00px;height:127.00px;background:#e8a077;"></div>
<div style="left:1283.20px;top:533.00px;width:609.60px;height:1.00px;background:#b97752;"></div>
<div style="left:1283.20px;top:562.00px;width:609.60px;height:1.50px;background:#c88460;"></div>
<div style="left:1283.20px;top:533.00px;width:1.50px;height:157.00px;background:#b97752;"></div>
<div style="left:1587.25px;top:533.00px;width:1.50px;height:5.00px;background:#1e1e1e;"></div>
<div style="left:1587.25px;top:685.00px;width:1.50px;height:5.00px;background:#1e1e1e;"></div>
<div style="left:1288.20px;top:539.26px;font-size:18px;line-height:18px;height:18px;color:#3a2a20;font-weight:normal;white-space:nowrap;letter-spacing:-0.45px;">PERC LOOP 1</div>
<svg style="left:1284.70px;top:533.00px;" width="608.10" height="157.00" viewBox="0 0 608.10 157.00"><g fill="#2d221c" transform="translate(-1.5,0)"><use href="#wperc10" x="0.00"/><use href="#wperc10" x="76.20"/><use href="#wperc10" x="152.40"/><use href="#wperc10" x="228.60"/><use href="#wperc10" x="304.80"/><use href="#wperc10" x="381.00"/><use href="#wperc10" x="457.20"/><use href="#wperc10" x="533.40"/></g></svg>
<div style="left:64.00px;top:694.00px;width:609.60px;height:157.00px;background:#f2a97e;"></div>
<div style="left:88.90px;top:724.00px;width:1.00px;height:127.00px;background:#e8a077;"></div>
<div style="left:114.30px;top:724.00px;width:1.00px;height:127.00px;background:#e8a077;"></div>
<div style="left:139.45px;top:724.00px;width:1.50px;height:127.00px;background:#d7936c;"></div>
<div style="left:165.10px;top:724.00px;width:1.00px;height:127.00px;background:#e8a077;"></div>
<div style="left:190.50px;top:724.00px;width:1.00px;height:127.00px;background:#e8a077;"></div>
<div style="left:215.65px;top:724.00px;width:1.50px;height:127.00px;background:#d7936c;"></div>
<div style="left:241.30px;top:724.00px;width:1.00px;height:127.00px;background:#e8a077;"></div>
<div style="left:266.70px;top:724.00px;width:1.00px;height:127.00px;background:#e8a077;"></div>
<div style="left:291.85px;top:724.00px;width:1.50px;height:127.00px;background:#d7936c;"></div>
<div style="left:317.50px;top:724.00px;width:1.00px;height:127.00px;background:#e8a077;"></div>
<div style="left:342.90px;top:724.00px;width:1.00px;height:127.00px;background:#e8a077;"></div>
<div style="left:368.05px;top:724.00px;width:1.50px;height:127.00px;background:#d7936c;"></div>
<div style="left:393.70px;top:724.00px;width:1.00px;height:127.00px;background:#e8a077;"></div>
<div style="left:419.10px;top:724.00px;width:1.00px;height:127.00px;background:#e8a077;"></div>
<div style="left:444.25px;top:724.00px;width:1.50px;height:127.00px;background:#d7936c;"></div>
<div style="left:469.90px;top:724.00px;width:1.00px;height:127.00px;background:#e8a077;"></div>
<div style="left:495.30px;top:724.00px;width:1.00px;height:127.00px;background:#e8a077;"></div>
<div style="left:520.45px;top:724.00px;width:1.50px;height:127.00px;background:#d7936c;"></div>
<div style="left:546.10px;top:724.00px;width:1.00px;height:127.00px;background:#e8a077;"></div>
<div style="left:571.50px;top:724.00px;width:1.00px;height:127.00px;background:#e8a077;"></div>
<div style="left:596.65px;top:724.00px;width:1.50px;height:127.00px;background:#d7936c;"></div>
<div style="left:622.30px;top:724.00px;width:1.00px;height:127.00px;background:#e8a077;"></div>
<div style="left:647.70px;top:724.00px;width:1.00px;height:127.00px;background:#e8a077;"></div>
<div style="left:64.00px;top:694.00px;width:609.60px;height:1.00px;background:#b97752;"></div>
<div style="left:64.00px;top:723.00px;width:609.60px;height:1.50px;background:#c88460;"></div>
<div style="left:64.00px;top:694.00px;width:1.50px;height:157.00px;background:#b97752;"></div>
<div style="left:368.05px;top:694.00px;width:1.50px;height:5.00px;background:#1e1e1e;"></div>
<div style="left:368.05px;top:846.00px;width:1.50px;height:5.00px;background:#1e1e1e;"></div>
<div style="left:69.00px;top:700.26px;font-size:18px;line-height:18px;height:18px;color:#3a2a20;font-weight:normal;white-space:nowrap;letter-spacing:-0.1px;">PERC LOOP 2.1</div>
<svg style="left:65.50px;top:694.00px;" width="608.10" height="157.00" viewBox="0 0 608.10 157.00"><g fill="#2d221c" transform="translate(-1.5,0)"><use href="#wperc20" x="0.00"/><use href="#wperc20" x="76.20"/><use href="#wperc20" x="152.40"/><use href="#wperc20" x="228.60"/><use href="#wperc20" x="304.80"/><use href="#wperc20" x="381.00"/><use href="#wperc20" x="457.20"/><use href="#wperc20" x="533.40"/></g></svg>
<div style="left:673.60px;top:694.00px;width:609.60px;height:157.00px;background:#f2a97e;"></div>
<div style="left:698.50px;top:724.00px;width:1.00px;height:127.00px;background:#e8a077;"></div>
<div style="left:723.90px;top:724.00px;width:1.00px;height:127.00px;background:#e8a077;"></div>
<div style="left:749.05px;top:724.00px;width:1.50px;height:127.00px;background:#d7936c;"></div>
<div style="left:774.70px;top:724.00px;width:1.00px;height:127.00px;background:#e8a077;"></div>
<div style="left:800.10px;top:724.00px;width:1.00px;height:127.00px;background:#e8a077;"></div>
<div style="left:825.25px;top:724.00px;width:1.50px;height:127.00px;background:#d7936c;"></div>
<div style="left:850.90px;top:724.00px;width:1.00px;height:127.00px;background:#e8a077;"></div>
<div style="left:876.30px;top:724.00px;width:1.00px;height:127.00px;background:#e8a077;"></div>
<div style="left:901.45px;top:724.00px;width:1.50px;height:127.00px;background:#d7936c;"></div>
<div style="left:927.10px;top:724.00px;width:1.00px;height:127.00px;background:#e8a077;"></div>
<div style="left:952.50px;top:724.00px;width:1.00px;height:127.00px;background:#e8a077;"></div>
<div style="left:977.65px;top:724.00px;width:1.50px;height:127.00px;background:#d7936c;"></div>
<div style="left:1003.30px;top:724.00px;width:1.00px;height:127.00px;background:#e8a077;"></div>
<div style="left:1028.70px;top:724.00px;width:1.00px;height:127.00px;background:#e8a077;"></div>
<div style="left:1053.85px;top:724.00px;width:1.50px;height:127.00px;background:#d7936c;"></div>
<div style="left:1079.50px;top:724.00px;width:1.00px;height:127.00px;background:#e8a077;"></div>
<div style="left:1104.90px;top:724.00px;width:1.00px;height:127.00px;background:#e8a077;"></div>
<div style="left:1130.05px;top:724.00px;width:1.50px;height:127.00px;background:#d7936c;"></div>
<div style="left:1155.70px;top:724.00px;width:1.00px;height:127.00px;background:#e8a077;"></div>
<div style="left:1181.10px;top:724.00px;width:1.00px;height:127.00px;background:#e8a077;"></div>
<div style="left:1206.25px;top:724.00px;width:1.50px;height:127.00px;background:#d7936c;"></div>
<div style="left:1231.90px;top:724.00px;width:1.00px;height:127.00px;background:#e8a077;"></div>
<div style="left:1257.30px;top:724.00px;width:1.00px;height:127.00px;background:#e8a077;"></div>
<div style="left:673.60px;top:694.00px;width:609.60px;height:1.00px;background:#b97752;"></div>
<div style="left:673.60px;top:723.00px;width:609.60px;height:1.50px;background:#c88460;"></div>
<div style="left:673.60px;top:694.00px;width:1.50px;height:157.00px;background:#b97752;"></div>
<div style="left:977.65px;top:694.00px;width:1.50px;height:5.00px;background:#1e1e1e;"></div>
<div style="left:977.65px;top:846.00px;width:1.50px;height:5.00px;background:#1e1e1e;"></div>
<div style="left:678.60px;top:700.26px;font-size:18px;line-height:18px;height:18px;color:#3a2a20;font-weight:normal;white-space:nowrap;letter-spacing:-0.1px;">PERC LOOP 2.2</div>
<svg style="left:675.10px;top:694.00px;" width="608.10" height="157.00" viewBox="0 0 608.10 157.00"><g fill="#2d221c" transform="translate(-1.5,0)"><use href="#wperc20" x="0.00"/><use href="#wperc20" x="76.20"/><use href="#wperc20" x="152.40"/><use href="#wperc20" x="228.60"/><use href="#wperc20" x="304.80"/><use href="#wperc20" x="381.00"/><use href="#wperc20" x="457.20"/><use href="#wperc20" x="533.40"/></g></svg>
<div style="left:1283.20px;top:694.00px;width:609.60px;height:157.00px;background:#f2a97e;"></div>
<div style="left:1308.10px;top:724.00px;width:1.00px;height:127.00px;background:#e8a077;"></div>
<div style="left:1333.50px;top:724.00px;width:1.00px;height:127.00px;background:#e8a077;"></div>
<div style="left:1358.65px;top:724.00px;width:1.50px;height:127.00px;background:#d7936c;"></div>
<div style="left:1384.30px;top:724.00px;width:1.00px;height:127.00px;background:#e8a077;"></div>
<div style="left:1409.70px;top:724.00px;width:1.00px;height:127.00px;background:#e8a077;"></div>
<div style="left:1434.85px;top:724.00px;width:1.50px;height:127.00px;background:#d7936c;"></div>
<div style="left:1460.50px;top:724.00px;width:1.00px;height:127.00px;background:#e8a077;"></div>
<div style="left:1485.90px;top:724.00px;width:1.00px;height:127.00px;background:#e8a077;"></div>
<div style="left:1511.05px;top:724.00px;width:1.50px;height:127.00px;background:#d7936c;"></div>
<div style="left:1536.70px;top:724.00px;width:1.00px;height:127.00px;background:#e8a077;"></div>
<div style="left:1562.10px;top:724.00px;width:1.00px;height:127.00px;background:#e8a077;"></div>
<div style="left:1587.25px;top:724.00px;width:1.50px;height:127.00px;background:#d7936c;"></div>
<div style="left:1612.90px;top:724.00px;width:1.00px;height:127.00px;background:#e8a077;"></div>
<div style="left:1638.30px;top:724.00px;width:1.00px;height:127.00px;background:#e8a077;"></div>
<div style="left:1663.45px;top:724.00px;width:1.50px;height:127.00px;background:#d7936c;"></div>
<div style="left:1689.10px;top:724.00px;width:1.00px;height:127.00px;background:#e8a077;"></div>
<div style="left:1714.50px;top:724.00px;width:1.00px;height:127.00px;background:#e8a077;"></div>
<div style="left:1739.65px;top:724.00px;width:1.50px;height:127.00px;background:#d7936c;"></div>
<div style="left:1765.30px;top:724.00px;width:1.00px;height:127.00px;background:#e8a077;"></div>
<div style="left:1790.70px;top:724.00px;width:1.00px;height:127.00px;background:#e8a077;"></div>
<div style="left:1815.85px;top:724.00px;width:1.50px;height:127.00px;background:#d7936c;"></div>
<div style="left:1841.50px;top:724.00px;width:1.00px;height:127.00px;background:#e8a077;"></div>
<div style="left:1866.90px;top:724.00px;width:1.00px;height:127.00px;background:#e8a077;"></div>
<div style="left:1283.20px;top:694.00px;width:609.60px;height:1.00px;background:#b97752;"></div>
<div style="left:1283.20px;top:723.00px;width:609.60px;height:1.50px;background:#c88460;"></div>
<div style="left:1283.20px;top:694.00px;width:1.50px;height:157.00px;background:#b97752;"></div>
<div style="left:1587.25px;top:694.00px;width:1.50px;height:5.00px;background:#1e1e1e;"></div>
<div style="left:1587.25px;top:846.00px;width:1.50px;height:5.00px;background:#1e1e1e;"></div>
<div style="left:1288.20px;top:700.26px;font-size:18px;line-height:18px;height:18px;color:#3a2a20;font-weight:normal;white-space:nowrap;letter-spacing:-0.1px;">PERC LOOP 2.2</div>
<svg style="left:1284.70px;top:694.00px;" width="608.10" height="157.00" viewBox="0 0 608.10 157.00"><g fill="#2d221c" transform="translate(-1.5,0)"><use href="#wperc20" x="0.00"/><use href="#wperc20" x="76.20"/><use href="#wperc20" x="152.40"/><use href="#wperc20" x="228.60"/><use href="#wperc20" x="304.80"/><use href="#wperc20" x="381.00"/><use href="#wperc20" x="457.20"/><use href="#wperc20" x="533.40"/></g></svg>
<div style="left:1283.20px;top:855.00px;width:609.60px;height:157.00px;background:#e8732e;"></div>
<div style="left:1308.10px;top:885.00px;width:1.00px;height:127.00px;background:#dd6c2b;"></div>
<div style="left:1333.50px;top:885.00px;width:1.00px;height:127.00px;background:#dd6c2b;"></div>
<div style="left:1358.65px;top:885.00px;width:1.50px;height:127.00px;background:#c96426;"></div>
<div style="left:1384.30px;top:885.00px;width:1.00px;height:127.00px;background:#dd6c2b;"></div>
<div style="left:1409.70px;top:885.00px;width:1.00px;height:127.00px;background:#dd6c2b;"></div>
<div style="left:1434.85px;top:885.00px;width:1.50px;height:127.00px;background:#c96426;"></div>
<div style="left:1460.50px;top:885.00px;width:1.00px;height:127.00px;background:#dd6c2b;"></div>
<div style="left:1485.90px;top:885.00px;width:1.00px;height:127.00px;background:#dd6c2b;"></div>
<div style="left:1511.05px;top:885.00px;width:1.50px;height:127.00px;background:#c96426;"></div>
<div style="left:1536.70px;top:885.00px;width:1.00px;height:127.00px;background:#dd6c2b;"></div>
<div style="left:1562.10px;top:885.00px;width:1.00px;height:127.00px;background:#dd6c2b;"></div>
<div style="left:1587.25px;top:885.00px;width:1.50px;height:127.00px;background:#c96426;"></div>
<div style="left:1612.90px;top:885.00px;width:1.00px;height:127.00px;background:#dd6c2b;"></div>
<div style="left:1638.30px;top:885.00px;width:1.00px;height:127.00px;background:#dd6c2b;"></div>
<div style="left:1663.45px;top:885.00px;width:1.50px;height:127.00px;background:#c96426;"></div>
<div style="left:1689.10px;top:885.00px;width:1.00px;height:127.00px;background:#dd6c2b;"></div>
<div style="left:1714.50px;top:885.00px;width:1.00px;height:127.00px;background:#dd6c2b;"></div>
<div style="left:1739.65px;top:885.00px;width:1.50px;height:127.00px;background:#c96426;"></div>
<div style="left:1765.30px;top:885.00px;width:1.00px;height:127.00px;background:#dd6c2b;"></div>
<div style="left:1790.70px;top:885.00px;width:1.00px;height:127.00px;background:#dd6c2b;"></div>
<div style="left:1815.85px;top:885.00px;width:1.50px;height:127.00px;background:#c96426;"></div>
<div style="left:1841.50px;top:885.00px;width:1.00px;height:127.00px;background:#dd6c2b;"></div>
<div style="left:1866.90px;top:885.00px;width:1.00px;height:127.00px;background:#dd6c2b;"></div>
<div style="left:1283.20px;top:855.00px;width:609.60px;height:1.00px;background:#a85020;"></div>
<div style="left:1283.20px;top:884.00px;width:609.60px;height:1.50px;background:#b55823;"></div>
<div style="left:1283.20px;top:855.00px;width:1.50px;height:157.00px;background:#a85020;"></div>
<div style="left:1587.25px;top:855.00px;width:1.50px;height:5.00px;background:#1e1e1e;"></div>
<div style="left:1587.25px;top:1007.00px;width:1.50px;height:5.00px;background:#1e1e1e;"></div>
<div style="left:1288.20px;top:861.26px;font-size:18px;line-height:18px;height:18px;color:#2a190f;font-weight:normal;white-space:nowrap;letter-spacing:0px;">RIDE</div>
<svg style="left:1284.70px;top:855.00px;" width="608.10" height="157.00" viewBox="0 0 608.10 157.00"><g fill="#2e1d13" transform="translate(-1.5,0)"><use href="#wride0" x="0.00"/><use href="#wride0" x="76.20"/><use href="#wride0" x="152.40"/><use href="#wride0" x="228.60"/><use href="#wride0" x="304.80"/><use href="#wride0" x="381.00"/><use href="#wride0" x="457.20"/><use href="#wride0" x="533.40"/></g></svg>
<div style="left:64.00px;top:211.00px;width:2.00px;height:157.00px;background:#c9ecff;"></div>
<div style="left:893.00px;top:1231.76px;font-size:18px;line-height:18px;height:18px;color:#e6e6e6;font-weight:bold;white-space:nowrap;letter-spacing:0.16px;">Drop Files and Devices Here</div>
<div style="left:1890.50px;top:1468.11px;font-size:30px;line-height:30px;height:30px;color:#4c4c4c;font-weight:bold;white-space:nowrap;">1</div>
<div style="left:1928.50px;top:1468.11px;font-size:30px;line-height:30px;height:30px;color:#4c4c4c;font-weight:bold;white-space:nowrap;">2</div>
<div style="left:1947.50px;top:1468.11px;font-size:30px;line-height:30px;height:30px;color:#4c4c4c;font-weight:bold;white-space:nowrap;">T</div>
<svg style="left:1910.00px;top:1469.00px;" width="16.00" height="27.00" viewBox="0 0 16.00 27.00"><path d="M3.2 24.5L12.8 2.5" stroke="#4c4c4c" stroke-width="3.6"/></svg>
<div style="left:63.50px;top:1500.00px;width:1.50px;height:15.00px;background:#9a9a9a;"></div>
<div style="left:63.50px;top:1513.50px;width:4.00px;height:1.50px;background:#9a9a9a;"></div>
<div style="left:69.00px;top:1505.06px;font-size:18px;line-height:18px;height:18px;color:#cfcfcf;font-weight:normal;white-space:nowrap;">0:00</div>
<div style="left:105.73px;top:1500.00px;width:1.50px;height:4.00px;background:#9a9a9a;"></div>
<div style="left:147.95px;top:1500.00px;width:1.50px;height:4.00px;background:#9a9a9a;"></div>
<div style="left:190.18px;top:1500.00px;width:1.50px;height:4.00px;background:#9a9a9a;"></div>
<div style="left:232.41px;top:1500.00px;width:1.50px;height:4.00px;background:#9a9a9a;"></div>
<div style="left:274.64px;top:1500.00px;width:1.50px;height:15.00px;background:#9a9a9a;"></div>
<div style="left:274.64px;top:1513.50px;width:4.00px;height:1.50px;background:#9a9a9a;"></div>
<div style="left:280.14px;top:1505.06px;font-size:18px;line-height:18px;height:18px;color:#cfcfcf;font-weight:normal;white-space:nowrap;">0:05</div>
<div style="left:316.87px;top:1500.00px;width:1.50px;height:4.00px;background:#9a9a9a;"></div>
<div style="left:359.09px;top:1500.00px;width:1.50px;height:4.00px;background:#9a9a9a;"></div>
<div style="left:401.32px;top:1500.00px;width:1.50px;height:4.00px;background:#9a9a9a;"></div>
<div style="left:443.55px;top:1500.00px;width:1.50px;height:4.00px;background:#9a9a9a;"></div>
<div style="left:485.77px;top:1500.00px;width:1.50px;height:15.00px;background:#9a9a9a;"></div>
<div style="left:485.77px;top:1513.50px;width:4.00px;height:1.50px;background:#9a9a9a;"></div>
<div style="left:491.27px;top:1505.06px;font-size:18px;line-height:18px;height:18px;color:#cfcfcf;font-weight:normal;white-space:nowrap;">0:10</div>
<div style="left:528.00px;top:1500.00px;width:1.50px;height:4.00px;background:#9a9a9a;"></div>
<div style="left:570.23px;top:1500.00px;width:1.50px;height:4.00px;background:#9a9a9a;"></div>
<div style="left:612.46px;top:1500.00px;width:1.50px;height:4.00px;background:#9a9a9a;"></div>
<div style="left:654.68px;top:1500.00px;width:1.50px;height:4.00px;background:#9a9a9a;"></div>
<div style="left:696.91px;top:1500.00px;width:1.50px;height:15.00px;background:#9a9a9a;"></div>
<div style="left:696.91px;top:1513.50px;width:4.00px;height:1.50px;background:#9a9a9a;"></div>
<div style="left:702.41px;top:1505.06px;font-size:18px;line-height:18px;height:18px;color:#cfcfcf;font-weight:normal;white-space:nowrap;">0:15</div>
<div style="left:739.14px;top:1500.00px;width:1.50px;height:4.00px;background:#9a9a9a;"></div>
<div style="left:781.37px;top:1500.00px;width:1.50px;height:4.00px;background:#9a9a9a;"></div>
<div style="left:823.60px;top:1500.00px;width:1.50px;height:4.00px;background:#9a9a9a;"></div>
<div style="left:865.82px;top:1500.00px;width:1.50px;height:4.00px;background:#9a9a9a;"></div>
<div style="left:908.05px;top:1500.00px;width:1.50px;height:15.00px;background:#9a9a9a;"></div>
<div style="left:908.05px;top:1513.50px;width:4.00px;height:1.50px;background:#9a9a9a;"></div>
<div style="left:913.55px;top:1505.06px;font-size:18px;line-height:18px;height:18px;color:#cfcfcf;font-weight:normal;white-space:nowrap;">0:20</div>
<div style="left:950.28px;top:1500.00px;width:1.50px;height:4.00px;background:#9a9a9a;"></div>
<div style="left:992.50px;top:1500.00px;width:1.50px;height:4.00px;background:#9a9a9a;"></div>
<div style="left:1034.73px;top:1500.00px;width:1.50px;height:4.00px;background:#9a9a9a;"></div>
<div style="left:1076.96px;top:1500.00px;width:1.50px;height:4.00px;background:#9a9a9a;"></div>
<div style="left:1119.19px;top:1500.00px;width:1.50px;height:15.00px;background:#9a9a9a;"></div>
<div style="left:1119.19px;top:1513.50px;width:4.00px;height:1.50px;background:#9a9a9a;"></div>
<div style="left:1124.69px;top:1505.06px;font-size:18px;line-height:18px;height:18px;color:#cfcfcf;font-weight:normal;white-space:nowrap;">0:25</div>
<div style="left:1161.41px;top:1500.00px;width:1.50px;height:4.00px;background:#9a9a9a;"></div>
<div style="left:1203.64px;top:1500.00px;width:1.50px;height:4.00px;background:#9a9a9a;"></div>
<div style="left:1245.87px;top:1500.00px;width:1.50px;height:4.00px;background:#9a9a9a;"></div>
<div style="left:1288.10px;top:1500.00px;width:1.50px;height:4.00px;background:#9a9a9a;"></div>
<div style="left:1330.33px;top:1500.00px;width:1.50px;height:15.00px;background:#9a9a9a;"></div>
<div style="left:1330.33px;top:1513.50px;width:4.00px;height:1.50px;background:#9a9a9a;"></div>
<div style="left:1335.83px;top:1505.06px;font-size:18px;line-height:18px;height:18px;color:#cfcfcf;font-weight:normal;white-space:nowrap;">0:30</div>
<div style="left:1372.55px;top:1500.00px;width:1.50px;height:4.00px;background:#9a9a9a;"></div>
<div style="left:1414.78px;top:1500.00px;width:1.50px;height:4.00px;background:#9a9a9a;"></div>
<div style="left:1457.01px;top:1500.00px;width:1.50px;height:4.00px;background:#9a9a9a;"></div>
<div style="left:1499.23px;top:1500.00px;width:1.50px;height:4.00px;background:#9a9a9a;"></div>
<div style="left:1541.46px;top:1500.00px;width:1.50px;height:15.00px;background:#9a9a9a;"></div>
<div style="left:1541.46px;top:1513.50px;width:4.00px;height:1.50px;background:#9a9a9a;"></div>
<div style="left:1546.96px;top:1505.06px;font-size:18px;line-height:18px;height:18px;color:#cfcfcf;font-weight:normal;white-space:nowrap;">0:35</div>
<div style="left:1583.69px;top:1500.00px;width:1.50px;height:4.00px;background:#9a9a9a;"></div>
<div style="left:1625.92px;top:1500.00px;width:1.50px;height:4.00px;background:#9a9a9a;"></div>
<div style="left:1668.14px;top:1500.00px;width:1.50px;height:4.00px;background:#9a9a9a;"></div>
<div style="left:1710.37px;top:1500.00px;width:1.50px;height:4.00px;background:#9a9a9a;"></div>
<div style="left:1752.60px;top:1500.00px;width:1.50px;height:15.00px;background:#9a9a9a;"></div>
<div style="left:1752.60px;top:1513.50px;width:4.00px;height:1.50px;background:#9a9a9a;"></div>
<div style="left:1758.10px;top:1505.06px;font-size:18px;line-height:18px;height:18px;color:#cfcfcf;font-weight:normal;white-space:nowrap;">0:40</div>
<div style="left:1794.83px;top:1500.00px;width:1.50px;height:4.00px;background:#9a9a9a;"></div>
<div style="left:1837.06px;top:1500.00px;width:1.50px;height:4.00px;background:#9a9a9a;"></div>
<div style="left:1879.28px;top:1500.00px;width:1.50px;height:4.00px;background:#9a9a9a;"></div>
<div style="left:1921.51px;top:1500.00px;width:1.50px;height:4.00px;background:#9a9a9a;"></div>
<div style="left:1963.74px;top:1500.00px;width:1.50px;height:6.00px;background:#9a9a9a;"></div>
<svg style="left:64.00px;top:1500.00px;" width="8.00" height="8.00" viewBox="0 0 8.00 8.00"><path d="M0 0H2L7.5 7.5H0z" fill="#7fd6ff"/></svg>
<div style="left:1978.00px;top:152.40px;width:51.00px;height:19.60px;background:#4a4a4a;border-radius:10px;"></div>
<div style="left:1986.00px;top:153.36px;font-size:18px;line-height:18px;height:18px;color:#ececec;font-weight:bold;white-space:nowrap;">Set</div>
<svg style="left:1977.00px;top:179.00px;" width="53.00" height="22.00" viewBox="0 0 53.00 22.00"><circle cx="11" cy="11" r="10.3" fill="#474747"/><path d="M5 11h11M10.5 5.5L5 11l5.5 5.5" fill="none" stroke="#7a7a7a" stroke-width="2.6"/><circle cx="42" cy="11" r="10.3" fill="#474747"/><path d="M47 11H36M41.5 5.5L47 11l-5.5 5.5" fill="none" stroke="#f2f2f2" stroke-width="2.6"/></svg>
<div style="left:2052.00px;top:180.00px;width:39.00px;height:19.50px;background:#4a4a4a;"></div>
<svg style="left:2052.00px;top:180.00px;" width="39.00" height="19.50" viewBox="0 0 39.00 19.50"><path d="M16 14L23 6" stroke="#f0f0f0" stroke-width="2"/><circle cx="15.5" cy="14.5" r="2.6" fill="#f0f0f0"/><circle cx="23.5" cy="5.5" r="2.6" fill="#f0f0f0"/></svg>
<div style="left:2102.00px;top:180.00px;width:38.00px;height:19.50px;background:#4a4a4a;"></div>
<svg style="left:2102.00px;top:180.00px;" width="38.00" height="19.50" viewBox="0 0 38.00 19.50"><path d="M14.5 9.5v-2.5a4.5 4.5 0 0 1 9 0v2.5" fill="none" stroke="#f0f0f0" stroke-width="2"/><rect x="12.5" y="9" width="13" height="8" fill="#f0f0f0"/></svg>
<div style="left:1972.00px;top:211.00px;width:170.50px;height:157.00px;background:#1c3291;"></div>
<svg style="left:1976.00px;top:214.00px;" width="28.00" height="26.00" viewBox="0 0 28.00 26.00"><circle cx="13.6" cy="12" r="11" fill="none" stroke="#b4bde8" stroke-width="2"/><path d="M7.9 9.5H19.8L13.85 18.1z" fill="#b4bde8"/></svg>
<div style="left:2014.50px;top:216.26px;font-size:18px;line-height:18px;height:18px;color:#d7dcf5;font-weight:bold;white-space:nowrap;letter-spacing:0px;">KICK</div>
<div style="left:2142.50px;top:211.00px;width:3.50px;height:157.00px;background:#434343;"></div>
<div style="left:2282.00px;top:211.00px;width:3.00px;height:157.00px;background:#4a4a4a;"></div>
<div style="left:1972.00px;top:368.00px;width:524.00px;height:4.00px;background:#434343;"></div>
<div style="left:2146.00px;top:211.00px;width:136.00px;height:157.00px;background:#5f5f5f;"></div>
<div style="left:2150.00px;top:214.50px;width:128.00px;height:24.00px;background:#3c3c3c;border:1.5px solid #2f2f2f;"></div>
<div style="left:2153.50px;top:217.84px;font-size:18.5px;line-height:18.5px;height:18.5px;color:#f2f2f2;font-weight:normal;white-space:nowrap;letter-spacing:0.8px;">Resampling</div>
<svg style="left:2261.00px;top:221.50px;" width="13.00" height="10.00" viewBox="0 0 13.00 10.00"><path d="M0.5 0.5H12.5L6.5 9.5z" fill="#f2f2f2"/></svg>
<div style="left:2150.00px;top:245.50px;width:128.00px;height:24.00px;background:#5e5e5e;border:1.5px solid #2f2f2f;"></div>
<div style="left:2154.00px;top:249.50px;width:4.00px;height:16.00px;background:#2a2a2a;"></div>
<div style="left:2159.00px;top:249.50px;width:4.00px;height:16.00px;background:#2a2a2a;"></div>
<div style="left:2150.00px;top:276.50px;width:31.00px;height:24.00px;background:#4b4b4b;border:1.5px solid #2f2f2f;"></div>
<div style="left:2150.00px;top:276.50px;width:31.00px;height:24.00px;font-size:19px;line-height:24.00px;text-align:center;color:#f0f0f0;font-weight:normal;white-space:nowrap;letter-spacing:0.9px;text-indent:0.9px;">In</div>
<div style="left:2187.00px;top:276.50px;width:49.00px;height:24.00px;background:#4b4b4b;border:1.5px solid #2f2f2f;"></div>
<div style="left:2187.00px;top:276.50px;width:49.00px;height:24.00px;font-size:19px;line-height:24.00px;text-align:center;color:#f0f0f0;font-weight:normal;white-space:nowrap;letter-spacing:0.9px;text-indent:0.9px;">Auto</div>
<div style="left:2242.00px;top:276.50px;width:36.00px;height:24.00px;background:#f5b84e;border:1.5px solid #2f2f2f;"></div>
<div style="left:2242.00px;top:276.50px;width:36.00px;height:24.00px;font-size:19px;line-height:24.00px;text-align:center;color:#141414;font-weight:normal;white-space:nowrap;letter-spacing:0.9px;text-indent:0.9px;">Off</div>
<div style="left:2150.00px;top:307.50px;width:128.00px;height:24.00px;background:#3c3c3c;border:1.5px solid #2f2f2f;"></div>
<div style="left:2153.50px;top:310.84px;font-size:18.5px;line-height:18.5px;height:18.5px;color:#f2f2f2;font-weight:normal;white-space:nowrap;letter-spacing:0.8px;">Master</div>
<svg style="left:2261.00px;top:314.50px;" width="13.00" height="10.00" viewBox="0 0 13.00 10.00"><path d="M0.5 0.5H12.5L6.5 9.5z" fill="#f2f2f2"/></svg>
<div style="left:2150.00px;top:338.50px;width:128.00px;height:24.00px;background:#5e5e5e;border:1.5px solid #2f2f2f;"></div>
<div style="left:2285.00px;top:211.00px;width:211.00px;height:157.00px;background:#5f5f5f;"></div>
<div style="left:2291.00px;top:214.50px;width:83.50px;height:24.00px;background:#f5b84e;border:1.5px solid #2f2f2f;"></div>
<div style="left:2291.00px;top:214.50px;width:83.50px;height:24.00px;font-size:18px;line-height:24.00px;text-align:center;color:#141414;font-weight:normal;white-space:nowrap;letter-spacing:0px;text-indent:0px;">1</div>
<div style="left:2382.40px;top:214.50px;width:38.00px;height:24.00px;background:#4b4b4b;border:1.5px solid #2f2f2f;"></div>
<div style="left:2382.40px;top:214.50px;width:38.00px;height:24.00px;font-size:18px;line-height:24.00px;text-align:center;color:#f0f0f0;font-weight:normal;white-space:nowrap;letter-spacing:0px;text-indent:0px;">S</div>
<div style="left:2428.40px;top:214.50px;width:38.00px;height:24.00px;background:#4b4b4b;border:1.5px solid #2f2f2f;"></div>
<svg style="left:2428.40px;top:214.50px;" width="38.00" height="24.00" viewBox="0 0 38.00 24.00"><circle cx="19" cy="12" r="6.6" fill="#f0f0f0"/></svg>
<div style="left:2291.00px;top:245.50px;width:83.50px;height:24.00px;background:#3b3b3b;border:1.5px solid #2f2f2f;"></div>
<div style="left:2292.50px;top:247.00px;width:68.00px;height:21.00px;background:#4a6676;"></div>
<div style="left:2291px;top:245.50px;width:83.5px;height:24px;font-size:18px;line-height:24px;text-align:center;color:#f0f0f0;white-space:nowrap;">0</div>
<div style="left:2382.40px;top:245.50px;width:84.00px;height:24.00px;background:#3b3b3b;border:1.5px solid #2f2f2f;"></div>
<div style="left:2382.4px;top:245.50px;width:84px;height:24px;font-size:18px;line-height:24px;text-align:center;color:#f0f0f0;white-space:nowrap;">C</div>
<div style="left:2477.00px;top:212.50px;width:6.00px;height:154.00px;background:#2c2c2c;"></div>
<div style="left:2484.50px;top:212.50px;width:6.00px;height:154.00px;background:#2c2c2c;"></div>
<div style="left:2477.00px;top:228.00px;width:13.50px;height:1.50px;background:#555;"></div>
<div style="left:1972.00px;top:372.00px;width:170.50px;height:157.00px;background:#f2a97e;"></div>
<svg style="left:1976.00px;top:375.00px;" width="28.00" height="26.00" viewBox="0 0 28.00 26.00"><circle cx="13.6" cy="12" r="11" fill="none" stroke="#7a4a30" stroke-width="2"/><path d="M7.9 9.5H19.8L13.85 18.1z" fill="#7a4a30"/></svg>
<div style="left:2014.50px;top:377.26px;font-size:18px;line-height:18px;height:18px;color:#3a2a20;font-weight:bold;white-space:nowrap;letter-spacing:-0.4px;">SHAKER</div>
<div style="left:2142.50px;top:372.00px;width:3.50px;height:157.00px;background:#434343;"></div>
<div style="left:2282.00px;top:372.00px;width:3.00px;height:157.00px;background:#4a4a4a;"></div>
<div style="left:1972.00px;top:529.00px;width:524.00px;height:4.00px;background:#434343;"></div>
<div style="left:2146.00px;top:372.00px;width:136.00px;height:157.00px;background:#5f5f5f;"></div>
<div style="left:2150.00px;top:375.50px;width:128.00px;height:24.00px;background:#3c3c3c;border:1.5px solid #2f2f2f;"></div>
<div style="left:2153.50px;top:378.84px;font-size:18.5px;line-height:18.5px;height:18.5px;color:#f2f2f2;font-weight:normal;white-space:nowrap;letter-spacing:0.8px;">Ext. In</div>
<svg style="left:2261.00px;top:382.50px;" width="13.00" height="10.00" viewBox="0 0 13.00 10.00"><path d="M0.5 0.5H12.5L6.5 9.5z" fill="#f2f2f2"/></svg>
<div style="left:2150.00px;top:406.50px;width:128.00px;height:24.00px;background:#3c3c3c;border:1.5px solid #2f2f2f;"></div>
<div style="left:2154.00px;top:410.50px;width:4.00px;height:16.00px;background:#2a2a2a;"></div>
<div style="left:2159.00px;top:410.50px;width:4.00px;height:16.00px;background:#2a2a2a;"></div>
<div style="left:2154.00px;top:421.50px;width:4.00px;height:4.00px;background:#4fe35a;"></div>
<div style="left:2168.50px;top:409.84px;font-size:18.5px;line-height:18.5px;height:18.5px;color:#f2f2f2;font-weight:normal;white-space:nowrap;letter-spacing:0.8px;">1/2</div>
<svg style="left:2261.00px;top:413.50px;" width="13.00" height="10.00" viewBox="0 0 13.00 10.00"><path d="M0.5 0.5H12.5L6.5 9.5z" fill="#f2f2f2"/></svg>
<div style="left:2150.00px;top:437.50px;width:31.00px;height:24.00px;background:#4b4b4b;border:1.5px solid #2f2f2f;"></div>
<div style="left:2150.00px;top:437.50px;width:31.00px;height:24.00px;font-size:19px;line-height:24.00px;text-align:center;color:#f0f0f0;font-weight:normal;white-space:nowrap;letter-spacing:0.9px;text-indent:0.9px;">In</div>
<div style="left:2187.00px;top:437.50px;width:49.00px;height:24.00px;background:#f5b84e;border:1.5px solid #2f2f2f;"></div>
<div style="left:2187.00px;top:437.50px;width:49.00px;height:24.00px;font-size:19px;line-height:24.00px;text-align:center;color:#141414;font-weight:normal;white-space:nowrap;letter-spacing:0.9px;text-indent:0.9px;">Auto</div>
<div style="left:2242.00px;top:437.50px;width:36.00px;height:24.00px;background:#4b4b4b;border:1.5px solid #2f2f2f;"></div>
<div style="left:2242.00px;top:437.50px;width:36.00px;height:24.00px;font-size:19px;line-height:24.00px;text-align:center;color:#f0f0f0;font-weight:normal;white-space:nowrap;letter-spacing:0.9px;text-indent:0.9px;">Off</div>
<div style="left:2150.00px;top:468.50px;width:128.00px;height:24.00px;background:#3c3c3c;border:1.5px solid #2f2f2f;"></div>
<div style="left:2153.50px;top:471.84px;font-size:18.5px;line-height:18.5px;height:18.5px;color:#f2f2f2;font-weight:normal;white-space:nowrap;letter-spacing:0.8px;">Master</div>
<svg style="left:2261.00px;top:475.50px;" width="13.00" height="10.00" viewBox="0 0 13.00 10.00"><path d="M0.5 0.5H12.5L6.5 9.5z" fill="#f2f2f2"/></svg>
<div style="left:2150.00px;top:499.50px;width:128.00px;height:24.00px;background:#5e5e5e;border:1.5px solid #2f2f2f;"></div>
<div style="left:2285.00px;top:372.00px;width:211.00px;height:157.00px;background:#5f5f5f;"></div>
<div style="left:2291.00px;top:375.50px;width:83.50px;height:24.00px;background:#f5b84e;border:1.5px solid #2f2f2f;"></div>
<div style="left:2291.00px;top:375.50px;width:83.50px;height:24.00px;font-size:18px;line-height:24.00px;text-align:center;color:#141414;font-weight:normal;white-space:nowrap;letter-spacing:0px;text-indent:0px;">2</div>
<div style="left:2382.40px;top:375.50px;width:38.00px;height:24.00px;background:#4b4b4b;border:1.5px solid #2f2f2f;"></div>
<div style="left:2382.40px;top:375.50px;width:38.00px;height:24.00px;font-size:18px;line-height:24.00px;text-align:center;color:#f0f0f0;font-weight:normal;white-space:nowrap;letter-spacing:0px;text-indent:0px;">S</div>
<div style="left:2428.40px;top:375.50px;width:38.00px;height:24.00px;background:#4b4b4b;border:1.5px solid #2f2f2f;"></div>
<svg style="left:2428.40px;top:375.50px;" width="38.00" height="24.00" viewBox="0 0 38.00 24.00"><circle cx="19" cy="12" r="6.6" fill="#f0f0f0"/></svg>
<div style="left:2291.00px;top:406.50px;width:83.50px;height:24.00px;background:#3b3b3b;border:1.5px solid #2f2f2f;"></div>
<div style="left:2292.50px;top:408.00px;width:68.00px;height:21.00px;background:#4a6676;"></div>
<div style="left:2291px;top:406.50px;width:83.5px;height:24px;font-size:18px;line-height:24px;text-align:center;color:#f0f0f0;white-space:nowrap;">0</div>
<div style="left:2382.40px;top:406.50px;width:84.00px;height:24.00px;background:#3b3b3b;border:1.5px solid #2f2f2f;"></div>
<div style="left:2415.00px;top:408.50px;width:9.00px;height:20.00px;background:#4a6676;"></div>
<div style="left:2382.4px;top:406.50px;width:84px;height:24px;font-size:18px;line-height:24px;text-align:center;color:#f0f0f0;white-space:nowrap;">12L</div>
<div style="left:2477.00px;top:373.50px;width:6.00px;height:154.00px;background:#2c2c2c;"></div>
<div style="left:2484.50px;top:373.50px;width:6.00px;height:154.00px;background:#2c2c2c;"></div>
<div style="left:2477.00px;top:389.00px;width:13.50px;height:1.50px;background:#555;"></div>
<div style="left:1972.00px;top:533.00px;width:170.50px;height:157.00px;background:#f2a97e;"></div>
<svg style="left:1976.00px;top:536.00px;" width="28.00" height="26.00" viewBox="0 0 28.00 26.00"><circle cx="13.6" cy="12" r="11" fill="none" stroke="#7a4a30" stroke-width="2"/><path d="M7.9 9.5H19.8L13.85 18.1z" fill="#7a4a30"/></svg>
<div style="left:2014.50px;top:538.26px;font-size:18px;line-height:18px;height:18px;color:#3a2a20;font-weight:bold;white-space:nowrap;letter-spacing:-0.5px;">PERC LOOP 1</div>
<div style="left:2142.50px;top:533.00px;width:3.50px;height:157.00px;background:#434343;"></div>
<div style="left:2282.00px;top:533.00px;width:3.00px;height:157.00px;background:#4a4a4a;"></div>
<div style="left:1972.00px;top:690.00px;width:524.00px;height:4.00px;background:#434343;"></div>
<div style="left:2146.00px;top:533.00px;width:136.00px;height:157.00px;background:#5f5f5f;"></div>
<div style="left:2150.00px;top:536.50px;width:128.00px;height:24.00px;background:#3c3c3c;border:1.5px solid #2f2f2f;"></div>
<div style="left:2153.50px;top:539.84px;font-size:18.5px;line-height:18.5px;height:18.5px;color:#f2f2f2;font-weight:normal;white-space:nowrap;letter-spacing:0.8px;">Ext. In</div>
<svg style="left:2261.00px;top:543.50px;" width="13.00" height="10.00" viewBox="0 0 13.00 10.00"><path d="M0.5 0.5H12.5L6.5 9.5z" fill="#f2f2f2"/></svg>
<div style="left:2150.00px;top:567.50px;width:128.00px;height:24.00px;background:#3c3c3c;border:1.5px solid #2f2f2f;"></div>
<div style="left:2154.00px;top:571.50px;width:4.00px;height:16.00px;background:#2a2a2a;"></div>
<div style="left:2159.00px;top:571.50px;width:4.00px;height:16.00px;background:#2a2a2a;"></div>
<div style="left:2154.00px;top:582.50px;width:4.00px;height:4.00px;background:#4fe35a;"></div>
<div style="left:2168.50px;top:570.84px;font-size:18.5px;line-height:18.5px;height:18.5px;color:#f2f2f2;font-weight:normal;white-space:nowrap;letter-spacing:0.8px;">1</div>
<svg style="left:2261.00px;top:574.50px;" width="13.00" height="10.00" viewBox="0 0 13.00 10.00"><path d="M0.5 0.5H12.5L6.5 9.5z" fill="#f2f2f2"/></svg>
<div style="left:2150.00px;top:598.50px;width:31.00px;height:24.00px;background:#4b4b4b;border:1.5px solid #2f2f2f;"></div>
<div style="left:2150.00px;top:598.50px;width:31.00px;height:24.00px;font-size:19px;line-height:24.00px;text-align:center;color:#f0f0f0;font-weight:normal;white-space:nowrap;letter-spacing:0.9px;text-indent:0.9px;">In</div>
<div style="left:2187.00px;top:598.50px;width:49.00px;height:24.00px;background:#4b4b4b;border:1.5px solid #2f2f2f;"></div>
<div style="left:2187.00px;top:598.50px;width:49.00px;height:24.00px;font-size:19px;line-height:24.00px;text-align:center;color:#f0f0f0;font-weight:normal;white-space:nowrap;letter-spacing:0.9px;text-indent:0.9px;">Auto</div>
<div style="left:2242.00px;top:598.50px;width:36.00px;height:24.00px;background:#f5b84e;border:1.5px solid #2f2f2f;"></div>
<div style="left:2242.00px;top:598.50px;width:36.00px;height:24.00px;font-size:19px;line-height:24.00px;text-align:center;color:#141414;font-weight:normal;white-space:nowrap;letter-spacing:0.9px;text-indent:0.9px;">Off</div>
<div style="left:2150.00px;top:629.50px;width:128.00px;height:24.00px;background:#3c3c3c;border:1.5px solid #2f2f2f;"></div>
<div style="left:2153.50px;top:632.84px;font-size:18.5px;line-height:18.5px;height:18.5px;color:#f2f2f2;font-weight:normal;white-space:nowrap;letter-spacing:0.8px;">Master</div>
<svg style="left:2261.00px;top:636.50px;" width="13.00" height="10.00" viewBox="0 0 13.00 10.00"><path d="M0.5 0.5H12.5L6.5 9.5z" fill="#f2f2f2"/></svg>
<div style="left:2150.00px;top:660.50px;width:128.00px;height:24.00px;background:#5e5e5e;border:1.5px solid #2f2f2f;"></div>
<div style="left:2285.00px;top:533.00px;width:211.00px;height:157.00px;background:#5f5f5f;"></div>
<div style="left:2291.00px;top:536.50px;width:83.50px;height:24.00px;background:#f5b84e;border:1.5px solid #2f2f2f;"></div>
<div style="left:2291.00px;top:536.50px;width:83.50px;height:24.00px;font-size:18px;line-height:24.00px;text-align:center;color:#141414;font-weight:normal;white-space:nowrap;letter-spacing:0px;text-indent:0px;">3</div>
<div style="left:2382.40px;top:536.50px;width:38.00px;height:24.00px;background:#4b4b4b;border:1.5px solid #2f2f2f;"></div>
<div style="left:2382.40px;top:536.50px;width:38.00px;height:24.00px;font-size:18px;line-height:24.00px;text-align:center;color:#f0f0f0;font-weight:normal;white-space:nowrap;letter-spacing:0px;text-indent:0px;">S</div>
<div style="left:2428.40px;top:536.50px;width:38.00px;height:24.00px;background:#4b4b4b;border:1.5px solid #2f2f2f;"></div>
<svg style="left:2428.40px;top:536.50px;" width="38.00" height="24.00" viewBox="0 0 38.00 24.00"><circle cx="19" cy="12" r="6.6" fill="#f0f0f0"/></svg>
<div style="left:2291.00px;top:567.50px;width:83.50px;height:24.00px;background:#3b3b3b;border:1.5px solid #2f2f2f;"></div>
<div style="left:2292.50px;top:569.00px;width:68.00px;height:21.00px;background:#4a6676;"></div>
<div style="left:2291px;top:567.50px;width:83.5px;height:24px;font-size:18px;line-height:24px;text-align:center;color:#f0f0f0;white-space:nowrap;">0</div>
<div style="left:2382.40px;top:567.50px;width:84.00px;height:24.00px;background:#3b3b3b;border:1.5px solid #2f2f2f;"></div>
<div style="left:2382.4px;top:567.50px;width:84px;height:24px;font-size:18px;line-height:24px;text-align:center;color:#f0f0f0;white-space:nowrap;">C</div>
<div style="left:2477.00px;top:534.50px;width:6.00px;height:154.00px;background:#2c2c2c;"></div>
<div style="left:2484.50px;top:534.50px;width:6.00px;height:154.00px;background:#2c2c2c;"></div>
<div style="left:2477.00px;top:550.00px;width:13.50px;height:1.50px;background:#555;"></div>
<div style="left:1972.00px;top:694.00px;width:170.50px;height:157.00px;background:#f2a97e;"></div>
<svg style="left:1976.00px;top:697.00px;" width="28.00" height="26.00" viewBox="0 0 28.00 26.00"><circle cx="13.6" cy="12" r="11" fill="none" stroke="#7a4a30" stroke-width="2"/><path d="M7.9 9.5H19.8L13.85 18.1z" fill="#7a4a30"/></svg>
<div style="left:2014.50px;top:699.26px;font-size:18px;line-height:18px;height:18px;color:#3a2a20;font-weight:bold;white-space:nowrap;letter-spacing:-0.5px;">PERC LOOP 2</div>
<div style="left:2142.50px;top:694.00px;width:3.50px;height:157.00px;background:#434343;"></div>
<div style="left:2282.00px;top:694.00px;width:3.00px;height:157.00px;background:#4a4a4a;"></div>
<div style="left:1972.00px;top:851.00px;width:524.00px;height:4.00px;background:#434343;"></div>
<div style="left:2146.00px;top:694.00px;width:136.00px;height:157.00px;background:#5f5f5f;"></div>
<div style="left:2150.00px;top:697.50px;width:128.00px;height:24.00px;background:#3c3c3c;border:1.5px solid #2f2f2f;"></div>
<div style="left:2153.50px;top:700.84px;font-size:18.5px;line-height:18.5px;height:18.5px;color:#f2f2f2;font-weight:normal;white-space:nowrap;letter-spacing:0.8px;">No Input</div>
<svg style="left:2261.00px;top:704.50px;" width="13.00" height="10.00" viewBox="0 0 13.00 10.00"><path d="M0.5 0.5H12.5L6.5 9.5z" fill="#f2f2f2"/></svg>
<div style="left:2150.00px;top:728.50px;width:128.00px;height:24.00px;background:#5e5e5e;border:1.5px solid #2f2f2f;"></div>
<div style="left:2150.00px;top:790.50px;width:128.00px;height:24.00px;background:#3c3c3c;border:1.5px solid #2f2f2f;"></div>
<div style="left:2153.50px;top:793.84px;font-size:18.5px;line-height:18.5px;height:18.5px;color:#f2f2f2;font-weight:normal;white-space:nowrap;letter-spacing:0.8px;">Master</div>
<svg style="left:2261.00px;top:797.50px;" width="13.00" height="10.00" viewBox="0 0 13.00 10.00"><path d="M0.5 0.5H12.5L6.5 9.5z" fill="#f2f2f2"/></svg>
<div style="left:2150.00px;top:821.50px;width:128.00px;height:24.00px;background:#5e5e5e;border:1.5px solid #2f2f2f;"></div>
<div style="left:2285.00px;top:694.00px;width:211.00px;height:157.00px;background:#5f5f5f;"></div>
<div style="left:2291.00px;top:697.50px;width:83.50px;height:24.00px;background:#f5b84e;border:1.5px solid #2f2f2f;"></div>
<div style="left:2291.00px;top:697.50px;width:83.50px;height:24.00px;font-size:18px;line-height:24.00px;text-align:center;color:#141414;font-weight:normal;white-space:nowrap;letter-spacing:0px;text-indent:0px;">4</div>
<div style="left:2382.40px;top:697.50px;width:38.00px;height:24.00px;background:#4b4b4b;border:1.5px solid #2f2f2f;"></div>
<div style="left:2382.40px;top:697.50px;width:38.00px;height:24.00px;font-size:18px;line-height:24.00px;text-align:center;color:#f0f0f0;font-weight:normal;white-space:nowrap;letter-spacing:0px;text-indent:0px;">S</div>
<div style="left:2291.00px;top:728.50px;width:83.50px;height:24.00px;background:#3b3b3b;border:1.5px solid #2f2f2f;"></div>
<div style="left:2292.50px;top:730.00px;width:68.00px;height:21.00px;background:#4a6676;"></div>
<div style="left:2291px;top:728.50px;width:83.5px;height:24px;font-size:18px;line-height:24px;text-align:center;color:#f0f0f0;white-space:nowrap;">0</div>
<div style="left:2382.40px;top:728.50px;width:84.00px;height:24.00px;background:#3b3b3b;border:1.5px solid #2f2f2f;"></div>
<div style="left:2382.4px;top:728.50px;width:84px;height:24px;font-size:18px;line-height:24px;text-align:center;color:#f0f0f0;white-space:nowrap;">C</div>
<div style="left:2477.00px;top:695.50px;width:6.00px;height:154.00px;background:#2c2c2c;"></div>
<div style="left:2484.50px;top:695.50px;width:6.00px;height:154.00px;background:#2c2c2c;"></div>
<div style="left:2477.00px;top:711.00px;width:13.50px;height:1.50px;background:#555;"></div>
<div style="left:1972.00px;top:855.00px;width:170.50px;height:157.00px;background:#e8732e;"></div>
<svg style="left:1976.00px;top:858.00px;" width="28.00" height="26.00" viewBox="0 0 28.00 26.00"><circle cx="13.6" cy="12" r="11" fill="none" stroke="#5a2a10" stroke-width="2"/><path d="M7.9 9.5H19.8L13.85 18.1z" fill="#5a2a10"/></svg>
<div style="left:2014.50px;top:860.26px;font-size:18px;line-height:18px;height:18px;color:#2a190f;font-weight:bold;white-space:nowrap;letter-spacing:0px;">RIDE</div>
<div style="left:2142.50px;top:855.00px;width:3.50px;height:157.00px;background:#434343;"></div>
<div style="left:2282.00px;top:855.00px;width:3.00px;height:157.00px;background:#4a4a4a;"></div>
<div style="left:1972.00px;top:1012.00px;width:524.00px;height:4.00px;background:#434343;"></div>
<div style="left:2146.00px;top:855.00px;width:136.00px;height:157.00px;background:#5f5f5f;"></div>
<div style="left:2150.00px;top:858.50px;width:128.00px;height:24.00px;background:#3c3c3c;border:1.5px solid #2f2f2f;"></div>
<div style="left:2153.50px;top:861.84px;font-size:18.5px;line-height:18.5px;height:18.5px;color:#f2f2f2;font-weight:normal;white-space:nowrap;letter-spacing:0.8px;">Ext. In</div>
<svg style="left:2261.00px;top:865.50px;" width="13.00" height="10.00" viewBox="0 0 13.00 10.00"><path d="M0.5 0.5H12.5L6.5 9.5z" fill="#f2f2f2"/></svg>
<div style="left:2150.00px;top:889.50px;width:128.00px;height:24.00px;background:#3c3c3c;border:1.5px solid #2f2f2f;"></div>
<div style="left:2154.00px;top:893.50px;width:4.00px;height:16.00px;background:#2a2a2a;"></div>
<div style="left:2159.00px;top:893.50px;width:4.00px;height:16.00px;background:#2a2a2a;"></div>
<div style="left:2154.00px;top:904.50px;width:4.00px;height:4.00px;background:#4fe35a;"></div>
<div style="left:2168.50px;top:892.84px;font-size:18.5px;line-height:18.5px;height:18.5px;color:#f2f2f2;font-weight:normal;white-space:nowrap;letter-spacing:0.8px;">1</div>
<svg style="left:2261.00px;top:896.50px;" width="13.00" height="10.00" viewBox="0 0 13.00 10.00"><path d="M0.5 0.5H12.5L6.5 9.5z" fill="#f2f2f2"/></svg>
<div style="left:2150.00px;top:920.50px;width:31.00px;height:24.00px;background:#4b4b4b;border:1.5px solid #2f2f2f;"></div>
<div style="left:2150.00px;top:920.50px;width:31.00px;height:24.00px;font-size:19px;line-height:24.00px;text-align:center;color:#f0f0f0;font-weight:normal;white-space:nowrap;letter-spacing:0.9px;text-indent:0.9px;">In</div>
<div style="left:2187.00px;top:920.50px;width:49.00px;height:24.00px;background:#4b4b4b;border:1.5px solid #2f2f2f;"></div>
<div style="left:2187.00px;top:920.50px;width:49.00px;height:24.00px;font-size:19px;line-height:24.00px;text-align:center;color:#f0f0f0;font-weight:normal;white-space:nowrap;letter-spacing:0.9px;text-indent:0.9px;">Auto</div>
<div style="left:2242.00px;top:920.50px;width:36.00px;height:24.00px;background:#f5b84e;border:1.5px solid #2f2f2f;"></div>
<div style="left:2242.00px;top:920.50px;width:36.00px;height:24.00px;font-size:19px;line-height:24.00px;text-align:center;color:#141414;font-weight:normal;white-space:nowrap;letter-spacing:0.9px;text-indent:0.9px;">Off</div>
<div style="left:2150.00px;top:951.50px;width:128.00px;height:24.00px;background:#3c3c3c;border:1.5px solid #2f2f2f;"></div>
<div style="left:2153.50px;top:954.84px;font-size:18.5px;line-height:18.5px;height:18.5px;color:#f2f2f2;font-weight:normal;white-space:nowrap;letter-spacing:0.8px;">Master</div>
<svg style="left:2261.00px;top:958.50px;" width="13.00" height="10.00" viewBox="0 0 13.00 10.00"><path d="M0.5 0.5H12.5L6.5 9.5z" fill="#f2f2f2"/></svg>
<div style="left:2150.00px;top:982.50px;width:128.00px;height:24.00px;background:#5e5e5e;border:1.5px solid #2f2f2f;"></div>
<div style="left:2285.00px;top:855.00px;width:211.00px;height:157.00px;background:#5f5f5f;"></div>
<div style="left:2291.00px;top:858.50px;width:83.50px;height:24.00px;background:#f5b84e;border:1.5px solid #2f2f2f;"></div>
<div style="left:2291.00px;top:858.50px;width:83.50px;height:24.00px;font-size:18px;line-height:24.00px;text-align:center;color:#141414;font-weight:normal;white-space:nowrap;letter-spacing:0px;text-indent:0px;">5</div>
<div style="left:2382.40px;top:858.50px;width:38.00px;height:24.00px;background:#4b4b4b;border:1.5px solid #2f2f2f;"></div>
<div style="left:2382.40px;top:858.50px;width:38.00px;height:24.00px;font-size:18px;line-height:24.00px;text-align:center;color:#f0f0f0;font-weight:normal;white-space:nowrap;letter-spacing:0px;text-indent:0px;">S</div>
<div style="left:2428.40px;top:858.50px;width:38.00px;height:24.00px;background:#4b4b4b;border:1.5px solid #2f2f2f;"></div>
<svg style="left:2428.40px;top:858.50px;" width="38.00" height="24.00" viewBox="0 0 38.00 24.00"><circle cx="19" cy="12" r="6.6" fill="#f0f0f0"/></svg>
<div style="left:2291.00px;top:889.50px;width:83.50px;height:24.00px;background:#3b3b3b;border:1.5px solid #2f2f2f;"></div>
<div style="left:2292.50px;top:891.00px;width:68.00px;height:21.00px;background:#4a6676;"></div>
<div style="left:2291px;top:889.50px;width:83.5px;height:24px;font-size:18px;line-height:24px;text-align:center;color:#f0f0f0;white-space:nowrap;">0</div>
<div style="left:2382.40px;top:889.50px;width:84.00px;height:24.00px;background:#3b3b3b;border:1.5px solid #2f2f2f;"></div>
<div style="left:2382.4px;top:889.50px;width:84px;height:24px;font-size:18px;line-height:24px;text-align:center;color:#f0f0f0;white-space:nowrap;">C</div>
<div style="left:2477.00px;top:856.50px;width:6.00px;height:154.00px;background:#2c2c2c;"></div>
<div style="left:2484.50px;top:856.50px;width:6.00px;height:154.00px;background:#2c2c2c;"></div>
<div style="left:2477.00px;top:872.00px;width:13.50px;height:1.50px;background:#555;"></div>
<div style="left:1972.00px;top:1016.00px;width:524.00px;height:447.00px;background:#606060;"></div>
<div style="left:1972.00px;top:1468.00px;width:170.50px;height:31.50px;background:#7d7d7d;"></div>
<div style="left:2142.50px;top:1468.00px;width:3.50px;height:31.50px;background:#4c4c4c;"></div>
<div style="left:2146.00px;top:1468.00px;width:136.00px;height:31.50px;background:#7a7a7a;"></div>
<div style="left:2282.00px;top:1468.00px;width:3.00px;height:31.50px;background:#505050;"></div>
<div style="left:2285.00px;top:1468.00px;width:211.00px;height:31.50px;background:#7a7a7a;"></div>
<svg style="left:1976.00px;top:1471.00px;" width="28.00" height="26.00" viewBox="0 0 28.00 26.00"><circle cx="13.6" cy="13" r="11" fill="none" stroke="#3a3a3a" stroke-width="2"/><path d="M10.5 7.5V18.5L19 13z" fill="#3a3a3a"/></svg>
<div style="left:2018.50px;top:1473.16px;font-size:18px;line-height:18px;height:18px;color:#262626;font-weight:bold;white-space:nowrap;letter-spacing:0.7px;">Master</div>
<div style="left:2150.00px;top:1472.00px;width:128.00px;height:24.00px;background:#3c3c3c;border:1.5px solid #2f2f2f;"></div>
<div style="left:2154.00px;top:1476.00px;width:4.00px;height:16.00px;background:#2a2a2a;"></div>
<div style="left:2159.00px;top:1476.00px;width:4.00px;height:16.00px;background:#2a2a2a;"></div>
<div style="left:2168.50px;top:1475.34px;font-size:18.5px;line-height:18.5px;height:18.5px;color:#f2f2f2;font-weight:normal;white-space:nowrap;letter-spacing:0.8px;">1/2</div>
<svg style="left:2261.00px;top:1479.00px;" width="13.00" height="10.00" viewBox="0 0 13.00 10.00"><path d="M0.5 0.5H12.5L6.5 9.5z" fill="#f2f2f2"/></svg>
<div style="left:2291.00px;top:1472.00px;width:83.50px;height:24.00px;background:#3b3b3b;border:1.5px solid #2f2f2f;"></div>
<div style="left:2292.50px;top:1473.50px;width:68.00px;height:21.00px;background:#4a6676;"></div>
<div style="left:2291px;top:1472px;width:83.5px;height:24px;font-size:18px;line-height:24px;text-align:center;color:#f0f0f0;">0</div>
<div style="left:2382.40px;top:1472.00px;width:84.00px;height:24.00px;background:#3b3b3b;border:1.5px solid #2f2f2f;"></div>
<div style="left:2383.90px;top:1473.50px;width:77.00px;height:21.00px;background:#5a94e2;"></div>
<div style="left:2382.4px;top:1472px;width:84px;height:24px;font-size:18px;line-height:24px;text-align:center;color:#f4f8ff;">3.8</div>
<div style="left:2477.00px;top:1470.00px;width:6.00px;height:28.00px;background:#2c2c2c;"></div>
<div style="left:2484.50px;top:1470.00px;width:6.00px;height:28.00px;background:#2c2c2c;"></div>
<div style="left:2508.40px;top:1354.30px;width:24.4px;height:24.4px;border-radius:50%;background:#f2b64a;color:#2e2e2e;font-size:12px;line-height:24.4px;text-align:center;font-weight:bold;">I·O</div>
<div style="left:2508.40px;top:1389.40px;width:24.4px;height:24.4px;border-radius:50%;background:#ececec;color:#333;font-size:13px;line-height:24.4px;text-align:center;font-weight:bold;">R</div>
<div style="left:2508.40px;top:1424.30px;width:24.4px;height:24.4px;border-radius:50%;background:#f2b64a;color:#2e2e2e;font-size:13px;line-height:24.4px;text-align:center;font-weight:bold;">M</div>
<div style="left:2508.40px;top:1458.80px;width:24.4px;height:24.4px;border-radius:50%;background:#9b9b9b;color:#333;font-size:13px;line-height:24.4px;text-align:center;font-weight:bold;">D</div>
<svg style="left:14.00px;top:1495.00px;" width="36.00" height="36.00" viewBox="0 0 36.00 36.00"><circle cx="18" cy="18" r="17.2" fill="#4a4a4a"/><path d="M8 14c3-3 6-3 10 0s7 3 10 0M8 22c3-3 6-3 10 0s7 3 10 0" fill="none" stroke="#5e5e5e" stroke-width="2"/></svg>
<svg style="left:14.00px;top:1547.00px;" width="36.00" height="36.00" viewBox="0 0 36.00 36.00"><circle cx="18" cy="17.5" r="17.2" fill="#4a4a4a"/><path d="M12 9.5V25.5L26 17.5z" fill="#5e5e5e"/></svg>
<div style="left:63.00px;top:1545.50px;width:1942.00px;height:40.00px;background:#474747;border-radius:6px;"></div>
<div style="left:68.00px;top:1550.00px;width:1932.00px;height:31.00px;background:linear-gradient(90deg,#5f5f5f,#666666);"></div>
<div style="left:2020.00px;top:1545.50px;width:376.00px;height:40.00px;background:#474747;border-radius:6px;"></div>
<div style="left:2025.00px;top:1550.50px;width:367.00px;height:30.50px;background:#7a7a7a;"></div>
<svg style="left:2025.00px;top:1550.50px;" width="367.00" height="30.50" viewBox="0 0 367.00 30.50"><path d="M2 8.5H365" stroke="#1f1f1f" stroke-width="2.8"/><ellipse cx="5.0" cy="8.5" rx="4" ry="3.4" fill="#1f1f1f"/><ellipse cx="27.9" cy="8.5" rx="4" ry="3.4" fill="#1f1f1f"/><ellipse cx="50.8" cy="8.5" rx="4" ry="3.4" fill="#1f1f1f"/><ellipse cx="73.7" cy="8.5" rx="4" ry="3.4" fill="#1f1f1f"/><ellipse cx="96.6" cy="8.5" rx="4" ry="3.4" fill="#1f1f1f"/><ellipse cx="119.5" cy="8.5" rx="4" ry="3.4" fill="#1f1f1f"/><ellipse cx="142.4" cy="8.5" rx="4" ry="3.4" fill="#1f1f1f"/><ellipse cx="165.3" cy="8.5" rx="4" ry="3.4" fill="#1f1f1f"/><ellipse cx="188.2" cy="8.5" rx="4" ry="3.4" fill="#1f1f1f"/><ellipse cx="211.1" cy="8.5" rx="4" ry="3.4" fill="#1f1f1f"/><ellipse cx="234.0" cy="8.5" rx="4" ry="3.4" fill="#1f1f1f"/><ellipse cx="256.9" cy="8.5" rx="4" ry="3.4" fill="#1f1f1f"/><ellipse cx="279.8" cy="8.5" rx="4" ry="3.4" fill="#1f1f1f"/><ellipse cx="302.7" cy="8.5" rx="4" ry="3.4" fill="#1f1f1f"/><ellipse cx="325.6" cy="8.5" rx="4" ry="3.4" fill="#1f1f1f"/><ellipse cx="348.5" cy="8.5" rx="4" ry="3.4" fill="#1f1f1f"/><path d="M2 23.2H365" stroke="#1f1f1f" stroke-width="2.8"/><ellipse cx="5.0" cy="23.2" rx="4" ry="3.4" fill="#1f1f1f"/><ellipse cx="27.9" cy="23.2" rx="4" ry="3.4" fill="#1f1f1f"/><ellipse cx="50.8" cy="23.2" rx="4" ry="3.4" fill="#1f1f1f"/><ellipse cx="73.7" cy="23.2" rx="4" ry="3.4" fill="#1f1f1f"/><ellipse cx="96.6" cy="23.2" rx="4" ry="3.4" fill="#1f1f1f"/><ellipse cx="119.5" cy="23.2" rx="4" ry="3.4" fill="#1f1f1f"/><ellipse cx="142.4" cy="23.2" rx="4" ry="3.4" fill="#1f1f1f"/><ellipse cx="165.3" cy="23.2" rx="4" ry="3.4" fill="#1f1f1f"/><ellipse cx="188.2" cy="23.2" rx="4" ry="3.4" fill="#1f1f1f"/><ellipse cx="211.1" cy="23.2" rx="4" ry="3.4" fill="#1f1f1f"/><ellipse cx="234.0" cy="23.2" rx="4" ry="3.4" fill="#1f1f1f"/><ellipse cx="256.9" cy="23.2" rx="4" ry="3.4" fill="#1f1f1f"/><ellipse cx="279.8" cy="23.2" rx="4" ry="3.4" fill="#1f1f1f"/><ellipse cx="302.7" cy="23.2" rx="4" ry="3.4" fill="#1f1f1f"/><ellipse cx="325.6" cy="23.2" rx="4" ry="3.4" fill="#1f1f1f"/><ellipse cx="348.5" cy="23.2" rx="4" ry="3.4" fill="#1f1f1f"/></svg>
<div style="left:2411.60px;top:1545.50px;width:84.40px;height:40.00px;background:#444444;border-radius:7px;"></div>
<div style="left:2419.50px;top:1557.62px;font-size:19px;line-height:19px;height:19px;color:#f2f2f2;font-weight:bold;white-space:nowrap;">Master</div>
<svg style="left:2510.00px;top:1547.00px;" width="36.00" height="36.00" viewBox="0 0 36.00 36.00"><circle cx="17.7" cy="17.7" r="17.2" fill="#4a4a4a"/><path d="M25 9.5V26L10.5 17.7z" fill="#5c5c5c"/></svg>
</div></body></html>
